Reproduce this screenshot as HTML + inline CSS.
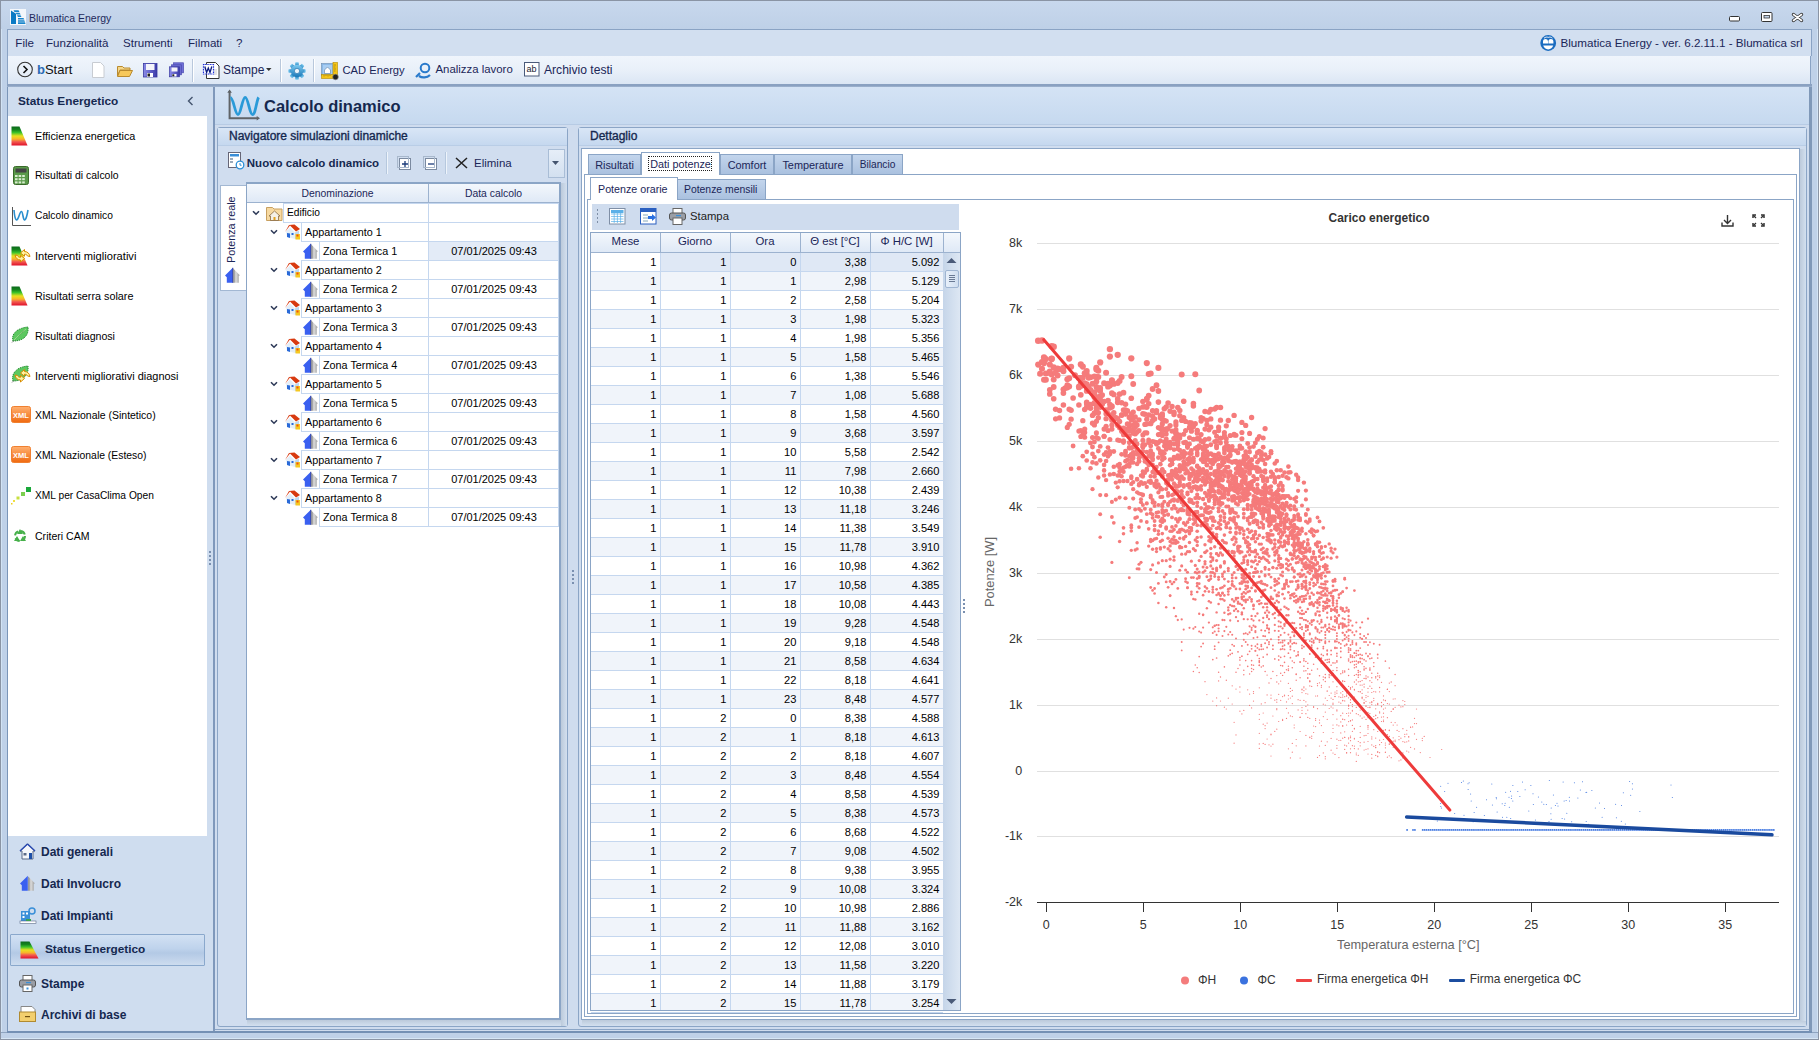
<!DOCTYPE html><html><head><meta charset="utf-8"><style>
*{margin:0;padding:0;box-sizing:border-box}
html,body{width:1819px;height:1040px;overflow:hidden;background:#c3d4ea;font-family:"Liberation Sans",sans-serif;color:#000}
.ab{position:absolute}
.t{position:absolute;white-space:nowrap;line-height:1}
.nv{color:#15284f}
svg{position:absolute;overflow:visible}
</style></head><body>
<div class="ab" style="left:0px;top:0px;width:1819px;height:1040px;background:#bfd1e8;border:1px solid #8a94a4"></div>
<div class="ab" style="left:1px;top:29px;width:1px;height:1010px;background:#d2e3f4"></div>
<div class="ab" style="left:1817px;top:29px;width:1px;height:1010px;background:#d2e3f4"></div>
<div class="ab" style="left:1px;top:1px;width:1817px;height:28px;background:linear-gradient(#c8d8ed,#bed0e7)"></div>
<svg style="left:10px;top:9px" width="16" height="16" viewBox="0 0 16 16"><rect x="0" y="0" width="16" height="16" fill="#f4f7fb"/><path d="M1 1.5L6 4.8V15H1z" fill="#0a7ac4"/><path d="M3.5 1.2h5l1 1.7h-5zM5.5 3.8h4l1.2 1.6h-4zM7 6.3h3.5l1 1.6h-3.5zM8 9h5.5l.8 1.5H8zM8 11.2h6.2l.8 1.5H8zM8 13.3h7l.5 1.7H8z" fill="#1a86cc"/></svg>
<div class="t " style="left:29px;top:13.11px;font-size:10.5px;color:#1e2a5c">Blumatica Energy</div>
<svg style="left:1729px;top:16px" width="12" height="7" viewBox="0 0 12 7"><rect x="0.5" y="0.5" width="10" height="4.5" rx="1" fill="#fff" stroke="#333" stroke-width="1"/></svg>
<svg style="left:1761px;top:12px" width="12" height="10" viewBox="0 0 12 10"><rect x="0.5" y="0.5" width="10.5" height="9" rx="1" fill="#fff" stroke="#333"/><rect x="3" y="3.5" width="5.5" height="2.5" fill="#c2d3e9" stroke="#333" stroke-width="0.8"/></svg>
<svg style="left:1792px;top:13px" width="11" height="9" viewBox="0 0 11 9"><path d="M1.5 1.5L9.5 7.5M9.5 1.5L1.5 7.5" stroke="#333" stroke-width="3.4" stroke-linecap="round"/><path d="M1.5 1.5L9.5 7.5M9.5 1.5L1.5 7.5" stroke="#fff" stroke-width="1.6" stroke-linecap="round"/></svg>
<div class="ab" style="left:7px;top:29px;width:1805px;height:27px;background:#d2dff0;border-top:1px solid #8aa3c4;border-left:1px solid #8aa3c4;border-right:1px solid #8aa3c4"></div>
<div class="t " style="left:15.3px;top:36.68px;font-size:11.6px;color:#1b2658">File</div>
<div class="t " style="left:46px;top:36.68px;font-size:11.6px;color:#1b2658">Funzionalità</div>
<div class="t " style="left:123px;top:36.68px;font-size:11.6px;color:#1b2658">Strumenti</div>
<div class="t " style="left:188px;top:36.68px;font-size:11.6px;color:#1b2658">Filmati</div>
<div class="t " style="left:236px;top:36.68px;font-size:11.6px;color:#1b2658">?</div>
<div class="t " style="left:1502.5px;width:300px;text-align:right;top:36.62px;font-size:11.67px;color:#1b2658">Blumatica Energy - ver. 6.2.11.1 - Blumatica srl</div>
<svg style="left:1540px;top:35px" width="17" height="16" viewBox="0 0 17 16"><circle cx="8.2" cy="8" r="7.9" fill="#1a6cc0"/><path d="M3 8.6V6.5C3 4.8 4.2 4 5.5 4S8 4.8 8 6.5V8.6zM8.4 8.6V6.5C8.4 4.8 9.6 4 10.9 4S13.4 4.8 13.4 6.5V8.6z" fill="#fff"/><path d="M3.2 10.6H13.2C12.6 13 10.6 14.4 8.2 14.4S3.8 13 3.2 10.6z" fill="#fff"/><path d="M4 3.2C5.5 2 7 1.8 8.2 2.4 9.4 1.8 11 2 12.4 3.2" fill="none" stroke="#fff" stroke-width=".9"/></svg>
<div class="ab" style="left:7px;top:56px;width:1804px;height:28px;background:linear-gradient(#f0f5fc,#e9f0f9 50%,#dbe6f4);border-left:1px solid #8aa3c4;border-right:1px solid #8aa3c4"></div>
<div class="ab" style="left:7px;top:84px;width:1805px;height:2px;background:#8ba3c3"></div>
<svg style="left:17px;top:61px" width="17" height="17" viewBox="0 0 17 17"><circle cx="8" cy="8.5" r="7.3" fill="none" stroke="#333" stroke-width="1.1"/><path d="M6.5 5l3.5 3.5-3.5 3.5" fill="none" stroke="#111" stroke-width="1.6"/></svg>
<div class="t " style="left:37px;top:63.00px;font-size:13px;color:#111"><span style="color:#2c6bb5;font-weight:bold">b</span>Start</div>
<svg style="left:91px;top:62px" width="14" height="16" viewBox="0 0 14 16"><path d="M1.5 .5h8l3.5 3.5v11.5h-11.5z" fill="#fff" stroke="#c8ccd2"/></svg>
<svg style="left:117px;top:64px" width="16" height="13" viewBox="0 0 16 13"><path d="M.5 2.5h5l1.5 1.5h6v2h-10l-2.5 6z" fill="#f5d78a" stroke="#b98a2e"/><path d="M3 6.5h12.5l-3 6h-12z" fill="#f7c85a" stroke="#b98a2e"/></svg>
<svg style="left:143px;top:63px" width="15" height="15" viewBox="0 0 15 15"><defs><linearGradient id="fg" x1="0" x2="1"><stop offset="0" stop-color="#8a8ae8"/><stop offset="1" stop-color="#3a3aa8"/></linearGradient></defs><rect x=".5" y=".5" width="13.5" height="13.5" fill="url(#fg)" stroke="#3838a0" stroke-width=".8"/><rect x="3" y="1" width="8.5" height="6" fill="#f4f4fa"/><rect x="4" y="10" width="6" height="4" fill="#fff"/><rect x="4.5" y="10.5" width="2.5" height="3" fill="#222"/></svg>
<svg style="left:169px;top:62px" width="15" height="16" viewBox="0 0 15 16"><rect x="4.5" y=".8" width="10" height="10" fill="#7070d8" stroke="#4a4ab0" stroke-width=".7"/><rect x="2.5" y="2.8" width="10" height="10" fill="#6a6ad0" stroke="#4a4ab0" stroke-width=".7"/><rect x=".5" y="4.8" width="10" height="10" fill="url(#fg)" stroke="#3838a0" stroke-width=".7"/><rect x="2.5" y="5.5" width="6" height="4" fill="#f4f4fa"/><rect x="3" y="12" width="4.5" height="2.5" fill="#fff"/><rect x="3.3" y="12.3" width="2" height="2" fill="#222"/></svg>
<div class="ab" style="left:192px;top:59px;width:1px;height:23px;background:#b9c8dc;box-shadow:1px 0 0 #fff"></div>
<svg style="left:203px;top:62px" width="17" height="17" viewBox="0 0 17 17"><path d="M3.5 .5h9l3.5 3.5v12.5h-12.5z" fill="#fff" stroke="#333"/><path d="M11 8h3M11 10h3M11 12h3" stroke="#aaa" stroke-width=".6"/><rect x=".5" y="2.5" width="10" height="9.5" fill="#fff" stroke="#1d2fd8" stroke-width="1.2" stroke-dasharray="1 .6"/><path d="M1.8 4.5l1.8 6 1.7-4.5 1.7 4.5 1.8-6" fill="none" stroke="#0a1a80" stroke-width="1.3"/></svg>
<div class="t " style="left:223px;top:63.84px;font-size:12px;color:#1b2658">Stampe</div>
<svg style="left:266px;top:68px" width="6" height="4" viewBox="0 0 6 4"><path d="M0 0h5.5l-2.75 3z" fill="#333"/></svg>
<div class="ab" style="left:280px;top:59px;width:1px;height:23px;background:#b9c8dc;box-shadow:1px 0 0 #fff"></div>
<svg style="left:288px;top:62px" width="18" height="18" viewBox="0 0 18 18"><defs><linearGradient id="gg" x1="0" y1="0" x2="0" y2="1"><stop offset="0" stop-color="#7ccaf0"/><stop offset="1" stop-color="#1a78b8"/></linearGradient></defs><rect x="7.2" y="0.3" width="3.6" height="4" rx=".8" fill="url(#gg)" transform="rotate(0 9 9)"/><rect x="7.2" y="0.3" width="3.6" height="4" rx=".8" fill="url(#gg)" transform="rotate(45 9 9)"/><rect x="7.2" y="0.3" width="3.6" height="4" rx=".8" fill="url(#gg)" transform="rotate(90 9 9)"/><rect x="7.2" y="0.3" width="3.6" height="4" rx=".8" fill="url(#gg)" transform="rotate(135 9 9)"/><rect x="7.2" y="0.3" width="3.6" height="4" rx=".8" fill="url(#gg)" transform="rotate(180 9 9)"/><rect x="7.2" y="0.3" width="3.6" height="4" rx=".8" fill="url(#gg)" transform="rotate(225 9 9)"/><rect x="7.2" y="0.3" width="3.6" height="4" rx=".8" fill="url(#gg)" transform="rotate(270 9 9)"/><rect x="7.2" y="0.3" width="3.6" height="4" rx=".8" fill="url(#gg)" transform="rotate(315 9 9)"/><circle cx="9" cy="9" r="6.2" fill="url(#gg)"/><circle cx="9" cy="9" r="2.6" fill="#eef6fc" stroke="#1a6aa8" stroke-width=".6"/></svg>
<div class="ab" style="left:313px;top:59px;width:1px;height:23px;background:#b9c8dc;box-shadow:1px 0 0 #fff"></div>
<svg style="left:321px;top:62px" width="18" height="18" viewBox="0 0 18 18"><rect x=".5" y="1.5" width="12" height="12" fill="#8ab8e8" stroke="#6a8ab0" stroke-width=".6"/><path d="M2 3h9v9H2z" fill="#a8cdf2"/><path d="M3.5 8L6.5 5 9.5 8V11.5h-6z" fill="#fff" stroke="#5a7aa0" stroke-width=".6"/><rect x="12" y=".5" width="4.5" height="15" fill="#f5c518" stroke="#b58a00" stroke-width=".6"/><rect x=".5" y="12.5" width="15" height="4" fill="#f5c518" stroke="#b58a00" stroke-width=".6"/><path d="M13 3h2M13 5h1.5M13 7h2M13 9h1.5M3 13v1.5M5 13v1M7 13v1.5M9 13v1" stroke="#7a5a00" stroke-width=".5"/><circle cx="14.5" cy="15" r="2.8" fill="#222" stroke="#888" stroke-width=".6"/></svg>
<div class="t " style="left:342.5px;top:64.52px;font-size:11.2px;color:#1b2658">CAD Energy</div>
<svg style="left:415px;top:62px" width="17" height="17" viewBox="0 0 17 17"><circle cx="10" cy="6" r="4.3" fill="none" stroke="#2a7acb" stroke-width="2"/><path d="M1 15l4-4M4 14c3 2 8 2 11-1" fill="none" stroke="#2a7acb" stroke-width="2.2"/></svg>
<div class="t " style="left:435.5px;top:64.35px;font-size:11.4px;color:#1b2658">Analizza lavoro</div>
<svg style="left:524px;top:62px" width="16" height="15" viewBox="0 0 16 15"><rect x=".5" y=".5" width="14.5" height="13.5" fill="#fff" stroke="#4a5a7a"/><text x="2.5" y="10" font-size="9" fill="#223" font-family="Liberation Sans">ab</text></svg>
<div class="t " style="left:544px;top:63.76px;font-size:12.1px;color:#1b2658">Archivio testi</div>
<div class="ab" style="left:7px;top:86px;width:1805px;height:946px;background:#cddcef"></div>
<div class="ab" style="left:1px;top:1032px;width:1817px;height:7px;background:#bfd1e8;border-top:1px solid #8ea4c0"></div>
<div class="ab" style="left:1px;top:1038px;width:1817px;height:1px;background:#d6e6f5"></div>
<div class="ab" style="left:7px;top:85px;width:207px;height:947px;background:#cfddef;border-left:1px solid #7a95b8;border-bottom:1px solid #8aa3c4"></div>
<div class="t nv" style="left:18px;top:96.01px;font-size:11.8px;font-weight:bold">Status Energetico</div>
<svg style="left:187px;top:96px" width="7" height="10" viewBox="0 0 7 10"><path d="M5.5 1L1.5 5l4 4" fill="none" stroke="#44546e" stroke-width="1.4"/></svg>
<div class="ab" style="left:8px;top:116px;width:199px;height:720px;background:#fff"></div>
<div class="ab" style="left:207px;top:116px;width:6px;height:916px;background:#cfddef"></div>
<div class="ab" style="left:209px;top:551px;width:2px;height:2px;background:#7a90b0"></div>
<div class="ab" style="left:209px;top:555px;width:2px;height:2px;background:#7a90b0"></div>
<div class="ab" style="left:209px;top:559px;width:2px;height:2px;background:#7a90b0"></div>
<div class="ab" style="left:209px;top:563px;width:2px;height:2px;background:#7a90b0"></div>
<div class="t " style="left:35px;top:130.92px;font-size:10.84px;">Efficienza energetica</div>
<svg style="left:11px;top:126px" width="17" height="20" viewBox="0 0 17 20"><defs><linearGradient id="eg1" x1="0" y1="0" x2="0" y2="1"><stop offset="0" stop-color="#0b6a1c"/><stop offset=".18" stop-color="#16861e"/><stop offset=".32" stop-color="#3cc22a"/><stop offset=".5" stop-color="#e8e020"/><stop offset=".66" stop-color="#f7b52a"/><stop offset=".8" stop-color="#f25a50"/><stop offset="1" stop-color="#e0102a"/></linearGradient></defs><path d="M0.5 0.5H8.5L16.5 19.5H0.5z" fill="url(#eg1)"/></svg>
<div class="t " style="left:35px;top:171.25px;font-size:10.45px;">Risultati di calcolo</div>
<svg style="left:13px;top:166px" width="16" height="19" viewBox="0 0 16 19"><rect x=".5" y=".5" width="15" height="18" rx="2" fill="#5a9a4a" stroke="#3a6a2a"/><rect x="2.5" y="2.5" width="11" height="4" fill="#444"/><rect x="2.0" y="9.0" width="2.6" height="2" fill="#d9ecd0"/><rect x="2.0" y="12.2" width="2.6" height="2" fill="#d9ecd0"/><rect x="2.0" y="15.4" width="2.6" height="2" fill="#d9ecd0"/><rect x="5.6" y="9.0" width="2.6" height="2" fill="#d9ecd0"/><rect x="5.6" y="12.2" width="2.6" height="2" fill="#d9ecd0"/><rect x="5.6" y="15.4" width="2.6" height="2" fill="#d9ecd0"/><rect x="9.2" y="9.0" width="2.6" height="2" fill="#d9ecd0"/><rect x="9.2" y="12.2" width="2.6" height="2" fill="#d9ecd0"/><rect x="9.2" y="15.4" width="2.6" height="2" fill="#d9ecd0"/></svg>
<div class="t " style="left:35px;top:211.44px;font-size:10.23px;">Calcolo dinamico</div>
<svg style="left:12px;top:207px" width="19" height="19" viewBox="0 0 19 19"><path d="M.5 0v18.5H19" fill="none" stroke="#555" stroke-width="1"/><path d="M2 3c1 12 3 12 5 6s3-6 4 0 3 6 5-6" fill="none" stroke="#2a8fcf" stroke-width="1.6"/></svg>
<div class="t " style="left:35px;top:250.67px;font-size:11.14px;">Interventi migliorativi</div>
<svg style="left:11px;top:246px" width="17" height="20" viewBox="0 0 17 20"><defs><linearGradient id="eg2" x1="0" y1="0" x2="0" y2="1"><stop offset="0" stop-color="#0b6a1c"/><stop offset=".18" stop-color="#16861e"/><stop offset=".32" stop-color="#3cc22a"/><stop offset=".5" stop-color="#e8e020"/><stop offset=".66" stop-color="#f7b52a"/><stop offset=".8" stop-color="#f25a50"/><stop offset="1" stop-color="#e0102a"/></linearGradient></defs><path d="M0.5 0.5H8.5L16.5 19.5H0.5z" fill="url(#eg2)"/></svg>
<svg style="left:14px;top:247px" width="17" height="17" viewBox="0 0 17 17"><path d="M6.5 6L10.5 2.5V4.5C13.5 4.5 15.5 6.5 16 9.5L13.5 9C13 7.8 12 7.2 10.5 7.2V9.2Z" fill="#fff3a0" stroke="#d88a00" stroke-width="1"/><path d="M10.5 11.5L6.5 15V13C3.5 13 1.5 11 1 8L3.5 8.5C4 9.7 5 10.3 6.5 10.3V8.3Z" fill="#fff3a0" stroke="#d88a00" stroke-width="1"/></svg>
<div class="t " style="left:35px;top:290.96px;font-size:10.8px;">Risultati serra solare</div>
<svg style="left:11px;top:286px" width="17" height="20" viewBox="0 0 17 20"><defs><linearGradient id="eg3" x1="0" y1="0" x2="0" y2="1"><stop offset="0" stop-color="#0b6a1c"/><stop offset=".18" stop-color="#16861e"/><stop offset=".32" stop-color="#3cc22a"/><stop offset=".5" stop-color="#e8e020"/><stop offset=".66" stop-color="#f7b52a"/><stop offset=".8" stop-color="#f25a50"/><stop offset="1" stop-color="#e0102a"/></linearGradient></defs><path d="M0.5 0.5H8.5L16.5 19.5H0.5z" fill="url(#eg3)"/></svg>
<div class="t " style="left:35px;top:331.14px;font-size:10.58px;">Risultati diagnosi</div>
<svg style="left:11px;top:326px" width="18" height="18" viewBox="0 0 18 18"><path d="M2 15C0 8 6 2 17 1c1 9-5 14-15 14z" fill="#5cc860" stroke="#1e8a2a" stroke-dasharray="1.2 .8"/><path d="M3 14C7 10 10 7 15 3" stroke="#9ada8a" stroke-width="1"/><path d="M1 16.5l2-2" stroke="#888" stroke-width="1"/></svg>
<div class="t " style="left:35px;top:370.84px;font-size:10.94px;">Interventi migliorativi diagnosi</div>
<svg style="left:11px;top:365px" width="18" height="19" viewBox="0 0 18 19"><path d="M2 16C0 8 6 2 17 1c1 9-5 15-15 15z" fill="#5cc860" stroke="#1e8a2a" stroke-dasharray="1.2 .8"/><path d="M1 17.5l2-2" stroke="#888" stroke-width="1"/></svg>
<svg style="left:14px;top:367px" width="17" height="17" viewBox="0 0 17 17"><path d="M6.5 6L10.5 2.5V4.5C13.5 4.5 15.5 6.5 16 9.5L13.5 9C13 7.8 12 7.2 10.5 7.2V9.2Z" fill="#fff3a0" stroke="#d88a00" stroke-width="1"/><path d="M10.5 11.5L6.5 15V13C3.5 13 1.5 11 1 8L3.5 8.5C4 9.7 5 10.3 6.5 10.3V8.3Z" fill="#fff3a0" stroke="#d88a00" stroke-width="1"/></svg>
<div class="t " style="left:35px;top:411.24px;font-size:10.47px;">XML Nazionale (Sintetico)</div>
<svg style="left:11px;top:406px" width="20" height="17" viewBox="0 0 20 17"><defs><linearGradient id="xg" x1="0" y1="0" x2="0" y2="1"><stop offset="0" stop-color="#ffb070"/><stop offset="1" stop-color="#f06a10"/></linearGradient></defs><rect x=".5" y=".5" width="19" height="16" rx="2" fill="url(#xg)" stroke="#f08030"/><text x="2" y="11.5" font-size="7.5" font-weight="bold" fill="#fff" font-family="Liberation Sans">XML</text></svg>
<div class="t " style="left:35px;top:451.30px;font-size:10.39px;">XML Nazionale (Esteso)</div>
<svg style="left:11px;top:446px" width="20" height="17" viewBox="0 0 20 17"><defs><linearGradient id="xg" x1="0" y1="0" x2="0" y2="1"><stop offset="0" stop-color="#ffb070"/><stop offset="1" stop-color="#f06a10"/></linearGradient></defs><rect x=".5" y=".5" width="19" height="16" rx="2" fill="url(#xg)" stroke="#f08030"/><text x="2" y="11.5" font-size="7.5" font-weight="bold" fill="#fff" font-family="Liberation Sans">XML</text></svg>
<div class="t " style="left:35px;top:491.44px;font-size:10.23px;">XML per CasaClima Open</div>
<svg style="left:11px;top:486px" width="20" height="19" viewBox="0 0 20 19"><rect x="15" y="1" width="5" height="5" fill="#1aa83a"/><rect x="10" y="6" width="4" height="4" fill="#7ccf50"/><rect x="5.5" y="10.5" width="3" height="3" fill="#c8e040"/><rect x="2" y="14" width="2" height="2" fill="#f0e040"/><rect x="0" y="17" width="1.5" height="1.5" fill="#f0d020"/></svg>
<div class="t " style="left:35px;top:531.16px;font-size:10.56px;">Criteri CAM</div>
<svg style="left:12px;top:528px" width="16" height="15" viewBox="0 0 16 15"><path d="M8 1l3 5H5zM2 13l3-5 3 5zM14 13H8l3-5z" fill="#46b04a"/><circle cx="8" cy="8" r="5" fill="none" stroke="#46b04a" stroke-width="2" stroke-dasharray="5 3"/></svg>
<div class="t nv" style="left:41px;top:845.84px;font-size:12px;font-weight:bold">Dati generali</div>
<svg style="left:19px;top:843px" width="17" height="17" viewBox="0 0 17 17"><path d="M8.5 1L1 8h2v8h11V8h2z" fill="#f4f6fa" stroke="#5a6a88"/><path d="M8.5 1L1 8M8.5 1L16 8" stroke="#2a4ab0" stroke-width="1.5"/><rect x="10" y="10" width="3" height="6" fill="#1d4fa8"/><rect x="4.5" y="10" width="3" height="2.5" fill="#5a6a88"/></svg>
<div class="t nv" style="left:41px;top:877.84px;font-size:12px;font-weight:bold">Dati Involucro</div>
<svg style="left:19px;top:875px" width="17" height="17" viewBox="0 0 17 17"><defs><linearGradient id="gz2" x1="0" x2="1"><stop offset="0" stop-color="#777"/><stop offset=".4" stop-color="#ddd"/><stop offset="1" stop-color="#999"/></linearGradient></defs><path d="M1 8.5L8.8 .8V15.8H2.8V10.3z" fill="#3a60f0"/><path d="M9.3 1.5L15.8 8.2 14.8 9V15.8H9.3z" fill="url(#gz2)"/></svg>
<div class="t nv" style="left:41px;top:909.84px;font-size:12px;font-weight:bold">Dati Impianti</div>
<svg style="left:20px;top:907px" width="16" height="17" viewBox="0 0 16 17"><rect x="1" y="4" width="9" height="10" fill="#3a8fd8"/><rect x="2.5" y="5.5" width="2" height="2" fill="#fff"/><rect x="6" y="5.5" width="2" height="2" fill="#fff"/><rect x="2.5" y="9" width="2" height="2" fill="#fff"/><circle cx="12" cy="4" r="3" fill="none" stroke="#3a8fd8" stroke-width="1.5"/><rect x="0" y="14" width="16" height="2.5" fill="#fff" stroke="#5a6a88" stroke-width=".6"/><rect x="6" y="12" width="5" height="2" fill="#3aa050"/></svg>
<div class="ab" style="left:10px;top:934px;width:195px;height:32px;background:linear-gradient(#d2e1f3,#bfd3ec 45%,#b3c9e5 60%,#cddcef);border:1px solid #8aa8cc;border-radius:1px"></div>
<svg style="left:20px;top:941px" width="19" height="18" viewBox="0 0 19 18"><defs><linearGradient id="eg4" x1="0" y1="0" x2="0" y2="1"><stop offset="0" stop-color="#0b6a1c"/><stop offset=".18" stop-color="#16861e"/><stop offset=".32" stop-color="#3cc22a"/><stop offset=".5" stop-color="#e8e020"/><stop offset=".66" stop-color="#f7b52a"/><stop offset=".8" stop-color="#f25a50"/><stop offset="1" stop-color="#e0102a"/></linearGradient></defs><path d="M0.5 0.5H9.5L18.5 17.5H0.5z" fill="url(#eg4)"/></svg>
<div class="t nv" style="left:45px;top:944.41px;font-size:11.8px;font-weight:bold">Status Energetico</div>
<div class="t nv" style="left:41px;top:977.64px;font-size:12px;font-weight:bold">Stampe</div>
<svg style="left:19px;top:975px" width="17" height="17" viewBox="0 0 17 17"><rect x="4" y="0.5" width="9" height="5" fill="#fff" stroke="#666"/><rect x=".5" y="5" width="16" height="7" rx="2" fill="#9a9ea6" stroke="#555"/><rect x="4" y="10" width="9" height="6.5" fill="#fff" stroke="#666"/><rect x="7" y="7" width="5" height="1.2" fill="#3a8fd8"/><rect x="7.5" y="12.5" width="2" height="2" fill="#3a8fd8"/></svg>
<div class="t nv" style="left:41px;top:1008.84px;font-size:12px;font-weight:bold">Archivi di base</div>
<svg style="left:19px;top:1006px" width="17" height="16" viewBox="0 0 17 16"><path d="M2 .5h11l3 3v3H2z" fill="#fff" stroke="#888"/><rect x=".5" y="6" width="16" height="9.5" fill="#f3cf6e" stroke="#b08a30"/><rect x="6" y="10" width="5" height="1.2" fill="#705010"/></svg>
<div class="ab" style="left:213px;top:86px;width:1599px;height:946px;background:#cfdcee"></div>
<div class="ab" style="left:213px;top:86px;width:2px;height:946px;background:#7f98bb"></div>
<div class="ab" style="left:215px;top:87px;width:1594px;height:38px;background:linear-gradient(#d4e3f5,#c6d9ef);border-bottom:1px solid #b7cbe4"></div>
<div class="ab" style="left:1809px;top:86px;width:3px;height:946px;background:#7f98b8"></div>
<div class="ab" style="left:215px;top:1029px;width:1594px;height:1px;background:#8ba5c6"></div>
<div class="ab" style="left:7px;top:1031px;width:1805px;height:2px;background:#7490b4"></div>
<div class="ab" style="left:7px;top:84px;width:1805px;height:3px;background:linear-gradient(#8aa1c1,#8aa1c1 66%,#a9bcd6)"></div>
<svg style="left:225px;top:88px" width="36" height="36" viewBox="0 0 36 36"><path d="M4.6 3v27.3H33" fill="none" stroke="#5f6468" stroke-width="2"/><path d="M4.6 1.5L2.3 4.8h4.6zM35 30.3l-3.3-2.3v4.6z" fill="#5f6468"/><path d="M5.4 9.7C8.5 9.7 10 26.6 13 26.6S17.2 9.3 20.2 9.3 24.5 26.6 27.5 26.6 31.6 12 33.6 9.3" fill="none" stroke="#2a9ad8" stroke-width="2.8"/></svg>
<div class="t nv" style="left:264px;top:98.03px;font-size:16.5px;font-weight:bold">Calcolo dinamico</div>
<div class="ab" style="left:217px;top:127px;width:351px;height:900px;background:#d0ddef;border:1px solid #8ba5c6;border-radius:3px"></div>
<div class="ab" style="left:218px;top:128px;width:349px;height:18px;background:linear-gradient(#d9e6f6,#c5d8ef);border-bottom:1px solid #b9cde6"></div>
<div class="t nv" style="left:229px;top:129.64px;font-size:12px;-webkit-text-stroke:0.35px #15284f">Navigatore simulazioni dinamiche</div>
<div class="ab" style="left:247px;top:1020px;width:320px;height:6px;background:linear-gradient(#bccadb,#d3e0ef)"></div>
<svg style="left:228px;top:152px" width="16" height="17" viewBox="0 0 16 17"><rect x=".5" y=".5" width="12" height="15" fill="#fff" stroke="#667"/><rect x="2" y="2" width="9" height="2.5" fill="#3a8fd8"/><rect x="2" y="6" width="3" height="2" fill="#9ab"/><rect x="2" y="9" width="3" height="2" fill="#9ab"/><circle cx="12" cy="13" r="3.8" fill="#fff" stroke="#2a8fd8" stroke-width="1.3"/><path d="M12 11v2.2h1.6" stroke="#2a8fd8" fill="none"/></svg>
<div class="t nv" style="left:246.8px;top:158.27px;font-size:11.5px;font-weight:bold">Nuovo calcolo dinamico</div>
<div class="ab" style="left:386px;top:152px;width:1px;height:22px;background:#b6c8de;box-shadow:1px 0 0 #eef4fb"></div>
<svg style="left:397px;top:156px" width="14" height="14" viewBox="0 0 14 14"><rect x="2.5" y="2.5" width="11" height="11" fill="#fff" stroke="#7b8aa0"/><rect x=".5" y=".5" width="11" height="11" fill="none" stroke="#a8b8cc"/><path d="M8 5v6M5 8h6" stroke="#1c3c7a" stroke-width="1.3"/></svg>
<svg style="left:423px;top:156px" width="14" height="14" viewBox="0 0 14 14"><rect x="2.5" y="2.5" width="11" height="11" fill="#fff" stroke="#7b8aa0"/><rect x=".5" y=".5" width="11" height="11" fill="none" stroke="#a8b8cc"/><path d="M5 8h6" stroke="#1c3c7a" stroke-width="1.3"/></svg>
<div class="ab" style="left:445px;top:152px;width:1px;height:22px;background:#b6c8de;box-shadow:1px 0 0 #eef4fb"></div>
<svg style="left:455px;top:157px" width="13" height="12" viewBox="0 0 13 12"><path d="M1 1l11 10M12 1L1 11" stroke="#222" stroke-width="1.5"/></svg>
<div class="t " style="left:474px;top:158.27px;font-size:11.5px;color:#1b2658">Elimina</div>
<div class="ab" style="left:548px;top:149px;width:17px;height:29px;background:linear-gradient(#e6eef8,#d3e0f0);border:1px solid #a9bdd6"></div>
<svg style="left:552px;top:161px" width="8" height="5" viewBox="0 0 8 5"><path d="M0 0h7l-3.5 4z" fill="#44546e"/></svg>
<div class="ab" style="left:220px;top:185px;width:26px;height:106px;background:#fff;border:1px solid #a3b8d3;border-right:none"></div>
<div class="t" style="left:226px;top:263px;font-size:10.8px;transform:rotate(-90deg);transform-origin:0 0;color:#1b2658">Potenza reale</div>
<svg style="left:224px;top:267px" width="17" height="17" viewBox="0 0 17 17"><path d="M1 8.5L8.8 .8V15.8H2.8V10.3z" fill="#3a60f0"/><path d="M8.8 .8v15" stroke="#2a3aa0" stroke-width="1"/><path d="M9.3 1.5L15.8 8.2 14.8 9V15.8H9.3z" fill="url(#gz)"/></svg>
<div class="ab" style="left:246px;top:182px;width:315px;height:838px;background:#fff;border:1px solid #8ba5c6;border-top:2px solid #8ba5c6;border-bottom:2px solid #8ba5c6;border-right:2px solid #8ba5c6"></div>
<div class="ab" style="left:561px;top:183px;width:6px;height:843px;background:linear-gradient(90deg,#bccadb,#d3e0ef)"></div>
<div class="ab" style="left:247px;top:184px;width:312px;height:19px;background:linear-gradient(#f3f7fc,#dfe9f6);border-bottom:1px solid #9cb2cf"></div>
<div class="ab" style="left:428px;top:184px;width:1px;height:19px;background:#9cb2cf"></div>
<div class="t " style="left:37.5px;width:600px;text-align:center;top:188.70px;font-size:10.4px;color:#1b2658">Denominazione</div>
<div class="t " style="left:193.5px;width:600px;text-align:center;top:188.70px;font-size:10.4px;color:#1b2658">Data calcolo</div>
<div class="ab" style="left:283px;top:203px;width:146px;height:20px;border:1px solid #c5d7ef;border-right:none"></div>
<div class="ab" style="left:428px;top:203px;width:131px;height:20px;border:1px solid #c5d7ef;border-left:1px solid #c5d7ef"></div>
<div class="t " style="left:287px;top:208.37px;font-size:10.2px;">Edificio</div>
<svg style="left:252px;top:210px" width="8" height="6" viewBox="0 0 8 6"><path d="M1 1.2l3 3 3-3" fill="none" stroke="#2e3a58" stroke-width="1.6"/></svg>
<svg style="left:266px;top:205px" width="17" height="16" viewBox="0 0 17 16"><path d="M.5 2.5h6l1.5 1.5h8v11.5H.5z" fill="#f7d9a0" stroke="#c8a060"/><path d="M8.5 6L3 11h1.5v4.5h8V11H14z" fill="#f5f0e6" stroke="#8a6a40" stroke-width=".8"/><rect x="7.5" y="12" width="2" height="3" fill="#e0a020"/></svg>
<div class="ab" style="left:301px;top:222px;width:128px;height:20px;border:1px solid #c5d7ef;border-right:none"></div>
<div class="ab" style="left:428px;top:222px;width:131px;height:20px;border:1px solid #c5d7ef;border-left:1px solid #c5d7ef"></div>
<div class="t " style="left:305px;top:226.86px;font-size:10.8px;">Appartamento 1</div>
<svg style="left:270px;top:229px" width="8" height="6" viewBox="0 0 8 6"><path d="M1 1.2l3 3 3-3" fill="none" stroke="#2e3a58" stroke-width="1.6"/></svg>
<svg style="left:284px;top:224px" width="17" height="16" viewBox="0 0 17 16"><path d="M2 7.5L6 3.5 11 8.5V15L3 13z" fill="#e4eef8"/><path d="M11 8.5L15 6.5V13L11 15z" fill="#bcd8f0"/><path d="M1 8L6 1.5 12 7.5 16 5 10.5 .5 5 1z" fill="#d83a10"/><path d="M3 9v4l3 1V9.5z" fill="#2a6ad8"/><rect x="7.5" y="9" width="2" height="2" fill="#2a6ad8"/><rect x="11.5" y="10" width="4.5" height="5.5" fill="#f6c820"/><rect x="12.5" y="10.5" width="2" height="2" fill="#f05010"/></svg>
<div class="ab" style="left:319px;top:241px;width:110px;height:20px;border:1px solid #c5d7ef;border-right:none"></div>
<div class="ab" style="left:428px;top:241px;width:131px;height:20px;border:1px solid #c5d7ef;border-left:1px solid #c5d7ef;background:#e3ebf7"></div>
<div class="t " style="left:323px;top:245.86px;font-size:10.8px;">Zona Termica 1</div>
<div class="t " style="left:194px;width:600px;text-align:center;top:245.69px;font-size:11px;">07/01/2025 09:43</div>
<svg style="left:302px;top:243px" width="17" height="17" viewBox="0 0 17 17"><defs><linearGradient id="gz" x1="0" x2="1"><stop offset="0" stop-color="#777"/><stop offset=".4" stop-color="#ddd"/><stop offset="1" stop-color="#999"/></linearGradient></defs><path d="M1 8.5L8.8 .8V15.8H2.8V10.3z" fill="#3a60f0"/><path d="M8.8 .8v15" stroke="#2a3aa0" stroke-width="1"/><path d="M9.3 1.5L15.8 8.2 14.8 9V15.8H9.3z" fill="url(#gz)"/></svg>
<div class="ab" style="left:301px;top:260px;width:128px;height:20px;border:1px solid #c5d7ef;border-right:none"></div>
<div class="ab" style="left:428px;top:260px;width:131px;height:20px;border:1px solid #c5d7ef;border-left:1px solid #c5d7ef"></div>
<div class="t " style="left:305px;top:264.86px;font-size:10.8px;">Appartamento 2</div>
<svg style="left:270px;top:267px" width="8" height="6" viewBox="0 0 8 6"><path d="M1 1.2l3 3 3-3" fill="none" stroke="#2e3a58" stroke-width="1.6"/></svg>
<svg style="left:284px;top:262px" width="17" height="16" viewBox="0 0 17 16"><path d="M2 7.5L6 3.5 11 8.5V15L3 13z" fill="#e4eef8"/><path d="M11 8.5L15 6.5V13L11 15z" fill="#bcd8f0"/><path d="M1 8L6 1.5 12 7.5 16 5 10.5 .5 5 1z" fill="#d83a10"/><path d="M3 9v4l3 1V9.5z" fill="#2a6ad8"/><rect x="7.5" y="9" width="2" height="2" fill="#2a6ad8"/><rect x="11.5" y="10" width="4.5" height="5.5" fill="#f6c820"/><rect x="12.5" y="10.5" width="2" height="2" fill="#f05010"/></svg>
<div class="ab" style="left:319px;top:279px;width:110px;height:20px;border:1px solid #c5d7ef;border-right:none"></div>
<div class="ab" style="left:428px;top:279px;width:131px;height:20px;border:1px solid #c5d7ef;border-left:1px solid #c5d7ef"></div>
<div class="t " style="left:323px;top:283.86px;font-size:10.8px;">Zona Termica 2</div>
<div class="t " style="left:194px;width:600px;text-align:center;top:283.69px;font-size:11px;">07/01/2025 09:43</div>
<svg style="left:302px;top:281px" width="17" height="17" viewBox="0 0 17 17"><defs><linearGradient id="gz" x1="0" x2="1"><stop offset="0" stop-color="#777"/><stop offset=".4" stop-color="#ddd"/><stop offset="1" stop-color="#999"/></linearGradient></defs><path d="M1 8.5L8.8 .8V15.8H2.8V10.3z" fill="#3a60f0"/><path d="M8.8 .8v15" stroke="#2a3aa0" stroke-width="1"/><path d="M9.3 1.5L15.8 8.2 14.8 9V15.8H9.3z" fill="url(#gz)"/></svg>
<div class="ab" style="left:301px;top:298px;width:128px;height:20px;border:1px solid #c5d7ef;border-right:none"></div>
<div class="ab" style="left:428px;top:298px;width:131px;height:20px;border:1px solid #c5d7ef;border-left:1px solid #c5d7ef"></div>
<div class="t " style="left:305px;top:302.86px;font-size:10.8px;">Appartamento 3</div>
<svg style="left:270px;top:305px" width="8" height="6" viewBox="0 0 8 6"><path d="M1 1.2l3 3 3-3" fill="none" stroke="#2e3a58" stroke-width="1.6"/></svg>
<svg style="left:284px;top:300px" width="17" height="16" viewBox="0 0 17 16"><path d="M2 7.5L6 3.5 11 8.5V15L3 13z" fill="#e4eef8"/><path d="M11 8.5L15 6.5V13L11 15z" fill="#bcd8f0"/><path d="M1 8L6 1.5 12 7.5 16 5 10.5 .5 5 1z" fill="#d83a10"/><path d="M3 9v4l3 1V9.5z" fill="#2a6ad8"/><rect x="7.5" y="9" width="2" height="2" fill="#2a6ad8"/><rect x="11.5" y="10" width="4.5" height="5.5" fill="#f6c820"/><rect x="12.5" y="10.5" width="2" height="2" fill="#f05010"/></svg>
<div class="ab" style="left:319px;top:317px;width:110px;height:20px;border:1px solid #c5d7ef;border-right:none"></div>
<div class="ab" style="left:428px;top:317px;width:131px;height:20px;border:1px solid #c5d7ef;border-left:1px solid #c5d7ef"></div>
<div class="t " style="left:323px;top:321.86px;font-size:10.8px;">Zona Termica 3</div>
<div class="t " style="left:194px;width:600px;text-align:center;top:321.69px;font-size:11px;">07/01/2025 09:43</div>
<svg style="left:302px;top:319px" width="17" height="17" viewBox="0 0 17 17"><defs><linearGradient id="gz" x1="0" x2="1"><stop offset="0" stop-color="#777"/><stop offset=".4" stop-color="#ddd"/><stop offset="1" stop-color="#999"/></linearGradient></defs><path d="M1 8.5L8.8 .8V15.8H2.8V10.3z" fill="#3a60f0"/><path d="M8.8 .8v15" stroke="#2a3aa0" stroke-width="1"/><path d="M9.3 1.5L15.8 8.2 14.8 9V15.8H9.3z" fill="url(#gz)"/></svg>
<div class="ab" style="left:301px;top:336px;width:128px;height:20px;border:1px solid #c5d7ef;border-right:none"></div>
<div class="ab" style="left:428px;top:336px;width:131px;height:20px;border:1px solid #c5d7ef;border-left:1px solid #c5d7ef"></div>
<div class="t " style="left:305px;top:340.86px;font-size:10.8px;">Appartamento 4</div>
<svg style="left:270px;top:343px" width="8" height="6" viewBox="0 0 8 6"><path d="M1 1.2l3 3 3-3" fill="none" stroke="#2e3a58" stroke-width="1.6"/></svg>
<svg style="left:284px;top:338px" width="17" height="16" viewBox="0 0 17 16"><path d="M2 7.5L6 3.5 11 8.5V15L3 13z" fill="#e4eef8"/><path d="M11 8.5L15 6.5V13L11 15z" fill="#bcd8f0"/><path d="M1 8L6 1.5 12 7.5 16 5 10.5 .5 5 1z" fill="#d83a10"/><path d="M3 9v4l3 1V9.5z" fill="#2a6ad8"/><rect x="7.5" y="9" width="2" height="2" fill="#2a6ad8"/><rect x="11.5" y="10" width="4.5" height="5.5" fill="#f6c820"/><rect x="12.5" y="10.5" width="2" height="2" fill="#f05010"/></svg>
<div class="ab" style="left:319px;top:355px;width:110px;height:20px;border:1px solid #c5d7ef;border-right:none"></div>
<div class="ab" style="left:428px;top:355px;width:131px;height:20px;border:1px solid #c5d7ef;border-left:1px solid #c5d7ef"></div>
<div class="t " style="left:323px;top:359.86px;font-size:10.8px;">Zona Termica 4</div>
<div class="t " style="left:194px;width:600px;text-align:center;top:359.69px;font-size:11px;">07/01/2025 09:43</div>
<svg style="left:302px;top:357px" width="17" height="17" viewBox="0 0 17 17"><defs><linearGradient id="gz" x1="0" x2="1"><stop offset="0" stop-color="#777"/><stop offset=".4" stop-color="#ddd"/><stop offset="1" stop-color="#999"/></linearGradient></defs><path d="M1 8.5L8.8 .8V15.8H2.8V10.3z" fill="#3a60f0"/><path d="M8.8 .8v15" stroke="#2a3aa0" stroke-width="1"/><path d="M9.3 1.5L15.8 8.2 14.8 9V15.8H9.3z" fill="url(#gz)"/></svg>
<div class="ab" style="left:301px;top:374px;width:128px;height:20px;border:1px solid #c5d7ef;border-right:none"></div>
<div class="ab" style="left:428px;top:374px;width:131px;height:20px;border:1px solid #c5d7ef;border-left:1px solid #c5d7ef"></div>
<div class="t " style="left:305px;top:378.86px;font-size:10.8px;">Appartamento 5</div>
<svg style="left:270px;top:381px" width="8" height="6" viewBox="0 0 8 6"><path d="M1 1.2l3 3 3-3" fill="none" stroke="#2e3a58" stroke-width="1.6"/></svg>
<svg style="left:284px;top:376px" width="17" height="16" viewBox="0 0 17 16"><path d="M2 7.5L6 3.5 11 8.5V15L3 13z" fill="#e4eef8"/><path d="M11 8.5L15 6.5V13L11 15z" fill="#bcd8f0"/><path d="M1 8L6 1.5 12 7.5 16 5 10.5 .5 5 1z" fill="#d83a10"/><path d="M3 9v4l3 1V9.5z" fill="#2a6ad8"/><rect x="7.5" y="9" width="2" height="2" fill="#2a6ad8"/><rect x="11.5" y="10" width="4.5" height="5.5" fill="#f6c820"/><rect x="12.5" y="10.5" width="2" height="2" fill="#f05010"/></svg>
<div class="ab" style="left:319px;top:393px;width:110px;height:20px;border:1px solid #c5d7ef;border-right:none"></div>
<div class="ab" style="left:428px;top:393px;width:131px;height:20px;border:1px solid #c5d7ef;border-left:1px solid #c5d7ef"></div>
<div class="t " style="left:323px;top:397.86px;font-size:10.8px;">Zona Termica 5</div>
<div class="t " style="left:194px;width:600px;text-align:center;top:397.69px;font-size:11px;">07/01/2025 09:43</div>
<svg style="left:302px;top:395px" width="17" height="17" viewBox="0 0 17 17"><defs><linearGradient id="gz" x1="0" x2="1"><stop offset="0" stop-color="#777"/><stop offset=".4" stop-color="#ddd"/><stop offset="1" stop-color="#999"/></linearGradient></defs><path d="M1 8.5L8.8 .8V15.8H2.8V10.3z" fill="#3a60f0"/><path d="M8.8 .8v15" stroke="#2a3aa0" stroke-width="1"/><path d="M9.3 1.5L15.8 8.2 14.8 9V15.8H9.3z" fill="url(#gz)"/></svg>
<div class="ab" style="left:301px;top:412px;width:128px;height:20px;border:1px solid #c5d7ef;border-right:none"></div>
<div class="ab" style="left:428px;top:412px;width:131px;height:20px;border:1px solid #c5d7ef;border-left:1px solid #c5d7ef"></div>
<div class="t " style="left:305px;top:416.86px;font-size:10.8px;">Appartamento 6</div>
<svg style="left:270px;top:419px" width="8" height="6" viewBox="0 0 8 6"><path d="M1 1.2l3 3 3-3" fill="none" stroke="#2e3a58" stroke-width="1.6"/></svg>
<svg style="left:284px;top:414px" width="17" height="16" viewBox="0 0 17 16"><path d="M2 7.5L6 3.5 11 8.5V15L3 13z" fill="#e4eef8"/><path d="M11 8.5L15 6.5V13L11 15z" fill="#bcd8f0"/><path d="M1 8L6 1.5 12 7.5 16 5 10.5 .5 5 1z" fill="#d83a10"/><path d="M3 9v4l3 1V9.5z" fill="#2a6ad8"/><rect x="7.5" y="9" width="2" height="2" fill="#2a6ad8"/><rect x="11.5" y="10" width="4.5" height="5.5" fill="#f6c820"/><rect x="12.5" y="10.5" width="2" height="2" fill="#f05010"/></svg>
<div class="ab" style="left:319px;top:431px;width:110px;height:20px;border:1px solid #c5d7ef;border-right:none"></div>
<div class="ab" style="left:428px;top:431px;width:131px;height:20px;border:1px solid #c5d7ef;border-left:1px solid #c5d7ef"></div>
<div class="t " style="left:323px;top:435.86px;font-size:10.8px;">Zona Termica 6</div>
<div class="t " style="left:194px;width:600px;text-align:center;top:435.69px;font-size:11px;">07/01/2025 09:43</div>
<svg style="left:302px;top:433px" width="17" height="17" viewBox="0 0 17 17"><defs><linearGradient id="gz" x1="0" x2="1"><stop offset="0" stop-color="#777"/><stop offset=".4" stop-color="#ddd"/><stop offset="1" stop-color="#999"/></linearGradient></defs><path d="M1 8.5L8.8 .8V15.8H2.8V10.3z" fill="#3a60f0"/><path d="M8.8 .8v15" stroke="#2a3aa0" stroke-width="1"/><path d="M9.3 1.5L15.8 8.2 14.8 9V15.8H9.3z" fill="url(#gz)"/></svg>
<div class="ab" style="left:301px;top:450px;width:128px;height:20px;border:1px solid #c5d7ef;border-right:none"></div>
<div class="ab" style="left:428px;top:450px;width:131px;height:20px;border:1px solid #c5d7ef;border-left:1px solid #c5d7ef"></div>
<div class="t " style="left:305px;top:454.86px;font-size:10.8px;">Appartamento 7</div>
<svg style="left:270px;top:457px" width="8" height="6" viewBox="0 0 8 6"><path d="M1 1.2l3 3 3-3" fill="none" stroke="#2e3a58" stroke-width="1.6"/></svg>
<svg style="left:284px;top:452px" width="17" height="16" viewBox="0 0 17 16"><path d="M2 7.5L6 3.5 11 8.5V15L3 13z" fill="#e4eef8"/><path d="M11 8.5L15 6.5V13L11 15z" fill="#bcd8f0"/><path d="M1 8L6 1.5 12 7.5 16 5 10.5 .5 5 1z" fill="#d83a10"/><path d="M3 9v4l3 1V9.5z" fill="#2a6ad8"/><rect x="7.5" y="9" width="2" height="2" fill="#2a6ad8"/><rect x="11.5" y="10" width="4.5" height="5.5" fill="#f6c820"/><rect x="12.5" y="10.5" width="2" height="2" fill="#f05010"/></svg>
<div class="ab" style="left:319px;top:469px;width:110px;height:20px;border:1px solid #c5d7ef;border-right:none"></div>
<div class="ab" style="left:428px;top:469px;width:131px;height:20px;border:1px solid #c5d7ef;border-left:1px solid #c5d7ef"></div>
<div class="t " style="left:323px;top:473.86px;font-size:10.8px;">Zona Termica 7</div>
<div class="t " style="left:194px;width:600px;text-align:center;top:473.69px;font-size:11px;">07/01/2025 09:43</div>
<svg style="left:302px;top:471px" width="17" height="17" viewBox="0 0 17 17"><defs><linearGradient id="gz" x1="0" x2="1"><stop offset="0" stop-color="#777"/><stop offset=".4" stop-color="#ddd"/><stop offset="1" stop-color="#999"/></linearGradient></defs><path d="M1 8.5L8.8 .8V15.8H2.8V10.3z" fill="#3a60f0"/><path d="M8.8 .8v15" stroke="#2a3aa0" stroke-width="1"/><path d="M9.3 1.5L15.8 8.2 14.8 9V15.8H9.3z" fill="url(#gz)"/></svg>
<div class="ab" style="left:301px;top:488px;width:128px;height:20px;border:1px solid #c5d7ef;border-right:none"></div>
<div class="ab" style="left:428px;top:488px;width:131px;height:20px;border:1px solid #c5d7ef;border-left:1px solid #c5d7ef"></div>
<div class="t " style="left:305px;top:492.86px;font-size:10.8px;">Appartamento 8</div>
<svg style="left:270px;top:495px" width="8" height="6" viewBox="0 0 8 6"><path d="M1 1.2l3 3 3-3" fill="none" stroke="#2e3a58" stroke-width="1.6"/></svg>
<svg style="left:284px;top:490px" width="17" height="16" viewBox="0 0 17 16"><path d="M2 7.5L6 3.5 11 8.5V15L3 13z" fill="#e4eef8"/><path d="M11 8.5L15 6.5V13L11 15z" fill="#bcd8f0"/><path d="M1 8L6 1.5 12 7.5 16 5 10.5 .5 5 1z" fill="#d83a10"/><path d="M3 9v4l3 1V9.5z" fill="#2a6ad8"/><rect x="7.5" y="9" width="2" height="2" fill="#2a6ad8"/><rect x="11.5" y="10" width="4.5" height="5.5" fill="#f6c820"/><rect x="12.5" y="10.5" width="2" height="2" fill="#f05010"/></svg>
<div class="ab" style="left:319px;top:507px;width:110px;height:20px;border:1px solid #c5d7ef;border-right:none"></div>
<div class="ab" style="left:428px;top:507px;width:131px;height:20px;border:1px solid #c5d7ef;border-left:1px solid #c5d7ef"></div>
<div class="t " style="left:323px;top:511.86px;font-size:10.8px;">Zona Termica 8</div>
<div class="t " style="left:194px;width:600px;text-align:center;top:511.69px;font-size:11px;">07/01/2025 09:43</div>
<svg style="left:302px;top:509px" width="17" height="17" viewBox="0 0 17 17"><defs><linearGradient id="gz" x1="0" x2="1"><stop offset="0" stop-color="#777"/><stop offset=".4" stop-color="#ddd"/><stop offset="1" stop-color="#999"/></linearGradient></defs><path d="M1 8.5L8.8 .8V15.8H2.8V10.3z" fill="#3a60f0"/><path d="M8.8 .8v15" stroke="#2a3aa0" stroke-width="1"/><path d="M9.3 1.5L15.8 8.2 14.8 9V15.8H9.3z" fill="url(#gz)"/></svg>
<div class="ab" style="left:572px;top:570px;width:2px;height:2px;background:#7a90b0"></div>
<div class="ab" style="left:572px;top:574px;width:2px;height:2px;background:#7a90b0"></div>
<div class="ab" style="left:572px;top:578px;width:2px;height:2px;background:#7a90b0"></div>
<div class="ab" style="left:572px;top:582px;width:2px;height:2px;background:#7a90b0"></div>
<div class="ab" style="left:578px;top:127px;width:1229px;height:900px;background:#d0ddef;border:1px solid #8ba5c6;border-radius:3px"></div>
<div class="ab" style="left:579px;top:128px;width:1227px;height:18px;background:linear-gradient(#d9e6f6,#c5d8ef);border-bottom:1px solid #b9cde6"></div>
<div class="t nv" style="left:590px;top:129.64px;font-size:12px;-webkit-text-stroke:0.35px #15284f">Dettaglio</div>
<div class="ab" style="left:581px;top:148px;width:1219px;height:872px;background:#fff;border:1px solid #8ba5c6"></div>
<div class="ab" style="left:582px;top:1020px;width:1224px;height:6px;background:linear-gradient(#bccadb,#d3e0ef)"></div>
<div class="ab" style="left:1800px;top:149px;width:6px;height:872px;background:linear-gradient(90deg,#bccadb,#d3e0ef)"></div>
<div class="ab" style="left:584px;top:174px;width:1213px;height:843px;border:1px solid #8ba5c6"></div>
<div class="ab" style="left:588px;top:154px;width:53px;height:20px;background:linear-gradient(#c3d5ec,#aac1df);border:1px solid #8ba5c6;border-bottom:none"></div>
<div class="t " style="left:314.5px;width:600px;text-align:center;top:159.77px;font-size:10.9px;color:#1b2658">Risultati</div>
<div class="ab" style="left:641px;top:152px;width:79px;height:23px;background:#fff;border:1px solid #8ba5c6;border-bottom:none"></div>
<div class="t " style="left:380.5px;width:600px;text-align:center;top:159.36px;font-size:10.8px;color:#1b2658">Dati potenze</div>
<div class="ab" style="left:648px;top:156px;width:64px;height:15px;border:1px dotted #222"></div>
<div class="ab" style="left:720px;top:154px;width:54px;height:20px;background:linear-gradient(#c3d5ec,#aac1df);border:1px solid #8ba5c6;border-bottom:none"></div>
<div class="t " style="left:447.0px;width:600px;text-align:center;top:159.77px;font-size:10.9px;color:#1b2658">Comfort</div>
<div class="ab" style="left:774px;top:154px;width:78px;height:20px;background:linear-gradient(#c3d5ec,#aac1df);border:1px solid #8ba5c6;border-bottom:none"></div>
<div class="t " style="left:513.0px;width:600px;text-align:center;top:159.77px;font-size:10.9px;color:#1b2658">Temperature</div>
<div class="ab" style="left:852px;top:154px;width:51px;height:20px;background:linear-gradient(#c3d5ec,#aac1df);border:1px solid #8ba5c6;border-bottom:none"></div>
<div class="t " style="left:577.5px;width:600px;text-align:center;top:160.37px;font-size:10.2px;color:#1b2658">Bilancio</div>
<div class="ab" style="left:587px;top:199px;width:1207px;height:815px;border:1px solid #8ba5c6"></div>
<div class="ab" style="left:590px;top:177px;width:88px;height:23px;background:#fff;border:1px solid #8ba5c6;border-bottom:none"></div>
<div class="t " style="left:598px;top:183.94px;font-size:10.7px;color:#1b2658">Potenze orarie</div>
<div class="ab" style="left:677px;top:179px;width:89px;height:20px;background:linear-gradient(#c3d5ec,#aac1df);border:1px solid #8ba5c6;border-bottom:none"></div>
<div class="t " style="left:684px;top:185.20px;font-size:10.4px;color:#1b2658">Potenze mensili</div>
<div class="ab" style="left:592px;top:204px;width:367px;height:26px;background:#cfdcee"></div>
<div class="ab" style="left:597px;top:209px;width:1px;height:2px;background:#7f8fa6"></div>
<div class="ab" style="left:597px;top:213px;width:1px;height:2px;background:#7f8fa6"></div>
<div class="ab" style="left:597px;top:217px;width:1px;height:2px;background:#7f8fa6"></div>
<div class="ab" style="left:597px;top:221px;width:1px;height:2px;background:#7f8fa6"></div>
<svg style="left:609px;top:208px" width="17" height="17" viewBox="0 0 17 17"><rect x=".5" y=".5" width="15.5" height="15.5" fill="#fff" stroke="#7f8fa6"/><rect x="2" y="2" width="12.5" height="3" fill="#5ab0e8"/><path d="M2 6.0h12.5" stroke="#5ab0e8" stroke-width=".7"/><path d="M2 8.5h12.5" stroke="#5ab0e8" stroke-width=".7"/><path d="M2 11.0h12.5" stroke="#5ab0e8" stroke-width=".7"/><path d="M2 13.5h12.5" stroke="#5ab0e8" stroke-width=".7"/><path d="M5.2 5v10" stroke="#5ab0e8" stroke-width=".7"/><path d="M8.4 5v10" stroke="#5ab0e8" stroke-width=".7"/><path d="M11.600000000000001 5v10" stroke="#5ab0e8" stroke-width=".7"/></svg>
<svg style="left:640px;top:208px" width="17" height="17" viewBox="0 0 17 17"><rect x=".5" y=".5" width="15.5" height="15.5" fill="#fff" stroke="#2a5fc0"/><rect x="1" y="1" width="15" height="3" fill="#2a5fc0"/><path d="M3 7h5M3 10h5M3 13h5" stroke="#8ab" stroke-width="1"/><path d="M8 8h4V6l4 3.5-4 3.5v-2H8z" fill="#2a70e0"/></svg>
<svg style="left:669px;top:208px" width="17" height="17" viewBox="0 0 17 17"><rect x="4" y="0.5" width="9" height="5" fill="#fff" stroke="#666"/><rect x=".5" y="5" width="16" height="7" rx="2" fill="#9a9ea6" stroke="#555"/><rect x="4" y="10" width="9" height="6.5" fill="#fff" stroke="#666"/><rect x="7" y="7" width="5" height="1.2" fill="#3a8fd8"/></svg>
<div class="t " style="left:690px;top:211.43px;font-size:11.3px;color:#222">Stampa</div>
<div class="ab" style="left:590px;top:232px;width:371px;height:779px;background:#fff;border:1px solid #8ba5c6"></div>
<div class="ab" style="left:591px;top:233px;width:369px;height:20px;background:linear-gradient(#f3f7fc,#dfe9f6);border-bottom:1px solid #9cb2cf"></div>
<div class="ab" style="left:660px;top:233px;width:1px;height:20px;background:#9cb2cf"></div>
<div class="ab" style="left:730px;top:233px;width:1px;height:20px;background:#9cb2cf"></div>
<div class="ab" style="left:800px;top:233px;width:1px;height:20px;background:#9cb2cf"></div>
<div class="ab" style="left:870px;top:233px;width:1px;height:20px;background:#9cb2cf"></div>
<div class="ab" style="left:943px;top:233px;width:1px;height:20px;background:#9cb2cf"></div>
<div class="t " style="left:325.5px;width:600px;text-align:center;top:235.85px;font-size:11.4px;color:#1b2658">Mese</div>
<div class="t " style="left:395.0px;width:600px;text-align:center;top:235.85px;font-size:11.4px;color:#1b2658">Giorno</div>
<div class="t " style="left:465.0px;width:600px;text-align:center;top:235.85px;font-size:11.4px;color:#1b2658">Ora</div>
<div class="t " style="left:535.0px;width:600px;text-align:center;top:235.85px;font-size:11.4px;color:#1b2658">Θ est [°C]</div>
<div class="t " style="left:606.5px;width:600px;text-align:center;top:235.85px;font-size:11.4px;color:#1b2658">Φ H/C [W]</div>
<div class="ab" style="left:591px;top:253px;width:352px;height:19px;background:#fff"></div>
<div class="ab" style="left:660px;top:253px;width:283px;height:19px;background:#dfe8f5"></div>
<div class="ab" style="left:591px;top:271px;width:352px;height:1px;background:#c5d7ef"></div>
<div class="t " style="left:356.4px;width:300px;text-align:right;top:256.90px;font-size:11.1px;">1</div>
<div class="t " style="left:426.4px;width:300px;text-align:right;top:256.90px;font-size:11.1px;">1</div>
<div class="t " style="left:496.4px;width:300px;text-align:right;top:256.90px;font-size:11.1px;">0</div>
<div class="t " style="left:566.4px;width:300px;text-align:right;top:256.90px;font-size:11.1px;">3,38</div>
<div class="t " style="left:639.4px;width:300px;text-align:right;top:256.90px;font-size:11.1px;">5.092</div>
<div class="ab" style="left:591px;top:272px;width:352px;height:19px;background:#f0f4fa"></div>
<div class="ab" style="left:591px;top:290px;width:352px;height:1px;background:#c5d7ef"></div>
<div class="t " style="left:356.4px;width:300px;text-align:right;top:275.90px;font-size:11.1px;">1</div>
<div class="t " style="left:426.4px;width:300px;text-align:right;top:275.90px;font-size:11.1px;">1</div>
<div class="t " style="left:496.4px;width:300px;text-align:right;top:275.90px;font-size:11.1px;">1</div>
<div class="t " style="left:566.4px;width:300px;text-align:right;top:275.90px;font-size:11.1px;">2,98</div>
<div class="t " style="left:639.4px;width:300px;text-align:right;top:275.90px;font-size:11.1px;">5.129</div>
<div class="ab" style="left:591px;top:291px;width:352px;height:19px;background:#fff"></div>
<div class="ab" style="left:591px;top:309px;width:352px;height:1px;background:#c5d7ef"></div>
<div class="t " style="left:356.4px;width:300px;text-align:right;top:294.90px;font-size:11.1px;">1</div>
<div class="t " style="left:426.4px;width:300px;text-align:right;top:294.90px;font-size:11.1px;">1</div>
<div class="t " style="left:496.4px;width:300px;text-align:right;top:294.90px;font-size:11.1px;">2</div>
<div class="t " style="left:566.4px;width:300px;text-align:right;top:294.90px;font-size:11.1px;">2,58</div>
<div class="t " style="left:639.4px;width:300px;text-align:right;top:294.90px;font-size:11.1px;">5.204</div>
<div class="ab" style="left:591px;top:310px;width:352px;height:19px;background:#f0f4fa"></div>
<div class="ab" style="left:591px;top:328px;width:352px;height:1px;background:#c5d7ef"></div>
<div class="t " style="left:356.4px;width:300px;text-align:right;top:313.90px;font-size:11.1px;">1</div>
<div class="t " style="left:426.4px;width:300px;text-align:right;top:313.90px;font-size:11.1px;">1</div>
<div class="t " style="left:496.4px;width:300px;text-align:right;top:313.90px;font-size:11.1px;">3</div>
<div class="t " style="left:566.4px;width:300px;text-align:right;top:313.90px;font-size:11.1px;">1,98</div>
<div class="t " style="left:639.4px;width:300px;text-align:right;top:313.90px;font-size:11.1px;">5.323</div>
<div class="ab" style="left:591px;top:329px;width:352px;height:19px;background:#fff"></div>
<div class="ab" style="left:591px;top:347px;width:352px;height:1px;background:#c5d7ef"></div>
<div class="t " style="left:356.4px;width:300px;text-align:right;top:332.90px;font-size:11.1px;">1</div>
<div class="t " style="left:426.4px;width:300px;text-align:right;top:332.90px;font-size:11.1px;">1</div>
<div class="t " style="left:496.4px;width:300px;text-align:right;top:332.90px;font-size:11.1px;">4</div>
<div class="t " style="left:566.4px;width:300px;text-align:right;top:332.90px;font-size:11.1px;">1,98</div>
<div class="t " style="left:639.4px;width:300px;text-align:right;top:332.90px;font-size:11.1px;">5.356</div>
<div class="ab" style="left:591px;top:348px;width:352px;height:19px;background:#f0f4fa"></div>
<div class="ab" style="left:591px;top:366px;width:352px;height:1px;background:#c5d7ef"></div>
<div class="t " style="left:356.4px;width:300px;text-align:right;top:351.90px;font-size:11.1px;">1</div>
<div class="t " style="left:426.4px;width:300px;text-align:right;top:351.90px;font-size:11.1px;">1</div>
<div class="t " style="left:496.4px;width:300px;text-align:right;top:351.90px;font-size:11.1px;">5</div>
<div class="t " style="left:566.4px;width:300px;text-align:right;top:351.90px;font-size:11.1px;">1,58</div>
<div class="t " style="left:639.4px;width:300px;text-align:right;top:351.90px;font-size:11.1px;">5.465</div>
<div class="ab" style="left:591px;top:367px;width:352px;height:19px;background:#fff"></div>
<div class="ab" style="left:591px;top:385px;width:352px;height:1px;background:#c5d7ef"></div>
<div class="t " style="left:356.4px;width:300px;text-align:right;top:370.90px;font-size:11.1px;">1</div>
<div class="t " style="left:426.4px;width:300px;text-align:right;top:370.90px;font-size:11.1px;">1</div>
<div class="t " style="left:496.4px;width:300px;text-align:right;top:370.90px;font-size:11.1px;">6</div>
<div class="t " style="left:566.4px;width:300px;text-align:right;top:370.90px;font-size:11.1px;">1,38</div>
<div class="t " style="left:639.4px;width:300px;text-align:right;top:370.90px;font-size:11.1px;">5.546</div>
<div class="ab" style="left:591px;top:386px;width:352px;height:19px;background:#f0f4fa"></div>
<div class="ab" style="left:591px;top:404px;width:352px;height:1px;background:#c5d7ef"></div>
<div class="t " style="left:356.4px;width:300px;text-align:right;top:389.90px;font-size:11.1px;">1</div>
<div class="t " style="left:426.4px;width:300px;text-align:right;top:389.90px;font-size:11.1px;">1</div>
<div class="t " style="left:496.4px;width:300px;text-align:right;top:389.90px;font-size:11.1px;">7</div>
<div class="t " style="left:566.4px;width:300px;text-align:right;top:389.90px;font-size:11.1px;">1,08</div>
<div class="t " style="left:639.4px;width:300px;text-align:right;top:389.90px;font-size:11.1px;">5.688</div>
<div class="ab" style="left:591px;top:405px;width:352px;height:19px;background:#fff"></div>
<div class="ab" style="left:591px;top:423px;width:352px;height:1px;background:#c5d7ef"></div>
<div class="t " style="left:356.4px;width:300px;text-align:right;top:408.90px;font-size:11.1px;">1</div>
<div class="t " style="left:426.4px;width:300px;text-align:right;top:408.90px;font-size:11.1px;">1</div>
<div class="t " style="left:496.4px;width:300px;text-align:right;top:408.90px;font-size:11.1px;">8</div>
<div class="t " style="left:566.4px;width:300px;text-align:right;top:408.90px;font-size:11.1px;">1,58</div>
<div class="t " style="left:639.4px;width:300px;text-align:right;top:408.90px;font-size:11.1px;">4.560</div>
<div class="ab" style="left:591px;top:424px;width:352px;height:19px;background:#f0f4fa"></div>
<div class="ab" style="left:591px;top:442px;width:352px;height:1px;background:#c5d7ef"></div>
<div class="t " style="left:356.4px;width:300px;text-align:right;top:427.90px;font-size:11.1px;">1</div>
<div class="t " style="left:426.4px;width:300px;text-align:right;top:427.90px;font-size:11.1px;">1</div>
<div class="t " style="left:496.4px;width:300px;text-align:right;top:427.90px;font-size:11.1px;">9</div>
<div class="t " style="left:566.4px;width:300px;text-align:right;top:427.90px;font-size:11.1px;">3,68</div>
<div class="t " style="left:639.4px;width:300px;text-align:right;top:427.90px;font-size:11.1px;">3.597</div>
<div class="ab" style="left:591px;top:443px;width:352px;height:19px;background:#fff"></div>
<div class="ab" style="left:591px;top:461px;width:352px;height:1px;background:#c5d7ef"></div>
<div class="t " style="left:356.4px;width:300px;text-align:right;top:446.90px;font-size:11.1px;">1</div>
<div class="t " style="left:426.4px;width:300px;text-align:right;top:446.90px;font-size:11.1px;">1</div>
<div class="t " style="left:496.4px;width:300px;text-align:right;top:446.90px;font-size:11.1px;">10</div>
<div class="t " style="left:566.4px;width:300px;text-align:right;top:446.90px;font-size:11.1px;">5,58</div>
<div class="t " style="left:639.4px;width:300px;text-align:right;top:446.90px;font-size:11.1px;">2.542</div>
<div class="ab" style="left:591px;top:462px;width:352px;height:19px;background:#f0f4fa"></div>
<div class="ab" style="left:591px;top:480px;width:352px;height:1px;background:#c5d7ef"></div>
<div class="t " style="left:356.4px;width:300px;text-align:right;top:465.90px;font-size:11.1px;">1</div>
<div class="t " style="left:426.4px;width:300px;text-align:right;top:465.90px;font-size:11.1px;">1</div>
<div class="t " style="left:496.4px;width:300px;text-align:right;top:465.90px;font-size:11.1px;">11</div>
<div class="t " style="left:566.4px;width:300px;text-align:right;top:465.90px;font-size:11.1px;">7,98</div>
<div class="t " style="left:639.4px;width:300px;text-align:right;top:465.90px;font-size:11.1px;">2.660</div>
<div class="ab" style="left:591px;top:481px;width:352px;height:19px;background:#fff"></div>
<div class="ab" style="left:591px;top:499px;width:352px;height:1px;background:#c5d7ef"></div>
<div class="t " style="left:356.4px;width:300px;text-align:right;top:484.90px;font-size:11.1px;">1</div>
<div class="t " style="left:426.4px;width:300px;text-align:right;top:484.90px;font-size:11.1px;">1</div>
<div class="t " style="left:496.4px;width:300px;text-align:right;top:484.90px;font-size:11.1px;">12</div>
<div class="t " style="left:566.4px;width:300px;text-align:right;top:484.90px;font-size:11.1px;">10,38</div>
<div class="t " style="left:639.4px;width:300px;text-align:right;top:484.90px;font-size:11.1px;">2.439</div>
<div class="ab" style="left:591px;top:500px;width:352px;height:19px;background:#f0f4fa"></div>
<div class="ab" style="left:591px;top:518px;width:352px;height:1px;background:#c5d7ef"></div>
<div class="t " style="left:356.4px;width:300px;text-align:right;top:503.90px;font-size:11.1px;">1</div>
<div class="t " style="left:426.4px;width:300px;text-align:right;top:503.90px;font-size:11.1px;">1</div>
<div class="t " style="left:496.4px;width:300px;text-align:right;top:503.90px;font-size:11.1px;">13</div>
<div class="t " style="left:566.4px;width:300px;text-align:right;top:503.90px;font-size:11.1px;">11,18</div>
<div class="t " style="left:639.4px;width:300px;text-align:right;top:503.90px;font-size:11.1px;">3.246</div>
<div class="ab" style="left:591px;top:519px;width:352px;height:19px;background:#fff"></div>
<div class="ab" style="left:591px;top:537px;width:352px;height:1px;background:#c5d7ef"></div>
<div class="t " style="left:356.4px;width:300px;text-align:right;top:522.90px;font-size:11.1px;">1</div>
<div class="t " style="left:426.4px;width:300px;text-align:right;top:522.90px;font-size:11.1px;">1</div>
<div class="t " style="left:496.4px;width:300px;text-align:right;top:522.90px;font-size:11.1px;">14</div>
<div class="t " style="left:566.4px;width:300px;text-align:right;top:522.90px;font-size:11.1px;">11,38</div>
<div class="t " style="left:639.4px;width:300px;text-align:right;top:522.90px;font-size:11.1px;">3.549</div>
<div class="ab" style="left:591px;top:538px;width:352px;height:19px;background:#f0f4fa"></div>
<div class="ab" style="left:591px;top:556px;width:352px;height:1px;background:#c5d7ef"></div>
<div class="t " style="left:356.4px;width:300px;text-align:right;top:541.90px;font-size:11.1px;">1</div>
<div class="t " style="left:426.4px;width:300px;text-align:right;top:541.90px;font-size:11.1px;">1</div>
<div class="t " style="left:496.4px;width:300px;text-align:right;top:541.90px;font-size:11.1px;">15</div>
<div class="t " style="left:566.4px;width:300px;text-align:right;top:541.90px;font-size:11.1px;">11,78</div>
<div class="t " style="left:639.4px;width:300px;text-align:right;top:541.90px;font-size:11.1px;">3.910</div>
<div class="ab" style="left:591px;top:557px;width:352px;height:19px;background:#fff"></div>
<div class="ab" style="left:591px;top:575px;width:352px;height:1px;background:#c5d7ef"></div>
<div class="t " style="left:356.4px;width:300px;text-align:right;top:560.90px;font-size:11.1px;">1</div>
<div class="t " style="left:426.4px;width:300px;text-align:right;top:560.90px;font-size:11.1px;">1</div>
<div class="t " style="left:496.4px;width:300px;text-align:right;top:560.90px;font-size:11.1px;">16</div>
<div class="t " style="left:566.4px;width:300px;text-align:right;top:560.90px;font-size:11.1px;">10,98</div>
<div class="t " style="left:639.4px;width:300px;text-align:right;top:560.90px;font-size:11.1px;">4.362</div>
<div class="ab" style="left:591px;top:576px;width:352px;height:19px;background:#f0f4fa"></div>
<div class="ab" style="left:591px;top:594px;width:352px;height:1px;background:#c5d7ef"></div>
<div class="t " style="left:356.4px;width:300px;text-align:right;top:579.90px;font-size:11.1px;">1</div>
<div class="t " style="left:426.4px;width:300px;text-align:right;top:579.90px;font-size:11.1px;">1</div>
<div class="t " style="left:496.4px;width:300px;text-align:right;top:579.90px;font-size:11.1px;">17</div>
<div class="t " style="left:566.4px;width:300px;text-align:right;top:579.90px;font-size:11.1px;">10,58</div>
<div class="t " style="left:639.4px;width:300px;text-align:right;top:579.90px;font-size:11.1px;">4.385</div>
<div class="ab" style="left:591px;top:595px;width:352px;height:19px;background:#fff"></div>
<div class="ab" style="left:591px;top:613px;width:352px;height:1px;background:#c5d7ef"></div>
<div class="t " style="left:356.4px;width:300px;text-align:right;top:598.90px;font-size:11.1px;">1</div>
<div class="t " style="left:426.4px;width:300px;text-align:right;top:598.90px;font-size:11.1px;">1</div>
<div class="t " style="left:496.4px;width:300px;text-align:right;top:598.90px;font-size:11.1px;">18</div>
<div class="t " style="left:566.4px;width:300px;text-align:right;top:598.90px;font-size:11.1px;">10,08</div>
<div class="t " style="left:639.4px;width:300px;text-align:right;top:598.90px;font-size:11.1px;">4.443</div>
<div class="ab" style="left:591px;top:614px;width:352px;height:19px;background:#f0f4fa"></div>
<div class="ab" style="left:591px;top:632px;width:352px;height:1px;background:#c5d7ef"></div>
<div class="t " style="left:356.4px;width:300px;text-align:right;top:617.90px;font-size:11.1px;">1</div>
<div class="t " style="left:426.4px;width:300px;text-align:right;top:617.90px;font-size:11.1px;">1</div>
<div class="t " style="left:496.4px;width:300px;text-align:right;top:617.90px;font-size:11.1px;">19</div>
<div class="t " style="left:566.4px;width:300px;text-align:right;top:617.90px;font-size:11.1px;">9,28</div>
<div class="t " style="left:639.4px;width:300px;text-align:right;top:617.90px;font-size:11.1px;">4.548</div>
<div class="ab" style="left:591px;top:633px;width:352px;height:19px;background:#fff"></div>
<div class="ab" style="left:591px;top:651px;width:352px;height:1px;background:#c5d7ef"></div>
<div class="t " style="left:356.4px;width:300px;text-align:right;top:636.90px;font-size:11.1px;">1</div>
<div class="t " style="left:426.4px;width:300px;text-align:right;top:636.90px;font-size:11.1px;">1</div>
<div class="t " style="left:496.4px;width:300px;text-align:right;top:636.90px;font-size:11.1px;">20</div>
<div class="t " style="left:566.4px;width:300px;text-align:right;top:636.90px;font-size:11.1px;">9,18</div>
<div class="t " style="left:639.4px;width:300px;text-align:right;top:636.90px;font-size:11.1px;">4.548</div>
<div class="ab" style="left:591px;top:652px;width:352px;height:19px;background:#f0f4fa"></div>
<div class="ab" style="left:591px;top:670px;width:352px;height:1px;background:#c5d7ef"></div>
<div class="t " style="left:356.4px;width:300px;text-align:right;top:655.90px;font-size:11.1px;">1</div>
<div class="t " style="left:426.4px;width:300px;text-align:right;top:655.90px;font-size:11.1px;">1</div>
<div class="t " style="left:496.4px;width:300px;text-align:right;top:655.90px;font-size:11.1px;">21</div>
<div class="t " style="left:566.4px;width:300px;text-align:right;top:655.90px;font-size:11.1px;">8,58</div>
<div class="t " style="left:639.4px;width:300px;text-align:right;top:655.90px;font-size:11.1px;">4.634</div>
<div class="ab" style="left:591px;top:671px;width:352px;height:19px;background:#fff"></div>
<div class="ab" style="left:591px;top:689px;width:352px;height:1px;background:#c5d7ef"></div>
<div class="t " style="left:356.4px;width:300px;text-align:right;top:674.90px;font-size:11.1px;">1</div>
<div class="t " style="left:426.4px;width:300px;text-align:right;top:674.90px;font-size:11.1px;">1</div>
<div class="t " style="left:496.4px;width:300px;text-align:right;top:674.90px;font-size:11.1px;">22</div>
<div class="t " style="left:566.4px;width:300px;text-align:right;top:674.90px;font-size:11.1px;">8,18</div>
<div class="t " style="left:639.4px;width:300px;text-align:right;top:674.90px;font-size:11.1px;">4.641</div>
<div class="ab" style="left:591px;top:690px;width:352px;height:19px;background:#f0f4fa"></div>
<div class="ab" style="left:591px;top:708px;width:352px;height:1px;background:#c5d7ef"></div>
<div class="t " style="left:356.4px;width:300px;text-align:right;top:693.90px;font-size:11.1px;">1</div>
<div class="t " style="left:426.4px;width:300px;text-align:right;top:693.90px;font-size:11.1px;">1</div>
<div class="t " style="left:496.4px;width:300px;text-align:right;top:693.90px;font-size:11.1px;">23</div>
<div class="t " style="left:566.4px;width:300px;text-align:right;top:693.90px;font-size:11.1px;">8,48</div>
<div class="t " style="left:639.4px;width:300px;text-align:right;top:693.90px;font-size:11.1px;">4.577</div>
<div class="ab" style="left:591px;top:709px;width:352px;height:19px;background:#fff"></div>
<div class="ab" style="left:591px;top:727px;width:352px;height:1px;background:#c5d7ef"></div>
<div class="t " style="left:356.4px;width:300px;text-align:right;top:712.90px;font-size:11.1px;">1</div>
<div class="t " style="left:426.4px;width:300px;text-align:right;top:712.90px;font-size:11.1px;">2</div>
<div class="t " style="left:496.4px;width:300px;text-align:right;top:712.90px;font-size:11.1px;">0</div>
<div class="t " style="left:566.4px;width:300px;text-align:right;top:712.90px;font-size:11.1px;">8,38</div>
<div class="t " style="left:639.4px;width:300px;text-align:right;top:712.90px;font-size:11.1px;">4.588</div>
<div class="ab" style="left:591px;top:728px;width:352px;height:19px;background:#f0f4fa"></div>
<div class="ab" style="left:591px;top:746px;width:352px;height:1px;background:#c5d7ef"></div>
<div class="t " style="left:356.4px;width:300px;text-align:right;top:731.90px;font-size:11.1px;">1</div>
<div class="t " style="left:426.4px;width:300px;text-align:right;top:731.90px;font-size:11.1px;">2</div>
<div class="t " style="left:496.4px;width:300px;text-align:right;top:731.90px;font-size:11.1px;">1</div>
<div class="t " style="left:566.4px;width:300px;text-align:right;top:731.90px;font-size:11.1px;">8,18</div>
<div class="t " style="left:639.4px;width:300px;text-align:right;top:731.90px;font-size:11.1px;">4.613</div>
<div class="ab" style="left:591px;top:747px;width:352px;height:19px;background:#fff"></div>
<div class="ab" style="left:591px;top:765px;width:352px;height:1px;background:#c5d7ef"></div>
<div class="t " style="left:356.4px;width:300px;text-align:right;top:750.90px;font-size:11.1px;">1</div>
<div class="t " style="left:426.4px;width:300px;text-align:right;top:750.90px;font-size:11.1px;">2</div>
<div class="t " style="left:496.4px;width:300px;text-align:right;top:750.90px;font-size:11.1px;">2</div>
<div class="t " style="left:566.4px;width:300px;text-align:right;top:750.90px;font-size:11.1px;">8,18</div>
<div class="t " style="left:639.4px;width:300px;text-align:right;top:750.90px;font-size:11.1px;">4.607</div>
<div class="ab" style="left:591px;top:766px;width:352px;height:19px;background:#f0f4fa"></div>
<div class="ab" style="left:591px;top:784px;width:352px;height:1px;background:#c5d7ef"></div>
<div class="t " style="left:356.4px;width:300px;text-align:right;top:769.90px;font-size:11.1px;">1</div>
<div class="t " style="left:426.4px;width:300px;text-align:right;top:769.90px;font-size:11.1px;">2</div>
<div class="t " style="left:496.4px;width:300px;text-align:right;top:769.90px;font-size:11.1px;">3</div>
<div class="t " style="left:566.4px;width:300px;text-align:right;top:769.90px;font-size:11.1px;">8,48</div>
<div class="t " style="left:639.4px;width:300px;text-align:right;top:769.90px;font-size:11.1px;">4.554</div>
<div class="ab" style="left:591px;top:785px;width:352px;height:19px;background:#fff"></div>
<div class="ab" style="left:591px;top:803px;width:352px;height:1px;background:#c5d7ef"></div>
<div class="t " style="left:356.4px;width:300px;text-align:right;top:788.90px;font-size:11.1px;">1</div>
<div class="t " style="left:426.4px;width:300px;text-align:right;top:788.90px;font-size:11.1px;">2</div>
<div class="t " style="left:496.4px;width:300px;text-align:right;top:788.90px;font-size:11.1px;">4</div>
<div class="t " style="left:566.4px;width:300px;text-align:right;top:788.90px;font-size:11.1px;">8,58</div>
<div class="t " style="left:639.4px;width:300px;text-align:right;top:788.90px;font-size:11.1px;">4.539</div>
<div class="ab" style="left:591px;top:804px;width:352px;height:19px;background:#f0f4fa"></div>
<div class="ab" style="left:591px;top:822px;width:352px;height:1px;background:#c5d7ef"></div>
<div class="t " style="left:356.4px;width:300px;text-align:right;top:807.90px;font-size:11.1px;">1</div>
<div class="t " style="left:426.4px;width:300px;text-align:right;top:807.90px;font-size:11.1px;">2</div>
<div class="t " style="left:496.4px;width:300px;text-align:right;top:807.90px;font-size:11.1px;">5</div>
<div class="t " style="left:566.4px;width:300px;text-align:right;top:807.90px;font-size:11.1px;">8,38</div>
<div class="t " style="left:639.4px;width:300px;text-align:right;top:807.90px;font-size:11.1px;">4.573</div>
<div class="ab" style="left:591px;top:823px;width:352px;height:19px;background:#fff"></div>
<div class="ab" style="left:591px;top:841px;width:352px;height:1px;background:#c5d7ef"></div>
<div class="t " style="left:356.4px;width:300px;text-align:right;top:826.90px;font-size:11.1px;">1</div>
<div class="t " style="left:426.4px;width:300px;text-align:right;top:826.90px;font-size:11.1px;">2</div>
<div class="t " style="left:496.4px;width:300px;text-align:right;top:826.90px;font-size:11.1px;">6</div>
<div class="t " style="left:566.4px;width:300px;text-align:right;top:826.90px;font-size:11.1px;">8,68</div>
<div class="t " style="left:639.4px;width:300px;text-align:right;top:826.90px;font-size:11.1px;">4.522</div>
<div class="ab" style="left:591px;top:842px;width:352px;height:19px;background:#f0f4fa"></div>
<div class="ab" style="left:591px;top:860px;width:352px;height:1px;background:#c5d7ef"></div>
<div class="t " style="left:356.4px;width:300px;text-align:right;top:845.90px;font-size:11.1px;">1</div>
<div class="t " style="left:426.4px;width:300px;text-align:right;top:845.90px;font-size:11.1px;">2</div>
<div class="t " style="left:496.4px;width:300px;text-align:right;top:845.90px;font-size:11.1px;">7</div>
<div class="t " style="left:566.4px;width:300px;text-align:right;top:845.90px;font-size:11.1px;">9,08</div>
<div class="t " style="left:639.4px;width:300px;text-align:right;top:845.90px;font-size:11.1px;">4.502</div>
<div class="ab" style="left:591px;top:861px;width:352px;height:19px;background:#fff"></div>
<div class="ab" style="left:591px;top:879px;width:352px;height:1px;background:#c5d7ef"></div>
<div class="t " style="left:356.4px;width:300px;text-align:right;top:864.90px;font-size:11.1px;">1</div>
<div class="t " style="left:426.4px;width:300px;text-align:right;top:864.90px;font-size:11.1px;">2</div>
<div class="t " style="left:496.4px;width:300px;text-align:right;top:864.90px;font-size:11.1px;">8</div>
<div class="t " style="left:566.4px;width:300px;text-align:right;top:864.90px;font-size:11.1px;">9,38</div>
<div class="t " style="left:639.4px;width:300px;text-align:right;top:864.90px;font-size:11.1px;">3.955</div>
<div class="ab" style="left:591px;top:880px;width:352px;height:19px;background:#f0f4fa"></div>
<div class="ab" style="left:591px;top:898px;width:352px;height:1px;background:#c5d7ef"></div>
<div class="t " style="left:356.4px;width:300px;text-align:right;top:883.90px;font-size:11.1px;">1</div>
<div class="t " style="left:426.4px;width:300px;text-align:right;top:883.90px;font-size:11.1px;">2</div>
<div class="t " style="left:496.4px;width:300px;text-align:right;top:883.90px;font-size:11.1px;">9</div>
<div class="t " style="left:566.4px;width:300px;text-align:right;top:883.90px;font-size:11.1px;">10,08</div>
<div class="t " style="left:639.4px;width:300px;text-align:right;top:883.90px;font-size:11.1px;">3.324</div>
<div class="ab" style="left:591px;top:899px;width:352px;height:19px;background:#fff"></div>
<div class="ab" style="left:591px;top:917px;width:352px;height:1px;background:#c5d7ef"></div>
<div class="t " style="left:356.4px;width:300px;text-align:right;top:902.90px;font-size:11.1px;">1</div>
<div class="t " style="left:426.4px;width:300px;text-align:right;top:902.90px;font-size:11.1px;">2</div>
<div class="t " style="left:496.4px;width:300px;text-align:right;top:902.90px;font-size:11.1px;">10</div>
<div class="t " style="left:566.4px;width:300px;text-align:right;top:902.90px;font-size:11.1px;">10,98</div>
<div class="t " style="left:639.4px;width:300px;text-align:right;top:902.90px;font-size:11.1px;">2.886</div>
<div class="ab" style="left:591px;top:918px;width:352px;height:19px;background:#f0f4fa"></div>
<div class="ab" style="left:591px;top:936px;width:352px;height:1px;background:#c5d7ef"></div>
<div class="t " style="left:356.4px;width:300px;text-align:right;top:921.90px;font-size:11.1px;">1</div>
<div class="t " style="left:426.4px;width:300px;text-align:right;top:921.90px;font-size:11.1px;">2</div>
<div class="t " style="left:496.4px;width:300px;text-align:right;top:921.90px;font-size:11.1px;">11</div>
<div class="t " style="left:566.4px;width:300px;text-align:right;top:921.90px;font-size:11.1px;">11,88</div>
<div class="t " style="left:639.4px;width:300px;text-align:right;top:921.90px;font-size:11.1px;">3.162</div>
<div class="ab" style="left:591px;top:937px;width:352px;height:19px;background:#fff"></div>
<div class="ab" style="left:591px;top:955px;width:352px;height:1px;background:#c5d7ef"></div>
<div class="t " style="left:356.4px;width:300px;text-align:right;top:940.90px;font-size:11.1px;">1</div>
<div class="t " style="left:426.4px;width:300px;text-align:right;top:940.90px;font-size:11.1px;">2</div>
<div class="t " style="left:496.4px;width:300px;text-align:right;top:940.90px;font-size:11.1px;">12</div>
<div class="t " style="left:566.4px;width:300px;text-align:right;top:940.90px;font-size:11.1px;">12,08</div>
<div class="t " style="left:639.4px;width:300px;text-align:right;top:940.90px;font-size:11.1px;">3.010</div>
<div class="ab" style="left:591px;top:956px;width:352px;height:19px;background:#f0f4fa"></div>
<div class="ab" style="left:591px;top:974px;width:352px;height:1px;background:#c5d7ef"></div>
<div class="t " style="left:356.4px;width:300px;text-align:right;top:959.90px;font-size:11.1px;">1</div>
<div class="t " style="left:426.4px;width:300px;text-align:right;top:959.90px;font-size:11.1px;">2</div>
<div class="t " style="left:496.4px;width:300px;text-align:right;top:959.90px;font-size:11.1px;">13</div>
<div class="t " style="left:566.4px;width:300px;text-align:right;top:959.90px;font-size:11.1px;">11,58</div>
<div class="t " style="left:639.4px;width:300px;text-align:right;top:959.90px;font-size:11.1px;">3.220</div>
<div class="ab" style="left:591px;top:975px;width:352px;height:19px;background:#fff"></div>
<div class="ab" style="left:591px;top:993px;width:352px;height:1px;background:#c5d7ef"></div>
<div class="t " style="left:356.4px;width:300px;text-align:right;top:978.90px;font-size:11.1px;">1</div>
<div class="t " style="left:426.4px;width:300px;text-align:right;top:978.90px;font-size:11.1px;">2</div>
<div class="t " style="left:496.4px;width:300px;text-align:right;top:978.90px;font-size:11.1px;">14</div>
<div class="t " style="left:566.4px;width:300px;text-align:right;top:978.90px;font-size:11.1px;">11,88</div>
<div class="t " style="left:639.4px;width:300px;text-align:right;top:978.90px;font-size:11.1px;">3.179</div>
<div class="ab" style="left:591px;top:994px;width:352px;height:16px;background:#f0f4fa"></div>
<div class="ab" style="left:591px;top:1012px;width:352px;height:1px;background:#c5d7ef"></div>
<div class="t " style="left:356.4px;width:300px;text-align:right;top:997.90px;font-size:11.1px;">1</div>
<div class="t " style="left:426.4px;width:300px;text-align:right;top:997.90px;font-size:11.1px;">2</div>
<div class="t " style="left:496.4px;width:300px;text-align:right;top:997.90px;font-size:11.1px;">15</div>
<div class="t " style="left:566.4px;width:300px;text-align:right;top:997.90px;font-size:11.1px;">11,78</div>
<div class="t " style="left:639.4px;width:300px;text-align:right;top:997.90px;font-size:11.1px;">3.254</div>
<div class="ab" style="left:660px;top:253px;width:1px;height:757px;background:#c5d7ef"></div>
<div class="ab" style="left:730px;top:253px;width:1px;height:757px;background:#c5d7ef"></div>
<div class="ab" style="left:800px;top:253px;width:1px;height:757px;background:#c5d7ef"></div>
<div class="ab" style="left:870px;top:253px;width:1px;height:757px;background:#c5d7ef"></div>
<div class="ab" style="left:943px;top:253px;width:17px;height:757px;background:linear-gradient(90deg,#c5d5e9,#dde7f3)"></div>
<svg style="left:946px;top:257px" width="11" height="7" viewBox="0 0 11 7"><path d="M0.5 6L5.5 1l5 5z" fill="#4a5a78"/></svg>
<div class="ab" style="left:945px;top:270px;width:14px;height:18px;background:linear-gradient(90deg,#e8f0fa,#d0def0);border:1px solid #9fb5d2;border-radius:2px"></div>
<div class="ab" style="left:949px;top:275px;width:6px;height:1px;background:#6a7a94"></div>
<div class="ab" style="left:949px;top:277px;width:6px;height:1px;background:#6a7a94"></div>
<div class="ab" style="left:949px;top:279px;width:6px;height:1px;background:#6a7a94"></div>
<div class="ab" style="left:949px;top:281px;width:6px;height:1px;background:#6a7a94"></div>
<svg style="left:946px;top:998px" width="11" height="7" viewBox="0 0 11 7"><path d="M0.5 1L5.5 6l5-5z" fill="#4a5a78"/></svg>
<div class="ab" style="left:963px;top:599px;width:2px;height:2px;background:#7a90b0"></div>
<div class="ab" style="left:963px;top:603px;width:2px;height:2px;background:#7a90b0"></div>
<div class="ab" style="left:963px;top:607px;width:2px;height:2px;background:#7a90b0"></div>
<div class="ab" style="left:963px;top:611px;width:2px;height:2px;background:#7a90b0"></div>
<svg style="left:0;top:0" width="1819" height="1040" viewBox="0 0 1819 1040"><path d="M1037 836.5H1779" stroke="#e0e0e0" stroke-width="1"/><path d="M1037 771.5H1779" stroke="#e0e0e0" stroke-width="1"/><path d="M1037 705.5H1779" stroke="#e0e0e0" stroke-width="1"/><path d="M1037 639.5H1779" stroke="#e0e0e0" stroke-width="1"/><path d="M1037 573.5H1779" stroke="#e0e0e0" stroke-width="1"/><path d="M1037 507.5H1779" stroke="#e0e0e0" stroke-width="1"/><path d="M1037 441.5H1779" stroke="#e0e0e0" stroke-width="1"/><path d="M1037 375.5H1779" stroke="#e0e0e0" stroke-width="1"/><path d="M1037 309.5H1779" stroke="#e0e0e0" stroke-width="1"/><path d="M1037 243.5H1779" stroke="#e0e0e0" stroke-width="1"/><path d="M1037 902.5H1779" stroke="#333" stroke-width="1.2"/><path d="M1046.5 902.5V912" stroke="#333" stroke-width="1"/><path d="M1143.5 902.5V912" stroke="#333" stroke-width="1"/><path d="M1240.5 902.5V912" stroke="#333" stroke-width="1"/><path d="M1337.5 902.5V912" stroke="#333" stroke-width="1"/><path d="M1434.5 902.5V912" stroke="#333" stroke-width="1"/><path d="M1531.5 902.5V912" stroke="#333" stroke-width="1"/><path d="M1628.5 902.5V912" stroke="#333" stroke-width="1"/><path d="M1725.5 902.5V912" stroke="#333" stroke-width="1"/></svg>
<div class="t " style="left:722.3px;width:300px;text-align:right;top:896.30px;font-size:12.5px;color:#333">-2k</div>
<div class="t " style="left:722.3px;width:300px;text-align:right;top:830.41px;font-size:12.5px;color:#333">-1k</div>
<div class="t " style="left:722.3px;width:300px;text-align:right;top:764.52px;font-size:12.5px;color:#333">0</div>
<div class="t " style="left:722.3px;width:300px;text-align:right;top:698.63px;font-size:12.5px;color:#333">1k</div>
<div class="t " style="left:722.3px;width:300px;text-align:right;top:632.74px;font-size:12.5px;color:#333">2k</div>
<div class="t " style="left:722.3px;width:300px;text-align:right;top:566.85px;font-size:12.5px;color:#333">3k</div>
<div class="t " style="left:722.3px;width:300px;text-align:right;top:500.96px;font-size:12.5px;color:#333">4k</div>
<div class="t " style="left:722.3px;width:300px;text-align:right;top:435.07px;font-size:12.5px;color:#333">5k</div>
<div class="t " style="left:722.3px;width:300px;text-align:right;top:369.18px;font-size:12.5px;color:#333">6k</div>
<div class="t " style="left:722.3px;width:300px;text-align:right;top:303.29px;font-size:12.5px;color:#333">7k</div>
<div class="t " style="left:722.3px;width:300px;text-align:right;top:237.40px;font-size:12.5px;color:#333">8k</div>
<div class="t " style="left:746.3px;width:600px;text-align:center;top:918.62px;font-size:12.5px;color:#333">0</div>
<div class="t " style="left:843.3px;width:600px;text-align:center;top:918.62px;font-size:12.5px;color:#333">5</div>
<div class="t " style="left:940.3px;width:600px;text-align:center;top:918.62px;font-size:12.5px;color:#333">10</div>
<div class="t " style="left:1037.3px;width:600px;text-align:center;top:918.62px;font-size:12.5px;color:#333">15</div>
<div class="t " style="left:1134.3px;width:600px;text-align:center;top:918.62px;font-size:12.5px;color:#333">20</div>
<div class="t " style="left:1231.3px;width:600px;text-align:center;top:918.62px;font-size:12.5px;color:#333">25</div>
<div class="t " style="left:1328.3px;width:600px;text-align:center;top:918.62px;font-size:12.5px;color:#333">30</div>
<div class="t " style="left:1425.3px;width:600px;text-align:center;top:918.62px;font-size:12.5px;color:#333">35</div>
<div class="t " style="left:1108.3px;width:600px;text-align:center;top:938.51px;font-size:12.75px;color:#666">Temperatura esterna [°C]</div>
<div class="t" style="left:984px;top:606.5px;font-size:12.85px;transform:rotate(-90deg);transform-origin:0 0;color:#666">Potenze [W]</div>
<div class="t " style="left:1079px;width:600px;text-align:center;top:213.08px;font-size:11.95px;font-weight:bold;color:#333">Carico energetico</div>
<svg style="left:1721px;top:214px" width="14" height="14" viewBox="0 0 14 14"><path d="M6.5 1v8M3 6l3.5 3.5L10 6" fill="none" stroke="#333" stroke-width="1.4"/><path d="M1 8.5v3.5h11V8.5" fill="none" stroke="#333" stroke-width="1.4"/></svg>
<svg style="left:1752px;top:214px" width="14" height="14" viewBox="0 0 14 14"><path d="M1 4V1h3M9 1h3v3M12 9v3H9M4 12H1V9" fill="none" stroke="#333" stroke-width="1.5"/><path d="M1.5 1.5l2.5 2.5M11.5 1.5L9 4M11.5 11.5L9 9M1.5 11.5L4 9" stroke="#333" stroke-width="1.3"/></svg>
<svg style="left:1180px;top:976px" width="10" height="10" viewBox="0 0 10 10"><circle cx="5" cy="4.6" r="4" fill="#f47c7c"/></svg>
<div class="t " style="left:1198px;top:974.44px;font-size:12px;color:#333">ΦH</div>
<svg style="left:1239px;top:976px" width="10" height="10" viewBox="0 0 10 10"><circle cx="5" cy="4.6" r="4" fill="#3a72df"/></svg>
<div class="t " style="left:1257.5px;top:974.44px;font-size:12px;color:#333">ΦC</div>
<div class="ab" style="left:1296px;top:979px;width:15.5px;height:3px;background:#ee4444;border-radius:1px"></div>
<div class="t " style="left:1317px;top:974.47px;font-size:11.97px;color:#333">Firma energetica ΦH</div>
<div class="ab" style="left:1448.5px;top:979px;width:16px;height:3px;background:#1c4ea0;border-radius:1px"></div>
<div class="t " style="left:1469.8px;top:974.47px;font-size:11.97px;color:#333">Firma energetica ΦC</div>
<svg style="left:0;top:0" width="1819" height="1040" viewBox="0 0 1819 1040"><g fill="#f57b7b"><circle cx="1356.3" cy="761.4" r="0.62"/><circle cx="1399.0" cy="760.8" r="0.62"/><circle cx="1400.9" cy="759.9" r="0.62"/><circle cx="1325.3" cy="758.8" r="0.62"/><circle cx="1371.8" cy="758.2" r="0.62"/><circle cx="1300.1" cy="758.0" r="0.62"/><circle cx="1290.4" cy="757.9" r="0.62"/><circle cx="1402.9" cy="757.9" r="0.62"/><circle cx="1391.2" cy="757.7" r="0.62"/><circle cx="1338.9" cy="757.6" r="0.62"/><circle cx="1430.0" cy="757.5" r="0.62"/><circle cx="1317.5" cy="757.4" r="0.62"/><circle cx="1387.4" cy="757.2" r="0.62"/><circle cx="1325.3" cy="756.7" r="0.62"/><circle cx="1377.7" cy="756.7" r="0.62"/><circle cx="1377.7" cy="756.1" r="0.62"/><circle cx="1271.0" cy="756.0" r="0.62"/><circle cx="1389.3" cy="755.8" r="0.62"/><circle cx="1319.5" cy="755.6" r="0.62"/><circle cx="1375.7" cy="755.4" r="0.62"/><circle cx="1358.3" cy="755.3" r="0.62"/><circle cx="1356.3" cy="754.8" r="0.62"/><circle cx="1400.9" cy="754.6" r="0.62"/><circle cx="1371.8" cy="754.4" r="0.62"/><circle cx="1335.0" cy="754.4" r="0.62"/><circle cx="1368.0" cy="754.0" r="0.62"/><circle cx="1356.3" cy="753.0" r="0.62"/><circle cx="1333.0" cy="753.0" r="0.62"/><circle cx="1323.3" cy="752.9" r="0.62"/><circle cx="1346.6" cy="752.9" r="0.62"/><circle cx="1402.9" cy="752.9" r="0.62"/><circle cx="1350.5" cy="752.7" r="0.62"/><circle cx="1379.6" cy="752.7" r="0.62"/><circle cx="1346.6" cy="752.7" r="0.62"/><circle cx="1420.3" cy="752.6" r="0.62"/><circle cx="1385.4" cy="752.5" r="0.62"/><circle cx="1377.7" cy="752.3" r="0.62"/><circle cx="1292.3" cy="752.2" r="0.62"/><circle cx="1385.4" cy="752.0" r="0.62"/><circle cx="1408.7" cy="752.0" r="0.62"/><circle cx="1377.7" cy="751.7" r="0.62"/><circle cx="1399.0" cy="751.4" r="0.62"/><circle cx="1406.8" cy="751.1" r="0.62"/><circle cx="1399.0" cy="750.5" r="0.62"/><circle cx="1331.1" cy="750.2" r="0.62"/><circle cx="1364.1" cy="750.0" r="0.62"/><circle cx="1441.7" cy="749.5" r="0.62"/><circle cx="1344.7" cy="749.4" r="0.62"/><circle cx="1366.0" cy="749.3" r="0.62"/><circle cx="1414.5" cy="748.9" r="0.62"/><circle cx="1358.3" cy="748.9" r="0.62"/><circle cx="1368.0" cy="748.8" r="0.62"/><circle cx="1350.5" cy="748.8" r="0.62"/><circle cx="1288.4" cy="748.8" r="0.62"/><circle cx="1354.4" cy="748.6" r="0.62"/><circle cx="1259.3" cy="748.4" r="0.62"/><circle cx="1336.9" cy="748.2" r="0.62"/><circle cx="1385.4" cy="747.8" r="0.62"/><circle cx="1375.7" cy="747.7" r="0.62"/><circle cx="1393.2" cy="747.5" r="0.62"/><circle cx="1375.7" cy="747.3" r="0.62"/><circle cx="1410.6" cy="747.3" r="0.62"/><circle cx="1373.8" cy="746.3" r="0.62"/><circle cx="1271.0" cy="746.1" r="0.62"/><circle cx="1354.4" cy="746.1" r="0.62"/><circle cx="1319.5" cy="746.0" r="0.62"/><circle cx="1346.6" cy="745.9" r="0.62"/><circle cx="1305.9" cy="745.9" r="0.62"/><circle cx="1360.2" cy="745.8" r="0.62"/><circle cx="1296.2" cy="745.8" r="0.62"/><circle cx="1352.4" cy="745.7" r="0.62"/><circle cx="1375.7" cy="745.6" r="0.62"/><circle cx="1336.9" cy="745.5" r="0.62"/><circle cx="1325.3" cy="745.4" r="0.62"/><circle cx="1344.7" cy="745.2" r="0.62"/><circle cx="1385.4" cy="745.1" r="0.62"/><circle cx="1371.8" cy="744.9" r="0.62"/><circle cx="1269.0" cy="744.8" r="0.62"/><circle cx="1379.6" cy="744.7" r="0.62"/><circle cx="1265.1" cy="744.4" r="0.62"/><circle cx="1389.3" cy="744.3" r="0.62"/><circle cx="1272.9" cy="744.2" r="0.62"/><circle cx="1259.3" cy="743.9" r="0.62"/><circle cx="1389.3" cy="743.8" r="0.62"/><circle cx="1263.2" cy="743.4" r="0.62"/><circle cx="1292.3" cy="743.4" r="0.62"/><circle cx="1234.1" cy="743.2" r="0.62"/><circle cx="1348.6" cy="743.1" r="0.62"/><circle cx="1385.4" cy="743.0" r="0.62"/><circle cx="1360.2" cy="742.7" r="0.62"/><circle cx="1381.5" cy="742.5" r="0.62"/><circle cx="1404.8" cy="742.2" r="0.62"/><circle cx="1364.1" cy="742.2" r="0.62"/><circle cx="1327.2" cy="741.8" r="0.62"/><circle cx="1406.8" cy="741.8" r="0.62"/><circle cx="1395.1" cy="741.6" r="0.62"/><circle cx="1402.9" cy="741.6" r="0.62"/><circle cx="1368.0" cy="741.5" r="0.62"/><circle cx="1358.3" cy="741.5" r="0.62"/><circle cx="1321.4" cy="741.2" r="0.62"/><circle cx="1393.2" cy="741.2" r="0.62"/><circle cx="1408.7" cy="740.9" r="0.62"/><circle cx="1350.5" cy="740.7" r="0.62"/><circle cx="1422.3" cy="740.6" r="0.62"/><circle cx="1338.9" cy="740.5" r="0.62"/><circle cx="1340.8" cy="740.3" r="0.62"/><circle cx="1395.1" cy="740.2" r="0.62"/><circle cx="1379.6" cy="740.2" r="0.62"/><circle cx="1399.0" cy="739.7" r="0.62"/><circle cx="1296.2" cy="739.5" r="0.62"/><circle cx="1383.5" cy="739.5" r="0.62"/><circle cx="1416.5" cy="739.3" r="0.62"/><circle cx="1336.9" cy="739.2" r="0.62"/><circle cx="1267.1" cy="739.0" r="0.62"/><circle cx="1354.4" cy="739.0" r="0.62"/><circle cx="1371.8" cy="738.9" r="0.62"/><circle cx="1348.6" cy="738.8" r="0.62"/><circle cx="1331.1" cy="738.4" r="0.62"/><circle cx="1422.3" cy="738.3" r="0.62"/><circle cx="1311.7" cy="738.3" r="0.62"/><circle cx="1354.4" cy="738.3" r="0.62"/><circle cx="1400.9" cy="738.2" r="0.62"/><circle cx="1342.7" cy="738.2" r="0.62"/><circle cx="1375.7" cy="738.1" r="0.62"/><circle cx="1348.6" cy="737.8" r="0.62"/><circle cx="1393.2" cy="737.8" r="0.62"/><circle cx="1350.5" cy="737.7" r="0.62"/><circle cx="1309.8" cy="737.6" r="0.62"/><circle cx="1344.7" cy="737.4" r="0.62"/><circle cx="1360.2" cy="737.4" r="0.62"/><circle cx="1344.7" cy="737.3" r="0.62"/><circle cx="1309.8" cy="737.0" r="0.62"/><circle cx="1408.7" cy="737.0" r="0.62"/><circle cx="1371.8" cy="736.9" r="0.62"/><circle cx="1404.8" cy="736.7" r="0.62"/><circle cx="1408.7" cy="736.7" r="0.62"/><circle cx="1399.0" cy="736.5" r="0.62"/><circle cx="1389.3" cy="736.4" r="0.62"/><circle cx="1424.2" cy="736.4" r="0.62"/><circle cx="1311.7" cy="736.2" r="0.62"/><circle cx="1350.5" cy="736.1" r="0.62"/><circle cx="1364.1" cy="735.7" r="0.62"/><circle cx="1305.9" cy="735.4" r="0.62"/><circle cx="1366.0" cy="735.4" r="0.62"/><circle cx="1236.0" cy="734.9" r="0.62"/><circle cx="1271.0" cy="734.8" r="0.62"/><circle cx="1387.4" cy="734.7" r="0.62"/><circle cx="1404.8" cy="734.3" r="0.62"/><circle cx="1271.0" cy="734.2" r="0.62"/><circle cx="1406.8" cy="734.1" r="0.62"/><circle cx="1414.5" cy="733.9" r="0.62"/><circle cx="1368.0" cy="733.5" r="0.62"/><circle cx="1259.3" cy="733.3" r="0.62"/><circle cx="1340.8" cy="732.9" r="0.62"/><circle cx="1360.2" cy="732.6" r="0.62"/><circle cx="1323.3" cy="732.5" r="0.62"/><circle cx="1313.6" cy="732.5" r="0.62"/><circle cx="1333.0" cy="732.5" r="0.62"/><circle cx="1344.7" cy="731.8" r="0.62"/><circle cx="1377.7" cy="731.5" r="0.62"/><circle cx="1399.0" cy="731.5" r="0.62"/><circle cx="1300.1" cy="731.5" r="0.62"/><circle cx="1274.8" cy="731.4" r="0.62"/><circle cx="1352.4" cy="731.3" r="0.62"/><circle cx="1389.3" cy="730.6" r="0.62"/><circle cx="1397.1" cy="730.4" r="0.62"/><circle cx="1383.5" cy="730.3" r="0.62"/><circle cx="1406.8" cy="730.3" r="0.62"/><circle cx="1389.3" cy="730.2" r="0.62"/><circle cx="1385.4" cy="730.1" r="0.62"/><circle cx="1373.8" cy="729.7" r="0.62"/><circle cx="1385.4" cy="729.5" r="0.62"/><circle cx="1276.8" cy="729.2" r="0.62"/><circle cx="1368.0" cy="729.1" r="0.62"/><circle cx="1354.4" cy="729.0" r="0.62"/><circle cx="1402.9" cy="728.7" r="0.62"/><circle cx="1265.1" cy="728.6" r="0.62"/><circle cx="1333.0" cy="728.5" r="0.62"/><circle cx="1354.4" cy="728.4" r="0.62"/><circle cx="1294.2" cy="727.8" r="0.62"/><circle cx="1368.0" cy="727.3" r="0.62"/><circle cx="1410.6" cy="727.3" r="0.62"/><circle cx="1410.6" cy="727.0" r="0.62"/><circle cx="1412.6" cy="726.9" r="0.62"/><circle cx="1315.6" cy="726.6" r="0.62"/><circle cx="1360.2" cy="726.3" r="0.62"/><circle cx="1342.7" cy="726.2" r="0.62"/><circle cx="1313.6" cy="726.0" r="0.62"/><circle cx="1368.0" cy="725.9" r="0.62"/><circle cx="1338.9" cy="725.8" r="0.62"/><circle cx="1342.7" cy="725.7" r="0.62"/><circle cx="1265.1" cy="725.7" r="0.62"/><circle cx="1368.0" cy="725.6" r="0.62"/><circle cx="1321.4" cy="725.6" r="0.62"/><circle cx="1352.4" cy="725.4" r="0.62"/><circle cx="1393.2" cy="725.1" r="0.62"/><circle cx="1346.6" cy="725.0" r="0.62"/><circle cx="1333.0" cy="725.0" r="0.62"/><circle cx="1397.1" cy="725.0" r="0.62"/><circle cx="1294.2" cy="725.0" r="0.62"/><circle cx="1336.9" cy="724.9" r="0.62"/><circle cx="1263.2" cy="724.2" r="0.62"/><circle cx="1414.5" cy="723.6" r="0.62"/><circle cx="1416.5" cy="723.6" r="0.62"/><circle cx="1267.1" cy="723.1" r="0.62"/><circle cx="1319.5" cy="722.9" r="0.62"/><circle cx="1395.1" cy="722.6" r="0.62"/><circle cx="1234.1" cy="722.3" r="0.62"/><circle cx="1391.2" cy="722.3" r="0.62"/><circle cx="1340.8" cy="721.9" r="0.62"/><circle cx="1348.6" cy="721.6" r="0.62"/><circle cx="1383.5" cy="721.6" r="0.62"/><circle cx="1278.7" cy="721.5" r="0.62"/><circle cx="1381.5" cy="721.5" r="0.62"/><circle cx="1350.5" cy="720.9" r="0.62"/><circle cx="1350.5" cy="720.6" r="0.62"/><circle cx="1282.6" cy="720.4" r="0.62"/><circle cx="1315.6" cy="720.3" r="0.62"/><circle cx="1319.5" cy="720.1" r="0.62"/><circle cx="1383.5" cy="720.1" r="0.62"/><circle cx="1352.4" cy="719.9" r="0.62"/><circle cx="1344.7" cy="719.7" r="0.62"/><circle cx="1366.0" cy="719.4" r="0.62"/><circle cx="1373.8" cy="719.4" r="0.62"/><circle cx="1282.6" cy="719.3" r="0.62"/><circle cx="1259.3" cy="719.3" r="0.62"/><circle cx="1342.7" cy="719.3" r="0.62"/><circle cx="1327.2" cy="719.3" r="0.62"/><circle cx="1342.7" cy="719.1" r="0.62"/><circle cx="1336.9" cy="719.1" r="0.62"/><circle cx="1375.7" cy="718.7" r="0.62"/><circle cx="1315.6" cy="718.7" r="0.62"/><circle cx="1286.5" cy="718.4" r="0.62"/><circle cx="1309.8" cy="718.3" r="0.62"/><circle cx="1414.5" cy="718.3" r="0.62"/><circle cx="1371.8" cy="718.2" r="0.62"/><circle cx="1362.1" cy="718.2" r="0.62"/><circle cx="1377.7" cy="717.7" r="0.62"/><circle cx="1387.4" cy="717.7" r="0.62"/><circle cx="1368.0" cy="717.7" r="0.62"/><circle cx="1307.8" cy="717.4" r="0.62"/><circle cx="1300.1" cy="717.4" r="0.62"/><circle cx="1300.1" cy="717.2" r="0.62"/><circle cx="1381.5" cy="717.1" r="0.62"/><circle cx="1364.1" cy="717.0" r="0.62"/><circle cx="1383.5" cy="716.8" r="0.62"/><circle cx="1323.3" cy="716.6" r="0.62"/><circle cx="1292.3" cy="716.6" r="0.62"/><circle cx="1373.8" cy="716.5" r="0.62"/><circle cx="1272.9" cy="716.0" r="0.62"/><circle cx="1290.4" cy="715.9" r="0.62"/><circle cx="1360.2" cy="715.9" r="0.62"/><circle cx="1348.6" cy="715.8" r="0.62"/><circle cx="1340.8" cy="715.7" r="0.62"/><circle cx="1375.7" cy="715.6" r="0.62"/><circle cx="1375.7" cy="715.2" r="0.62"/><circle cx="1333.0" cy="714.6" r="0.62"/><circle cx="1368.0" cy="714.6" r="0.62"/><circle cx="1358.3" cy="714.6" r="0.62"/><circle cx="1259.3" cy="714.3" r="0.62"/><circle cx="1241.9" cy="713.9" r="0.62"/><circle cx="1305.9" cy="713.7" r="0.62"/><circle cx="1356.3" cy="713.7" r="0.62"/><circle cx="1346.6" cy="713.5" r="0.62"/><circle cx="1369.9" cy="713.5" r="0.62"/><circle cx="1302.0" cy="713.4" r="0.62"/><circle cx="1383.5" cy="713.2" r="0.62"/><circle cx="1342.7" cy="713.2" r="0.62"/><circle cx="1350.5" cy="713.1" r="0.62"/><circle cx="1263.2" cy="713.0" r="0.62"/><circle cx="1348.6" cy="713.0" r="0.62"/><circle cx="1288.4" cy="712.9" r="0.62"/><circle cx="1379.6" cy="712.9" r="0.62"/><circle cx="1368.0" cy="712.4" r="0.62"/><circle cx="1325.3" cy="712.1" r="0.62"/><circle cx="1379.6" cy="711.9" r="0.62"/><circle cx="1391.2" cy="711.4" r="0.62"/><circle cx="1239.9" cy="711.2" r="0.62"/><circle cx="1352.4" cy="711.1" r="0.62"/><circle cx="1336.9" cy="710.9" r="0.62"/><circle cx="1243.8" cy="710.4" r="0.62"/><circle cx="1352.4" cy="710.3" r="0.62"/><circle cx="1302.0" cy="710.3" r="0.62"/><circle cx="1307.8" cy="710.1" r="0.62"/><circle cx="1360.2" cy="710.0" r="0.62"/><circle cx="1336.9" cy="709.9" r="0.62"/><circle cx="1298.1" cy="709.9" r="0.62"/><circle cx="1276.8" cy="709.7" r="0.62"/><circle cx="1393.2" cy="709.4" r="0.62"/><circle cx="1383.5" cy="709.1" r="0.62"/><circle cx="1226.3" cy="709.0" r="0.62"/><circle cx="1416.5" cy="709.0" r="0.62"/><circle cx="1375.7" cy="708.8" r="0.62"/><circle cx="1317.5" cy="708.7" r="0.62"/><circle cx="1393.2" cy="708.7" r="0.62"/><circle cx="1348.6" cy="708.6" r="0.62"/><circle cx="1276.8" cy="708.6" r="0.62"/><circle cx="1329.2" cy="708.5" r="0.62"/><circle cx="1286.5" cy="708.3" r="0.62"/><circle cx="1385.4" cy="708.0" r="0.62"/><circle cx="1333.0" cy="708.0" r="0.62"/><circle cx="1251.6" cy="707.9" r="0.62"/><circle cx="1369.9" cy="707.6" r="0.62"/><circle cx="1302.0" cy="707.6" r="0.62"/><circle cx="1368.0" cy="707.5" r="0.62"/><circle cx="1356.3" cy="707.4" r="0.62"/><circle cx="1395.1" cy="707.3" r="0.62"/><circle cx="1313.6" cy="707.3" r="0.62"/><circle cx="1224.4" cy="707.2" r="0.62"/><circle cx="1369.9" cy="707.1" r="0.62"/><circle cx="1331.1" cy="706.9" r="0.62"/><circle cx="1400.9" cy="706.9" r="0.62"/><circle cx="1381.5" cy="706.7" r="0.62"/><circle cx="1402.9" cy="706.7" r="0.62"/><circle cx="1313.6" cy="706.6" r="0.62"/><circle cx="1352.4" cy="706.6" r="0.62"/><circle cx="1305.9" cy="706.4" r="0.62"/><circle cx="1366.0" cy="706.3" r="0.62"/><circle cx="1348.6" cy="706.2" r="0.62"/><circle cx="1381.5" cy="706.1" r="0.62"/><circle cx="1366.0" cy="705.8" r="0.62"/><circle cx="1216.6" cy="705.7" r="0.62"/><circle cx="1249.6" cy="705.4" r="0.62"/><circle cx="1348.6" cy="705.4" r="0.62"/><circle cx="1399.0" cy="705.2" r="0.62"/><circle cx="1348.6" cy="705.0" r="0.62"/><circle cx="1325.3" cy="705.0" r="0.62"/><circle cx="1375.7" cy="705.0" r="0.62"/><circle cx="1307.8" cy="704.8" r="0.62"/><circle cx="1377.7" cy="704.7" r="0.62"/><circle cx="1383.5" cy="704.5" r="0.62"/><circle cx="1352.4" cy="704.5" r="0.62"/><circle cx="1404.8" cy="704.5" r="0.62"/><circle cx="1333.0" cy="704.3" r="0.62"/><circle cx="1371.8" cy="704.3" r="0.62"/><circle cx="1323.3" cy="704.2" r="0.62"/><circle cx="1377.7" cy="704.1" r="0.62"/><circle cx="1389.3" cy="704.1" r="0.62"/><circle cx="1232.2" cy="704.0" r="0.62"/><circle cx="1261.3" cy="703.9" r="0.62"/><circle cx="1358.3" cy="703.9" r="0.62"/><circle cx="1292.3" cy="703.6" r="0.62"/><circle cx="1387.4" cy="703.6" r="0.62"/><circle cx="1377.7" cy="703.4" r="0.62"/><circle cx="1333.0" cy="703.2" r="0.62"/><circle cx="1340.8" cy="703.2" r="0.62"/><circle cx="1364.1" cy="703.1" r="0.62"/><circle cx="1364.1" cy="703.0" r="0.62"/><circle cx="1369.9" cy="702.8" r="0.62"/><circle cx="1265.1" cy="702.7" r="0.62"/><circle cx="1381.5" cy="702.6" r="0.62"/><circle cx="1364.1" cy="702.6" r="0.62"/><circle cx="1350.5" cy="702.6" r="0.62"/><circle cx="1371.8" cy="702.4" r="0.62"/><circle cx="1381.5" cy="702.3" r="0.62"/><circle cx="1276.8" cy="702.2" r="0.62"/><circle cx="1338.9" cy="702.1" r="0.62"/><circle cx="1286.5" cy="701.9" r="0.62"/><circle cx="1305.9" cy="701.8" r="0.62"/><circle cx="1371.8" cy="701.6" r="0.62"/><circle cx="1404.8" cy="701.5" r="0.62"/><circle cx="1354.4" cy="701.3" r="0.62"/><circle cx="1366.0" cy="701.3" r="0.62"/><circle cx="1253.5" cy="701.1" r="0.62"/><circle cx="1212.8" cy="701.1" r="0.62"/><circle cx="1220.5" cy="701.0" r="0.62"/><circle cx="1344.7" cy="700.9" r="0.62"/><circle cx="1342.7" cy="700.8" r="0.62"/><circle cx="1354.4" cy="700.8" r="0.62"/><circle cx="1385.4" cy="700.7" r="0.62"/><circle cx="1373.8" cy="700.6" r="0.62"/><circle cx="1402.9" cy="700.6" r="0.62"/><circle cx="1327.2" cy="700.5" r="0.62"/><circle cx="1342.7" cy="700.4" r="0.62"/><circle cx="1303.9" cy="700.4" r="0.62"/><circle cx="1280.7" cy="700.3" r="0.62"/><circle cx="1385.4" cy="700.3" r="0.62"/><circle cx="1300.1" cy="700.3" r="0.62"/><circle cx="1274.8" cy="700.2" r="0.62"/><circle cx="1350.5" cy="700.0" r="0.62"/><circle cx="1383.5" cy="699.9" r="0.62"/><circle cx="1364.1" cy="699.9" r="0.62"/><circle cx="1276.8" cy="699.7" r="0.62"/><circle cx="1298.1" cy="699.7" r="0.62"/><circle cx="1350.5" cy="699.6" r="0.62"/><circle cx="1333.0" cy="699.4" r="0.62"/><circle cx="1288.4" cy="699.0" r="0.62"/><circle cx="1393.2" cy="699.0" r="0.62"/><circle cx="1395.1" cy="698.8" r="0.62"/><circle cx="1362.1" cy="698.6" r="0.62"/><circle cx="1373.8" cy="698.3" r="0.62"/><circle cx="1271.0" cy="698.2" r="0.62"/><circle cx="1228.3" cy="698.2" r="0.62"/><circle cx="1331.1" cy="698.1" r="0.62"/><circle cx="1325.3" cy="698.1" r="0.62"/><circle cx="1290.4" cy="698.0" r="0.62"/><circle cx="1216.6" cy="697.9" r="0.62"/><circle cx="1348.6" cy="697.8" r="0.62"/><circle cx="1366.0" cy="697.6" r="0.62"/><circle cx="1362.1" cy="697.6" r="0.62"/><circle cx="1340.8" cy="697.4" r="0.62"/><circle cx="1362.1" cy="697.1" r="0.62"/><circle cx="1354.4" cy="697.1" r="0.62"/><circle cx="1342.7" cy="697.1" r="0.62"/><circle cx="1338.9" cy="696.8" r="0.62"/><circle cx="1344.7" cy="696.7" r="0.62"/><circle cx="1282.6" cy="696.6" r="0.62"/><circle cx="1335.0" cy="696.6" r="0.62"/><circle cx="1335.0" cy="696.4" r="0.62"/><circle cx="1368.0" cy="696.3" r="0.62"/><circle cx="1346.6" cy="696.2" r="0.62"/><circle cx="1292.3" cy="696.2" r="0.62"/><circle cx="1315.6" cy="696.0" r="0.62"/><circle cx="1383.5" cy="695.9" r="0.62"/><circle cx="1317.5" cy="695.9" r="0.62"/><circle cx="1284.5" cy="695.8" r="0.62"/><circle cx="1288.4" cy="695.6" r="0.62"/><circle cx="1366.0" cy="695.6" r="0.62"/><circle cx="1329.2" cy="695.5" r="0.62"/><circle cx="1284.5" cy="695.2" r="0.62"/><circle cx="1346.6" cy="695.2" r="0.62"/><circle cx="1271.0" cy="695.1" r="0.62"/><circle cx="1267.1" cy="694.9" r="0.62"/><circle cx="1342.7" cy="694.9" r="0.62"/><circle cx="1206.9" cy="694.6" r="0.62"/><circle cx="1278.7" cy="694.3" r="0.62"/><circle cx="1335.0" cy="694.1" r="0.62"/><circle cx="1249.6" cy="694.1" r="0.62"/><circle cx="1307.8" cy="694.0" r="0.62"/><circle cx="1305.9" cy="693.6" r="0.62"/><circle cx="1362.1" cy="693.4" r="0.62"/><circle cx="1253.5" cy="693.3" r="0.62"/><circle cx="1336.9" cy="693.2" r="0.62"/><circle cx="1331.1" cy="693.1" r="0.62"/><circle cx="1346.6" cy="692.9" r="0.62"/><circle cx="1340.8" cy="692.9" r="0.62"/><circle cx="1302.0" cy="692.6" r="0.62"/><circle cx="1371.8" cy="692.5" r="0.62"/><circle cx="1335.0" cy="692.1" r="0.62"/><circle cx="1368.0" cy="692.1" r="0.62"/><circle cx="1239.9" cy="692.0" r="0.62"/><circle cx="1375.7" cy="691.9" r="0.62"/><circle cx="1360.2" cy="691.9" r="0.62"/><circle cx="1379.6" cy="691.8" r="0.62"/><circle cx="1373.8" cy="691.6" r="0.62"/><circle cx="1360.2" cy="691.6" r="0.62"/><circle cx="1389.3" cy="691.6" r="0.62"/><circle cx="1358.3" cy="691.6" r="0.62"/><circle cx="1253.5" cy="691.6" r="0.62"/><circle cx="1290.4" cy="691.5" r="0.62"/><circle cx="1342.7" cy="691.5" r="0.62"/><circle cx="1327.2" cy="691.0" r="0.62"/><circle cx="1327.2" cy="691.0" r="0.62"/><circle cx="1336.9" cy="690.8" r="0.62"/><circle cx="1303.9" cy="690.7" r="0.62"/><circle cx="1292.3" cy="690.4" r="0.62"/><circle cx="1354.4" cy="690.1" r="0.62"/><circle cx="1247.7" cy="689.8" r="0.62"/><circle cx="1362.1" cy="689.8" r="0.62"/><circle cx="1302.0" cy="689.8" r="0.62"/><circle cx="1387.4" cy="689.4" r="0.62"/><circle cx="1354.4" cy="689.4" r="0.62"/><circle cx="1302.0" cy="689.2" r="0.62"/><circle cx="1350.5" cy="689.2" r="0.62"/><circle cx="1387.4" cy="689.2" r="0.62"/><circle cx="1236.0" cy="689.1" r="0.62"/><circle cx="1305.9" cy="689.0" r="0.62"/><circle cx="1371.8" cy="688.4" r="0.62"/><circle cx="1368.0" cy="688.4" r="0.62"/><circle cx="1290.4" cy="688.4" r="0.62"/><circle cx="1350.5" cy="688.2" r="0.63"/><circle cx="1259.3" cy="687.8" r="0.63"/><circle cx="1303.9" cy="687.8" r="0.63"/><circle cx="1350.5" cy="687.6" r="0.63"/><circle cx="1379.6" cy="687.5" r="0.63"/><circle cx="1321.4" cy="687.2" r="0.63"/><circle cx="1239.9" cy="687.0" r="0.63"/><circle cx="1329.2" cy="687.0" r="0.63"/><circle cx="1364.1" cy="687.0" r="0.63"/><circle cx="1352.4" cy="686.9" r="0.64"/><circle cx="1303.9" cy="686.8" r="0.64"/><circle cx="1336.9" cy="686.7" r="0.64"/><circle cx="1311.7" cy="686.4" r="0.64"/><circle cx="1348.6" cy="686.3" r="0.64"/><circle cx="1369.9" cy="686.2" r="0.64"/><circle cx="1309.8" cy="685.9" r="0.64"/><circle cx="1232.2" cy="685.8" r="0.64"/><circle cx="1317.5" cy="685.7" r="0.64"/><circle cx="1395.1" cy="685.7" r="0.64"/><circle cx="1321.4" cy="685.3" r="0.65"/><circle cx="1360.2" cy="685.1" r="0.65"/><circle cx="1362.1" cy="685.1" r="0.65"/><circle cx="1364.1" cy="684.2" r="0.66"/><circle cx="1356.3" cy="684.2" r="0.66"/><circle cx="1278.7" cy="683.8" r="0.66"/><circle cx="1317.5" cy="683.6" r="0.66"/><circle cx="1288.4" cy="683.3" r="0.66"/><circle cx="1389.3" cy="683.1" r="0.66"/><circle cx="1269.0" cy="683.0" r="0.66"/><circle cx="1319.5" cy="682.8" r="0.67"/><circle cx="1381.5" cy="682.3" r="0.67"/><circle cx="1371.8" cy="682.3" r="0.67"/><circle cx="1354.4" cy="682.0" r="0.67"/><circle cx="1391.2" cy="682.0" r="0.67"/><circle cx="1276.8" cy="682.0" r="0.67"/><circle cx="1358.3" cy="681.8" r="0.67"/><circle cx="1333.0" cy="681.8" r="0.67"/><circle cx="1342.7" cy="681.7" r="0.67"/><circle cx="1309.8" cy="681.7" r="0.67"/><circle cx="1205.0" cy="681.7" r="0.67"/><circle cx="1309.8" cy="681.6" r="0.68"/><circle cx="1360.2" cy="681.5" r="0.68"/><circle cx="1325.3" cy="681.5" r="0.68"/><circle cx="1344.7" cy="681.4" r="0.68"/><circle cx="1280.7" cy="681.1" r="0.68"/><circle cx="1218.6" cy="680.9" r="0.68"/><circle cx="1309.8" cy="680.8" r="0.68"/><circle cx="1342.7" cy="680.7" r="0.68"/><circle cx="1369.9" cy="680.7" r="0.68"/><circle cx="1362.1" cy="680.6" r="0.68"/><circle cx="1226.3" cy="680.2" r="0.69"/><circle cx="1296.2" cy="680.2" r="0.69"/><circle cx="1356.3" cy="680.0" r="0.69"/><circle cx="1377.7" cy="679.8" r="0.69"/><circle cx="1323.3" cy="679.7" r="0.69"/><circle cx="1366.0" cy="678.7" r="0.70"/><circle cx="1271.0" cy="678.5" r="0.70"/><circle cx="1364.1" cy="678.4" r="0.70"/><circle cx="1307.8" cy="678.3" r="0.70"/><circle cx="1336.9" cy="678.2" r="0.70"/><circle cx="1366.0" cy="678.1" r="0.70"/><circle cx="1325.3" cy="677.9" r="0.70"/><circle cx="1375.7" cy="677.9" r="0.70"/><circle cx="1307.8" cy="677.8" r="0.70"/><circle cx="1371.8" cy="677.7" r="0.70"/><circle cx="1300.1" cy="677.7" r="0.70"/><circle cx="1329.2" cy="677.6" r="0.71"/><circle cx="1379.6" cy="677.6" r="0.71"/><circle cx="1325.3" cy="677.4" r="0.71"/><circle cx="1358.3" cy="677.2" r="0.71"/><circle cx="1220.5" cy="677.0" r="0.71"/><circle cx="1368.0" cy="677.0" r="0.71"/><circle cx="1323.3" cy="676.9" r="0.71"/><circle cx="1375.7" cy="676.8" r="0.71"/><circle cx="1366.0" cy="675.9" r="0.72"/><circle cx="1329.2" cy="675.9" r="0.72"/><circle cx="1377.7" cy="675.9" r="0.72"/><circle cx="1379.6" cy="675.9" r="0.72"/><circle cx="1319.5" cy="675.7" r="0.72"/><circle cx="1276.8" cy="675.6" r="0.72"/><circle cx="1331.1" cy="675.6" r="0.72"/><circle cx="1348.6" cy="675.5" r="0.72"/><circle cx="1354.4" cy="675.4" r="0.72"/><circle cx="1282.6" cy="675.4" r="0.72"/><circle cx="1267.1" cy="675.1" r="0.72"/><circle cx="1358.3" cy="675.0" r="0.73"/><circle cx="1358.3" cy="674.9" r="0.73"/><circle cx="1243.8" cy="674.7" r="0.73"/><circle cx="1360.2" cy="674.7" r="0.73"/><circle cx="1356.3" cy="674.6" r="0.73"/><circle cx="1296.2" cy="674.5" r="0.73"/><circle cx="1329.2" cy="674.4" r="0.73"/><circle cx="1395.1" cy="674.4" r="0.73"/><circle cx="1333.0" cy="674.4" r="0.73"/><circle cx="1325.3" cy="674.4" r="0.73"/><circle cx="1309.8" cy="674.3" r="0.73"/><circle cx="1296.2" cy="674.1" r="0.73"/><circle cx="1309.8" cy="674.0" r="0.73"/><circle cx="1307.8" cy="673.9" r="0.73"/><circle cx="1249.6" cy="673.9" r="0.73"/><circle cx="1340.8" cy="673.7" r="0.74"/><circle cx="1333.0" cy="673.5" r="0.74"/><circle cx="1377.7" cy="673.3" r="0.74"/><circle cx="1280.7" cy="673.2" r="0.74"/><circle cx="1371.8" cy="673.2" r="0.74"/><circle cx="1342.7" cy="672.8" r="0.74"/><circle cx="1358.3" cy="672.5" r="0.74"/><circle cx="1199.2" cy="672.5" r="0.74"/><circle cx="1284.5" cy="672.4" r="0.75"/><circle cx="1218.6" cy="672.2" r="0.75"/><circle cx="1236.0" cy="672.2" r="0.75"/><circle cx="1344.7" cy="672.0" r="0.75"/><circle cx="1360.2" cy="671.8" r="0.75"/><circle cx="1272.9" cy="671.6" r="0.75"/><circle cx="1251.6" cy="671.5" r="0.75"/><circle cx="1193.4" cy="671.5" r="0.75"/><circle cx="1265.1" cy="671.4" r="0.75"/><circle cx="1342.7" cy="671.0" r="0.76"/><circle cx="1344.7" cy="671.0" r="0.76"/><circle cx="1303.9" cy="670.9" r="0.76"/><circle cx="1305.9" cy="670.7" r="0.76"/><circle cx="1358.3" cy="670.7" r="0.76"/><circle cx="1333.0" cy="670.6" r="0.76"/><circle cx="1336.9" cy="670.4" r="0.76"/><circle cx="1358.3" cy="670.4" r="0.76"/><circle cx="1288.4" cy="670.4" r="0.76"/><circle cx="1369.9" cy="670.3" r="0.76"/><circle cx="1311.7" cy="670.3" r="0.76"/><circle cx="1243.8" cy="670.2" r="0.76"/><circle cx="1364.1" cy="670.1" r="0.76"/><circle cx="1286.5" cy="669.7" r="0.77"/><circle cx="1253.5" cy="669.4" r="0.77"/><circle cx="1369.9" cy="669.3" r="0.77"/><circle cx="1348.6" cy="669.3" r="0.77"/><circle cx="1317.5" cy="669.1" r="0.77"/><circle cx="1288.4" cy="669.0" r="0.77"/><circle cx="1364.1" cy="668.9" r="0.77"/><circle cx="1251.6" cy="668.6" r="0.77"/><circle cx="1307.8" cy="668.6" r="0.77"/><circle cx="1238.0" cy="668.5" r="0.77"/><circle cx="1366.0" cy="668.4" r="0.78"/><circle cx="1389.3" cy="668.1" r="0.78"/><circle cx="1369.9" cy="668.0" r="0.78"/><circle cx="1197.2" cy="667.8" r="0.78"/><circle cx="1354.4" cy="667.7" r="0.78"/><circle cx="1336.9" cy="667.7" r="0.78"/><circle cx="1292.3" cy="667.7" r="0.78"/><circle cx="1261.3" cy="667.0" r="0.79"/><circle cx="1224.4" cy="666.9" r="0.79"/><circle cx="1356.3" cy="666.9" r="0.79"/><circle cx="1364.1" cy="666.7" r="0.79"/><circle cx="1373.8" cy="666.5" r="0.79"/><circle cx="1247.7" cy="666.4" r="0.79"/><circle cx="1303.9" cy="666.2" r="0.79"/><circle cx="1288.4" cy="666.2" r="0.79"/><circle cx="1325.3" cy="666.2" r="0.79"/><circle cx="1282.6" cy="665.9" r="0.79"/><circle cx="1263.2" cy="665.9" r="0.79"/><circle cx="1280.7" cy="665.5" r="0.80"/><circle cx="1259.3" cy="665.4" r="0.80"/><circle cx="1259.3" cy="665.3" r="0.80"/><circle cx="1253.5" cy="665.3" r="0.80"/><circle cx="1331.1" cy="665.2" r="0.80"/><circle cx="1239.9" cy="665.0" r="0.80"/><circle cx="1195.3" cy="665.0" r="0.80"/><circle cx="1354.4" cy="664.9" r="0.80"/><circle cx="1251.6" cy="664.9" r="0.80"/><circle cx="1313.6" cy="664.2" r="0.81"/><circle cx="1356.3" cy="664.2" r="0.81"/><circle cx="1323.3" cy="663.9" r="0.81"/><circle cx="1362.1" cy="663.7" r="0.81"/><circle cx="1321.4" cy="663.3" r="0.81"/><circle cx="1307.8" cy="663.2" r="0.82"/><circle cx="1335.0" cy="663.0" r="0.82"/><circle cx="1333.0" cy="662.9" r="0.82"/><circle cx="1358.3" cy="662.9" r="0.82"/><circle cx="1373.8" cy="662.7" r="0.82"/><circle cx="1294.2" cy="662.6" r="0.82"/><circle cx="1327.2" cy="662.5" r="0.82"/><circle cx="1329.2" cy="662.5" r="0.82"/><circle cx="1350.5" cy="662.4" r="0.82"/><circle cx="1259.3" cy="662.4" r="0.82"/><circle cx="1284.5" cy="662.4" r="0.82"/><circle cx="1300.1" cy="662.3" r="0.82"/><circle cx="1360.2" cy="662.2" r="0.82"/><circle cx="1336.9" cy="662.1" r="0.82"/><circle cx="1358.3" cy="661.8" r="0.83"/><circle cx="1300.1" cy="661.8" r="0.83"/><circle cx="1329.2" cy="661.7" r="0.83"/><circle cx="1352.4" cy="661.7" r="0.83"/><circle cx="1305.9" cy="661.5" r="0.83"/><circle cx="1360.2" cy="661.5" r="0.83"/><circle cx="1354.4" cy="661.3" r="0.83"/><circle cx="1259.3" cy="661.3" r="0.83"/><circle cx="1356.3" cy="661.2" r="0.83"/><circle cx="1385.4" cy="661.2" r="0.83"/><circle cx="1366.0" cy="661.1" r="0.83"/><circle cx="1292.3" cy="661.0" r="0.83"/><circle cx="1348.6" cy="660.9" r="0.83"/><circle cx="1336.9" cy="660.9" r="0.83"/><circle cx="1303.9" cy="660.8" r="0.83"/><circle cx="1259.3" cy="660.8" r="0.83"/><circle cx="1251.6" cy="660.7" r="0.83"/><circle cx="1245.7" cy="660.6" r="0.83"/><circle cx="1239.9" cy="660.0" r="0.84"/><circle cx="1325.3" cy="660.0" r="0.84"/><circle cx="1278.7" cy="659.9" r="0.84"/><circle cx="1364.1" cy="659.7" r="0.84"/><circle cx="1327.2" cy="659.7" r="0.84"/><circle cx="1212.8" cy="659.6" r="0.84"/><circle cx="1329.2" cy="659.3" r="0.84"/><circle cx="1348.6" cy="659.0" r="0.85"/><circle cx="1274.8" cy="658.9" r="0.85"/><circle cx="1303.9" cy="658.8" r="0.85"/><circle cx="1369.9" cy="658.6" r="0.85"/><circle cx="1360.2" cy="658.6" r="0.85"/><circle cx="1362.1" cy="658.6" r="0.85"/><circle cx="1259.3" cy="658.5" r="0.85"/><circle cx="1321.4" cy="658.2" r="0.85"/><circle cx="1371.8" cy="658.1" r="0.85"/><circle cx="1360.2" cy="658.1" r="0.85"/><circle cx="1216.6" cy="658.0" r="0.85"/><circle cx="1377.7" cy="658.0" r="0.85"/><circle cx="1290.4" cy="657.7" r="0.86"/><circle cx="1239.9" cy="657.5" r="0.86"/><circle cx="1280.7" cy="657.3" r="0.86"/><circle cx="1352.4" cy="657.3" r="0.86"/><circle cx="1340.8" cy="657.3" r="0.86"/><circle cx="1354.4" cy="657.3" r="0.86"/><circle cx="1315.6" cy="657.2" r="0.86"/><circle cx="1350.5" cy="657.1" r="0.86"/><circle cx="1263.2" cy="657.1" r="0.86"/><circle cx="1199.2" cy="656.6" r="0.87"/><circle cx="1368.0" cy="656.5" r="0.87"/><circle cx="1317.5" cy="656.4" r="0.87"/><circle cx="1284.5" cy="656.3" r="0.87"/><circle cx="1241.9" cy="656.2" r="0.87"/><circle cx="1350.5" cy="656.1" r="0.87"/><circle cx="1336.9" cy="656.1" r="0.87"/><circle cx="1278.7" cy="656.0" r="0.87"/><circle cx="1317.5" cy="655.9" r="0.87"/><circle cx="1296.2" cy="655.9" r="0.87"/><circle cx="1352.4" cy="655.9" r="0.87"/><circle cx="1368.0" cy="655.8" r="0.87"/><circle cx="1228.3" cy="655.8" r="0.87"/><circle cx="1356.3" cy="655.6" r="0.87"/><circle cx="1323.3" cy="655.5" r="0.87"/><circle cx="1298.1" cy="655.4" r="0.87"/><circle cx="1257.4" cy="655.3" r="0.88"/><circle cx="1362.1" cy="655.2" r="0.88"/><circle cx="1358.3" cy="655.0" r="0.88"/><circle cx="1350.5" cy="654.8" r="0.88"/><circle cx="1327.2" cy="654.7" r="0.88"/><circle cx="1331.1" cy="654.6" r="0.88"/><circle cx="1377.7" cy="654.5" r="0.88"/><circle cx="1298.1" cy="654.5" r="0.88"/><circle cx="1267.1" cy="654.5" r="0.88"/><circle cx="1360.2" cy="654.4" r="0.88"/><circle cx="1230.2" cy="654.4" r="0.88"/><circle cx="1321.4" cy="654.4" r="0.88"/><circle cx="1247.7" cy="654.3" r="0.88"/><circle cx="1327.2" cy="654.0" r="0.88"/><circle cx="1309.8" cy="654.0" r="0.89"/><circle cx="1369.9" cy="653.9" r="0.89"/><circle cx="1336.9" cy="653.5" r="0.89"/><circle cx="1366.0" cy="653.5" r="0.89"/><circle cx="1356.3" cy="653.3" r="0.89"/><circle cx="1232.2" cy="653.3" r="0.89"/><circle cx="1288.4" cy="653.2" r="0.89"/><circle cx="1354.4" cy="653.1" r="0.89"/><circle cx="1354.4" cy="653.0" r="0.89"/><circle cx="1348.6" cy="652.2" r="0.90"/><circle cx="1298.1" cy="651.9" r="0.90"/><circle cx="1238.0" cy="651.8" r="0.90"/><circle cx="1313.6" cy="651.7" r="0.90"/><circle cx="1340.8" cy="651.5" r="0.90"/><circle cx="1249.6" cy="651.3" r="0.91"/><circle cx="1255.4" cy="650.9" r="0.91"/><circle cx="1294.2" cy="650.8" r="0.91"/><circle cx="1327.2" cy="650.8" r="0.91"/><circle cx="1356.3" cy="650.7" r="0.91"/><circle cx="1255.4" cy="650.7" r="0.91"/><circle cx="1358.3" cy="650.6" r="0.91"/><circle cx="1331.1" cy="650.5" r="0.91"/><circle cx="1181.7" cy="650.4" r="0.91"/><circle cx="1350.5" cy="650.2" r="0.91"/><circle cx="1230.2" cy="650.2" r="0.91"/><circle cx="1327.2" cy="650.1" r="0.91"/><circle cx="1348.6" cy="649.9" r="0.92"/><circle cx="1290.4" cy="649.5" r="0.92"/><circle cx="1259.3" cy="649.5" r="0.92"/><circle cx="1284.5" cy="649.4" r="0.92"/><circle cx="1280.7" cy="649.3" r="0.92"/><circle cx="1261.3" cy="649.3" r="0.92"/><circle cx="1280.7" cy="649.3" r="0.92"/><circle cx="1214.7" cy="649.2" r="0.92"/><circle cx="1272.9" cy="649.2" r="0.92"/><circle cx="1263.2" cy="649.1" r="0.92"/><circle cx="1251.6" cy="648.8" r="0.92"/><circle cx="1282.6" cy="648.8" r="0.92"/><circle cx="1350.5" cy="648.8" r="0.92"/><circle cx="1323.3" cy="648.6" r="0.93"/><circle cx="1317.5" cy="648.5" r="0.93"/><circle cx="1335.0" cy="648.3" r="0.93"/><circle cx="1302.0" cy="648.3" r="0.93"/><circle cx="1360.2" cy="648.1" r="0.93"/><circle cx="1340.8" cy="648.0" r="0.93"/><circle cx="1336.9" cy="648.0" r="0.93"/><circle cx="1257.4" cy="647.9" r="0.93"/><circle cx="1348.6" cy="647.9" r="0.93"/><circle cx="1335.0" cy="647.5" r="0.93"/><circle cx="1267.1" cy="647.5" r="0.93"/><circle cx="1311.7" cy="647.2" r="0.94"/><circle cx="1290.4" cy="646.9" r="0.94"/><circle cx="1323.3" cy="646.8" r="0.94"/><circle cx="1303.9" cy="646.7" r="0.94"/><circle cx="1201.1" cy="646.6" r="0.94"/><circle cx="1261.3" cy="646.2" r="0.94"/><circle cx="1255.4" cy="646.2" r="0.94"/><circle cx="1282.6" cy="646.2" r="0.94"/><circle cx="1214.7" cy="646.2" r="0.94"/><circle cx="1290.4" cy="646.1" r="0.94"/><circle cx="1234.1" cy="646.0" r="0.95"/><circle cx="1241.9" cy="645.9" r="0.95"/><circle cx="1344.7" cy="645.8" r="0.95"/><circle cx="1251.6" cy="645.7" r="0.95"/><circle cx="1302.0" cy="645.5" r="0.95"/><circle cx="1272.9" cy="645.5" r="0.95"/><circle cx="1284.5" cy="645.3" r="0.95"/><circle cx="1311.7" cy="645.2" r="0.95"/><circle cx="1350.5" cy="645.0" r="0.95"/><circle cx="1368.0" cy="645.0" r="0.95"/><circle cx="1261.3" cy="644.8" r="0.95"/><circle cx="1346.6" cy="644.8" r="0.95"/><circle cx="1356.3" cy="644.7" r="0.96"/><circle cx="1247.7" cy="644.7" r="0.96"/><circle cx="1379.6" cy="644.7" r="0.96"/><circle cx="1232.2" cy="644.6" r="0.96"/><circle cx="1269.0" cy="644.3" r="0.96"/><circle cx="1257.4" cy="644.2" r="0.96"/><circle cx="1346.6" cy="644.2" r="0.96"/><circle cx="1352.4" cy="644.1" r="0.96"/><circle cx="1340.8" cy="643.9" r="0.96"/><circle cx="1373.8" cy="643.8" r="0.96"/><circle cx="1288.4" cy="643.7" r="0.96"/><circle cx="1292.3" cy="643.7" r="0.96"/><circle cx="1203.1" cy="643.5" r="0.96"/><circle cx="1296.2" cy="643.4" r="0.97"/><circle cx="1265.1" cy="643.3" r="0.97"/><circle cx="1356.3" cy="643.3" r="0.97"/><circle cx="1325.3" cy="643.2" r="0.97"/><circle cx="1288.4" cy="643.0" r="0.97"/><circle cx="1294.2" cy="642.9" r="0.97"/><circle cx="1278.7" cy="642.8" r="0.97"/><circle cx="1313.6" cy="642.8" r="0.97"/><circle cx="1294.2" cy="642.7" r="0.97"/><circle cx="1338.9" cy="642.6" r="0.97"/><circle cx="1282.6" cy="642.6" r="0.97"/><circle cx="1338.9" cy="642.6" r="0.97"/><circle cx="1352.4" cy="642.6" r="0.97"/><circle cx="1280.7" cy="642.5" r="0.97"/><circle cx="1313.6" cy="642.4" r="0.97"/><circle cx="1218.6" cy="642.4" r="0.97"/><circle cx="1325.3" cy="642.4" r="0.97"/><circle cx="1369.9" cy="642.2" r="0.97"/><circle cx="1319.5" cy="642.1" r="0.97"/><circle cx="1269.0" cy="642.1" r="0.98"/><circle cx="1181.7" cy="642.0" r="0.98"/><circle cx="1364.1" cy="642.0" r="0.98"/><circle cx="1366.0" cy="641.9" r="0.98"/><circle cx="1245.7" cy="641.9" r="0.98"/><circle cx="1335.0" cy="641.8" r="0.98"/><circle cx="1311.7" cy="641.7" r="0.98"/><circle cx="1290.4" cy="641.7" r="0.98"/><circle cx="1329.2" cy="641.6" r="0.98"/><circle cx="1336.9" cy="641.6" r="0.98"/><circle cx="1325.3" cy="641.3" r="0.98"/><circle cx="1348.6" cy="641.1" r="0.98"/><circle cx="1335.0" cy="640.9" r="0.98"/><circle cx="1352.4" cy="640.9" r="0.98"/><circle cx="1309.8" cy="640.9" r="0.98"/><circle cx="1282.6" cy="640.8" r="0.98"/><circle cx="1313.6" cy="640.7" r="0.99"/><circle cx="1305.9" cy="640.6" r="0.99"/><circle cx="1284.5" cy="640.4" r="0.99"/><circle cx="1342.7" cy="640.4" r="0.99"/><circle cx="1321.4" cy="640.2" r="0.99"/><circle cx="1290.4" cy="640.2" r="0.99"/><circle cx="1267.1" cy="640.1" r="0.99"/><circle cx="1319.5" cy="640.1" r="0.99"/><circle cx="1243.8" cy="639.7" r="0.99"/><circle cx="1278.7" cy="639.7" r="0.99"/><circle cx="1319.5" cy="639.7" r="0.99"/><circle cx="1302.0" cy="639.5" r="0.99"/><circle cx="1344.7" cy="639.3" r="1.00"/><circle cx="1271.0" cy="639.2" r="1.00"/><circle cx="1317.5" cy="639.1" r="1.00"/><circle cx="1362.1" cy="639.1" r="1.00"/><circle cx="1344.7" cy="639.0" r="1.00"/><circle cx="1336.9" cy="638.9" r="1.00"/><circle cx="1362.1" cy="638.8" r="1.00"/><circle cx="1311.7" cy="638.8" r="1.00"/><circle cx="1348.6" cy="638.8" r="1.00"/><circle cx="1315.6" cy="638.6" r="1.00"/><circle cx="1236.0" cy="638.6" r="1.00"/><circle cx="1325.3" cy="638.1" r="1.01"/><circle cx="1366.0" cy="638.0" r="1.01"/><circle cx="1253.5" cy="638.0" r="1.01"/><circle cx="1360.2" cy="637.7" r="1.01"/><circle cx="1315.6" cy="637.5" r="1.01"/><circle cx="1303.9" cy="637.4" r="1.01"/><circle cx="1290.4" cy="637.4" r="1.01"/><circle cx="1257.4" cy="637.3" r="1.01"/><circle cx="1346.6" cy="637.2" r="1.01"/><circle cx="1278.7" cy="637.1" r="1.01"/><circle cx="1265.1" cy="636.2" r="1.02"/><circle cx="1294.2" cy="636.2" r="1.02"/><circle cx="1222.5" cy="636.0" r="1.02"/><circle cx="1364.1" cy="636.0" r="1.02"/><circle cx="1263.2" cy="636.0" r="1.02"/><circle cx="1336.9" cy="635.9" r="1.02"/><circle cx="1348.6" cy="635.7" r="1.02"/><circle cx="1344.7" cy="635.5" r="1.02"/><circle cx="1294.2" cy="635.4" r="1.03"/><circle cx="1354.4" cy="635.1" r="1.03"/><circle cx="1280.7" cy="635.1" r="1.03"/><circle cx="1303.9" cy="635.1" r="1.03"/><circle cx="1216.6" cy="634.9" r="1.03"/><circle cx="1325.3" cy="634.9" r="1.03"/><circle cx="1344.7" cy="634.9" r="1.03"/><circle cx="1232.2" cy="634.7" r="1.03"/><circle cx="1288.4" cy="634.6" r="1.03"/><circle cx="1228.3" cy="634.5" r="1.03"/><circle cx="1309.8" cy="634.4" r="1.03"/><circle cx="1247.7" cy="634.3" r="1.03"/><circle cx="1368.0" cy="634.2" r="1.04"/><circle cx="1360.2" cy="634.1" r="1.04"/><circle cx="1243.8" cy="633.7" r="1.04"/><circle cx="1309.8" cy="633.4" r="1.04"/><circle cx="1245.7" cy="633.3" r="1.04"/><circle cx="1336.9" cy="633.2" r="1.04"/><circle cx="1303.9" cy="633.2" r="1.04"/><circle cx="1212.8" cy="633.0" r="1.04"/><circle cx="1342.7" cy="632.8" r="1.05"/><circle cx="1284.5" cy="632.7" r="1.05"/><circle cx="1319.5" cy="632.7" r="1.05"/><circle cx="1342.7" cy="632.7" r="1.05"/><circle cx="1269.0" cy="632.6" r="1.05"/><circle cx="1201.1" cy="632.6" r="1.05"/><circle cx="1249.6" cy="632.4" r="1.05"/><circle cx="1294.2" cy="632.4" r="1.05"/><circle cx="1352.4" cy="632.4" r="1.05"/><circle cx="1255.4" cy="632.3" r="1.05"/><circle cx="1292.3" cy="632.1" r="1.05"/><circle cx="1325.3" cy="632.1" r="1.05"/><circle cx="1230.2" cy="632.0" r="1.05"/><circle cx="1346.6" cy="631.9" r="1.05"/><circle cx="1329.2" cy="631.8" r="1.05"/><circle cx="1317.5" cy="631.6" r="1.05"/><circle cx="1214.7" cy="631.5" r="1.06"/><circle cx="1199.2" cy="631.5" r="1.06"/><circle cx="1329.2" cy="631.4" r="1.06"/><circle cx="1356.3" cy="631.4" r="1.06"/><circle cx="1218.6" cy="631.2" r="1.06"/><circle cx="1321.4" cy="631.1" r="1.06"/><circle cx="1255.4" cy="631.1" r="1.06"/><circle cx="1224.4" cy="631.1" r="1.06"/><circle cx="1278.7" cy="631.0" r="1.06"/><circle cx="1305.9" cy="631.0" r="1.06"/><circle cx="1274.8" cy="630.8" r="1.06"/><circle cx="1265.1" cy="630.7" r="1.06"/><circle cx="1348.6" cy="630.6" r="1.06"/><circle cx="1261.3" cy="630.3" r="1.06"/><circle cx="1350.5" cy="630.3" r="1.06"/><circle cx="1327.2" cy="630.2" r="1.07"/><circle cx="1335.0" cy="630.1" r="1.07"/><circle cx="1317.5" cy="630.1" r="1.07"/><circle cx="1251.6" cy="630.0" r="1.07"/><circle cx="1307.8" cy="629.9" r="1.07"/><circle cx="1348.6" cy="629.8" r="1.07"/><circle cx="1348.6" cy="629.7" r="1.07"/><circle cx="1333.0" cy="629.6" r="1.07"/><circle cx="1183.7" cy="629.6" r="1.07"/><circle cx="1269.0" cy="629.6" r="1.07"/><circle cx="1317.5" cy="629.4" r="1.07"/><circle cx="1302.0" cy="629.2" r="1.07"/><circle cx="1331.1" cy="629.1" r="1.07"/><circle cx="1327.2" cy="629.1" r="1.07"/><circle cx="1193.4" cy="628.7" r="1.08"/><circle cx="1269.0" cy="628.7" r="1.08"/><circle cx="1315.6" cy="628.5" r="1.08"/><circle cx="1218.6" cy="628.5" r="1.08"/><circle cx="1282.6" cy="628.4" r="1.08"/><circle cx="1338.9" cy="628.3" r="1.08"/><circle cx="1267.1" cy="628.2" r="1.08"/><circle cx="1329.2" cy="628.1" r="1.08"/><circle cx="1300.1" cy="628.0" r="1.08"/><circle cx="1296.2" cy="628.0" r="1.08"/><circle cx="1315.6" cy="627.9" r="1.08"/><circle cx="1342.7" cy="627.8" r="1.08"/><circle cx="1189.5" cy="627.8" r="1.08"/><circle cx="1251.6" cy="627.8" r="1.08"/><circle cx="1203.1" cy="627.6" r="1.08"/><circle cx="1360.2" cy="627.6" r="1.09"/><circle cx="1321.4" cy="627.5" r="1.09"/><circle cx="1323.3" cy="627.5" r="1.09"/><circle cx="1307.8" cy="627.5" r="1.09"/><circle cx="1329.2" cy="627.5" r="1.09"/><circle cx="1338.9" cy="627.4" r="1.09"/><circle cx="1305.9" cy="627.4" r="1.09"/><circle cx="1212.8" cy="627.3" r="1.09"/><circle cx="1335.0" cy="627.3" r="1.09"/><circle cx="1302.0" cy="627.1" r="1.09"/><circle cx="1315.6" cy="627.1" r="1.09"/><circle cx="1195.3" cy="627.0" r="1.09"/><circle cx="1255.4" cy="627.0" r="1.09"/><circle cx="1305.9" cy="627.0" r="1.09"/><circle cx="1305.9" cy="627.0" r="1.09"/><circle cx="1226.3" cy="626.8" r="1.09"/><circle cx="1325.3" cy="626.6" r="1.09"/><circle cx="1333.0" cy="626.6" r="1.09"/><circle cx="1342.7" cy="626.6" r="1.09"/><circle cx="1255.4" cy="626.6" r="1.09"/><circle cx="1344.7" cy="626.5" r="1.09"/><circle cx="1278.7" cy="626.5" r="1.09"/><circle cx="1280.7" cy="626.5" r="1.09"/><circle cx="1346.6" cy="626.4" r="1.09"/><circle cx="1338.9" cy="626.4" r="1.09"/><circle cx="1249.6" cy="626.3" r="1.09"/><circle cx="1307.8" cy="626.2" r="1.10"/><circle cx="1344.7" cy="626.1" r="1.10"/><circle cx="1214.7" cy="626.0" r="1.10"/><circle cx="1344.7" cy="625.9" r="1.10"/><circle cx="1307.8" cy="625.9" r="1.10"/><circle cx="1284.5" cy="625.9" r="1.10"/><circle cx="1325.3" cy="625.8" r="1.10"/><circle cx="1253.5" cy="625.7" r="1.10"/><circle cx="1352.4" cy="625.7" r="1.10"/><circle cx="1267.1" cy="625.6" r="1.10"/><circle cx="1342.7" cy="625.5" r="1.10"/><circle cx="1214.7" cy="625.5" r="1.10"/><circle cx="1267.1" cy="625.4" r="1.10"/><circle cx="1348.6" cy="625.3" r="1.10"/><circle cx="1305.9" cy="625.2" r="1.10"/><circle cx="1218.6" cy="625.1" r="1.10"/><circle cx="1216.6" cy="625.0" r="1.10"/><circle cx="1274.8" cy="624.9" r="1.11"/><circle cx="1325.3" cy="624.8" r="1.11"/><circle cx="1311.7" cy="624.8" r="1.11"/><circle cx="1338.9" cy="624.6" r="1.11"/><circle cx="1284.5" cy="624.5" r="1.11"/><circle cx="1300.1" cy="624.4" r="1.11"/><circle cx="1329.2" cy="624.4" r="1.11"/><circle cx="1342.7" cy="624.3" r="1.11"/><circle cx="1344.7" cy="624.3" r="1.11"/><circle cx="1342.7" cy="624.1" r="1.11"/><circle cx="1284.5" cy="623.9" r="1.11"/><circle cx="1340.8" cy="623.8" r="1.11"/><circle cx="1319.5" cy="623.8" r="1.11"/><circle cx="1290.4" cy="623.7" r="1.11"/><circle cx="1340.8" cy="623.4" r="1.12"/><circle cx="1309.8" cy="623.4" r="1.12"/><circle cx="1342.7" cy="623.3" r="1.12"/><circle cx="1294.2" cy="623.2" r="1.12"/><circle cx="1336.9" cy="623.1" r="1.12"/><circle cx="1292.3" cy="622.9" r="1.12"/><circle cx="1208.9" cy="622.6" r="1.12"/><circle cx="1286.5" cy="622.6" r="1.12"/><circle cx="1356.3" cy="622.5" r="1.12"/><circle cx="1286.5" cy="622.5" r="1.12"/><circle cx="1280.7" cy="622.4" r="1.12"/><circle cx="1348.6" cy="622.4" r="1.12"/><circle cx="1362.1" cy="622.3" r="1.13"/><circle cx="1263.2" cy="622.3" r="1.13"/><circle cx="1311.7" cy="622.2" r="1.13"/><circle cx="1321.4" cy="622.1" r="1.13"/><circle cx="1321.4" cy="621.8" r="1.13"/><circle cx="1317.5" cy="621.5" r="1.13"/><circle cx="1286.5" cy="621.5" r="1.13"/><circle cx="1336.9" cy="621.5" r="1.13"/><circle cx="1335.0" cy="621.5" r="1.13"/><circle cx="1278.7" cy="621.3" r="1.13"/><circle cx="1307.8" cy="621.3" r="1.13"/><circle cx="1238.0" cy="621.1" r="1.13"/><circle cx="1311.7" cy="621.1" r="1.13"/><circle cx="1336.9" cy="621.0" r="1.14"/><circle cx="1335.0" cy="620.9" r="1.14"/><circle cx="1350.5" cy="620.7" r="1.14"/><circle cx="1253.5" cy="620.6" r="1.14"/><circle cx="1230.2" cy="620.5" r="1.14"/><circle cx="1311.7" cy="620.5" r="1.14"/><circle cx="1313.6" cy="620.5" r="1.14"/><circle cx="1259.3" cy="620.4" r="1.14"/><circle cx="1224.4" cy="620.2" r="1.14"/><circle cx="1305.9" cy="620.2" r="1.14"/><circle cx="1335.0" cy="620.2" r="1.14"/><circle cx="1313.6" cy="620.2" r="1.14"/><circle cx="1286.5" cy="620.1" r="1.14"/><circle cx="1222.5" cy="620.0" r="1.14"/><circle cx="1321.4" cy="620.0" r="1.14"/><circle cx="1177.8" cy="620.0" r="1.14"/><circle cx="1303.9" cy="619.8" r="1.14"/><circle cx="1286.5" cy="619.7" r="1.15"/><circle cx="1348.6" cy="619.7" r="1.15"/><circle cx="1181.7" cy="619.4" r="1.15"/><circle cx="1247.7" cy="619.3" r="1.15"/><circle cx="1336.9" cy="619.3" r="1.15"/><circle cx="1251.6" cy="619.2" r="1.15"/><circle cx="1344.7" cy="619.2" r="1.15"/><circle cx="1269.0" cy="619.2" r="1.15"/><circle cx="1243.8" cy="619.2" r="1.15"/><circle cx="1331.1" cy="619.2" r="1.15"/><circle cx="1368.0" cy="618.7" r="1.15"/><circle cx="1336.9" cy="618.4" r="1.15"/><circle cx="1342.7" cy="618.4" r="1.16"/><circle cx="1302.0" cy="618.2" r="1.16"/><circle cx="1300.1" cy="618.1" r="1.16"/><circle cx="1274.8" cy="618.1" r="1.16"/><circle cx="1263.2" cy="618.0" r="1.16"/><circle cx="1336.9" cy="618.0" r="1.16"/><circle cx="1327.2" cy="617.6" r="1.16"/><circle cx="1331.1" cy="617.5" r="1.16"/><circle cx="1236.0" cy="617.2" r="1.16"/><circle cx="1267.1" cy="617.2" r="1.16"/><circle cx="1335.0" cy="616.5" r="1.17"/><circle cx="1175.9" cy="616.2" r="1.17"/><circle cx="1255.4" cy="616.1" r="1.17"/><circle cx="1348.6" cy="616.0" r="1.17"/><circle cx="1251.6" cy="615.9" r="1.17"/><circle cx="1338.9" cy="615.5" r="1.18"/><circle cx="1267.1" cy="615.4" r="1.18"/><circle cx="1319.5" cy="615.4" r="1.18"/><circle cx="1288.4" cy="615.3" r="1.18"/><circle cx="1319.5" cy="615.2" r="1.18"/><circle cx="1286.5" cy="615.2" r="1.18"/><circle cx="1338.9" cy="615.2" r="1.18"/><circle cx="1278.7" cy="615.2" r="1.18"/><circle cx="1315.6" cy="615.0" r="1.18"/><circle cx="1203.1" cy="615.0" r="1.18"/><circle cx="1203.1" cy="614.6" r="1.18"/><circle cx="1272.9" cy="614.3" r="1.19"/><circle cx="1241.9" cy="614.2" r="1.19"/><circle cx="1228.3" cy="614.2" r="1.19"/><circle cx="1241.9" cy="614.0" r="1.19"/><circle cx="1302.0" cy="614.0" r="1.19"/><circle cx="1303.9" cy="613.7" r="1.19"/><circle cx="1199.2" cy="613.7" r="1.19"/><circle cx="1315.6" cy="613.5" r="1.19"/><circle cx="1257.4" cy="613.5" r="1.19"/><circle cx="1230.2" cy="613.5" r="1.19"/><circle cx="1300.1" cy="613.4" r="1.19"/><circle cx="1274.8" cy="613.0" r="1.20"/><circle cx="1224.4" cy="612.8" r="1.20"/><circle cx="1265.1" cy="612.8" r="1.20"/><circle cx="1327.2" cy="612.7" r="1.20"/><circle cx="1241.9" cy="612.5" r="1.20"/><circle cx="1269.0" cy="612.4" r="1.20"/><circle cx="1336.9" cy="612.4" r="1.20"/><circle cx="1216.6" cy="612.4" r="1.20"/><circle cx="1305.9" cy="611.9" r="1.20"/><circle cx="1344.7" cy="611.8" r="1.20"/><circle cx="1298.1" cy="611.8" r="1.21"/><circle cx="1336.9" cy="611.7" r="1.21"/><circle cx="1319.5" cy="611.6" r="1.21"/><circle cx="1348.6" cy="611.6" r="1.21"/><circle cx="1317.5" cy="611.4" r="1.21"/><circle cx="1238.0" cy="611.2" r="1.21"/><circle cx="1342.7" cy="610.9" r="1.21"/><circle cx="1331.1" cy="610.9" r="1.21"/><circle cx="1234.1" cy="610.8" r="1.21"/><circle cx="1335.0" cy="610.7" r="1.21"/><circle cx="1323.3" cy="610.7" r="1.21"/><circle cx="1346.6" cy="610.6" r="1.21"/><circle cx="1302.0" cy="610.6" r="1.21"/><circle cx="1267.1" cy="610.4" r="1.22"/><circle cx="1228.3" cy="610.3" r="1.22"/><circle cx="1276.8" cy="610.0" r="1.22"/><circle cx="1336.9" cy="610.0" r="1.22"/><circle cx="1348.6" cy="609.9" r="1.22"/><circle cx="1342.7" cy="609.9" r="1.22"/><circle cx="1335.0" cy="609.9" r="1.22"/><circle cx="1333.0" cy="609.8" r="1.22"/><circle cx="1280.7" cy="609.6" r="1.22"/><circle cx="1335.0" cy="609.5" r="1.22"/><circle cx="1288.4" cy="609.2" r="1.22"/><circle cx="1253.5" cy="609.1" r="1.23"/><circle cx="1335.0" cy="609.1" r="1.23"/><circle cx="1236.0" cy="609.0" r="1.23"/><circle cx="1331.1" cy="608.9" r="1.23"/><circle cx="1307.8" cy="608.9" r="1.23"/><circle cx="1340.8" cy="608.9" r="1.23"/><circle cx="1325.3" cy="608.8" r="1.23"/><circle cx="1323.3" cy="608.6" r="1.23"/><circle cx="1243.8" cy="608.3" r="1.23"/><circle cx="1206.9" cy="608.3" r="1.23"/><circle cx="1342.7" cy="608.2" r="1.23"/><circle cx="1174.0" cy="608.1" r="1.23"/><circle cx="1335.0" cy="608.0" r="1.23"/><circle cx="1286.5" cy="608.0" r="1.23"/><circle cx="1327.2" cy="607.8" r="1.24"/><circle cx="1317.5" cy="607.8" r="1.24"/><circle cx="1346.6" cy="607.7" r="1.24"/><circle cx="1300.1" cy="607.6" r="1.24"/><circle cx="1340.8" cy="607.5" r="1.24"/><circle cx="1228.3" cy="607.5" r="1.24"/><circle cx="1276.8" cy="607.4" r="1.24"/><circle cx="1267.1" cy="607.3" r="1.24"/><circle cx="1263.2" cy="607.2" r="1.24"/><circle cx="1166.2" cy="607.2" r="1.24"/><circle cx="1325.3" cy="607.1" r="1.24"/><circle cx="1284.5" cy="606.7" r="1.24"/><circle cx="1336.9" cy="606.5" r="1.25"/><circle cx="1234.1" cy="606.3" r="1.25"/><circle cx="1329.2" cy="606.2" r="1.25"/><circle cx="1327.2" cy="606.1" r="1.25"/><circle cx="1313.6" cy="606.1" r="1.25"/><circle cx="1323.3" cy="606.0" r="1.25"/><circle cx="1253.5" cy="605.9" r="1.25"/><circle cx="1232.2" cy="605.9" r="1.25"/><circle cx="1329.2" cy="605.9" r="1.25"/><circle cx="1333.0" cy="605.6" r="1.25"/><circle cx="1313.6" cy="605.5" r="1.25"/><circle cx="1253.5" cy="605.4" r="1.25"/><circle cx="1272.9" cy="605.4" r="1.25"/><circle cx="1230.2" cy="605.1" r="1.26"/><circle cx="1319.5" cy="605.0" r="1.26"/><circle cx="1241.9" cy="604.9" r="1.26"/><circle cx="1309.8" cy="604.8" r="1.26"/><circle cx="1253.5" cy="604.8" r="1.26"/><circle cx="1271.0" cy="604.3" r="1.26"/><circle cx="1311.7" cy="604.2" r="1.26"/><circle cx="1313.6" cy="604.1" r="1.26"/><circle cx="1218.6" cy="603.9" r="1.26"/><circle cx="1259.3" cy="603.9" r="1.27"/><circle cx="1267.1" cy="603.8" r="1.27"/><circle cx="1239.9" cy="603.8" r="1.27"/><circle cx="1265.1" cy="603.7" r="1.27"/><circle cx="1238.0" cy="603.6" r="1.27"/><circle cx="1309.8" cy="603.5" r="1.27"/><circle cx="1333.0" cy="603.5" r="1.27"/><circle cx="1309.8" cy="603.4" r="1.27"/><circle cx="1336.9" cy="603.4" r="1.27"/><circle cx="1261.3" cy="603.2" r="1.27"/><circle cx="1317.5" cy="603.2" r="1.27"/><circle cx="1274.8" cy="603.0" r="1.27"/><circle cx="1158.4" cy="602.9" r="1.27"/><circle cx="1327.2" cy="602.9" r="1.27"/><circle cx="1325.3" cy="602.9" r="1.27"/><circle cx="1210.8" cy="602.5" r="1.28"/><circle cx="1296.2" cy="602.5" r="1.28"/><circle cx="1319.5" cy="602.4" r="1.28"/><circle cx="1317.5" cy="602.4" r="1.28"/><circle cx="1333.0" cy="602.3" r="1.28"/><circle cx="1278.7" cy="602.3" r="1.28"/><circle cx="1315.6" cy="602.3" r="1.28"/><circle cx="1311.7" cy="602.2" r="1.28"/><circle cx="1245.7" cy="602.1" r="1.28"/><circle cx="1325.3" cy="602.1" r="1.28"/><circle cx="1325.3" cy="602.0" r="1.28"/><circle cx="1238.0" cy="601.9" r="1.28"/><circle cx="1302.0" cy="601.9" r="1.28"/><circle cx="1323.3" cy="601.8" r="1.28"/><circle cx="1298.1" cy="601.4" r="1.28"/><circle cx="1251.6" cy="601.4" r="1.28"/><circle cx="1234.1" cy="601.4" r="1.28"/><circle cx="1303.9" cy="601.4" r="1.28"/><circle cx="1257.4" cy="601.3" r="1.29"/><circle cx="1208.9" cy="601.2" r="1.29"/><circle cx="1294.2" cy="601.1" r="1.29"/><circle cx="1329.2" cy="601.0" r="1.29"/><circle cx="1336.9" cy="600.8" r="1.29"/><circle cx="1276.8" cy="600.8" r="1.29"/><circle cx="1224.4" cy="600.6" r="1.29"/><circle cx="1259.3" cy="600.6" r="1.29"/><circle cx="1333.0" cy="600.6" r="1.29"/><circle cx="1329.2" cy="600.5" r="1.29"/><circle cx="1243.8" cy="600.4" r="1.29"/><circle cx="1329.2" cy="600.4" r="1.29"/><circle cx="1296.2" cy="600.2" r="1.29"/><circle cx="1327.2" cy="600.2" r="1.29"/><circle cx="1317.5" cy="600.1" r="1.29"/><circle cx="1245.7" cy="599.9" r="1.30"/><circle cx="1247.7" cy="599.7" r="1.30"/><circle cx="1195.3" cy="599.5" r="1.30"/><circle cx="1236.0" cy="599.5" r="1.30"/><circle cx="1327.2" cy="599.5" r="1.30"/><circle cx="1232.2" cy="599.4" r="1.30"/><circle cx="1303.9" cy="599.4" r="1.30"/><circle cx="1300.1" cy="599.4" r="1.30"/><circle cx="1251.6" cy="599.2" r="1.30"/><circle cx="1222.5" cy="599.2" r="1.30"/><circle cx="1220.5" cy="599.1" r="1.30"/><circle cx="1303.9" cy="599.0" r="1.30"/><circle cx="1193.4" cy="599.0" r="1.30"/><circle cx="1298.1" cy="598.9" r="1.30"/><circle cx="1241.9" cy="598.9" r="1.30"/><circle cx="1272.9" cy="598.9" r="1.30"/><circle cx="1271.0" cy="598.8" r="1.30"/><circle cx="1305.9" cy="598.8" r="1.30"/><circle cx="1333.0" cy="598.8" r="1.30"/><circle cx="1319.5" cy="598.7" r="1.30"/><circle cx="1327.2" cy="598.7" r="1.30"/><circle cx="1284.5" cy="598.6" r="1.31"/><circle cx="1309.8" cy="598.4" r="1.31"/><circle cx="1333.0" cy="598.4" r="1.31"/><circle cx="1290.4" cy="598.2" r="1.31"/><circle cx="1236.0" cy="598.1" r="1.31"/><circle cx="1238.0" cy="598.0" r="1.31"/><circle cx="1338.9" cy="597.8" r="1.31"/><circle cx="1321.4" cy="597.8" r="1.31"/><circle cx="1271.0" cy="597.7" r="1.31"/><circle cx="1319.5" cy="597.6" r="1.31"/><circle cx="1333.0" cy="597.5" r="1.31"/><circle cx="1249.6" cy="597.4" r="1.31"/><circle cx="1241.9" cy="597.4" r="1.31"/><circle cx="1294.2" cy="597.0" r="1.32"/><circle cx="1261.3" cy="597.0" r="1.32"/><circle cx="1300.1" cy="597.0" r="1.32"/><circle cx="1241.9" cy="596.8" r="1.32"/><circle cx="1271.0" cy="596.8" r="1.32"/><circle cx="1243.8" cy="596.6" r="1.32"/><circle cx="1309.8" cy="596.5" r="1.32"/><circle cx="1302.0" cy="596.4" r="1.32"/><circle cx="1333.0" cy="596.2" r="1.32"/><circle cx="1303.9" cy="596.2" r="1.32"/><circle cx="1276.8" cy="596.1" r="1.32"/><circle cx="1296.2" cy="596.0" r="1.32"/><circle cx="1278.7" cy="595.9" r="1.33"/><circle cx="1331.1" cy="595.8" r="1.33"/><circle cx="1170.1" cy="595.8" r="1.33"/><circle cx="1220.5" cy="595.6" r="1.33"/><circle cx="1305.9" cy="595.5" r="1.33"/><circle cx="1327.2" cy="595.5" r="1.33"/><circle cx="1263.2" cy="595.5" r="1.33"/><circle cx="1170.1" cy="595.5" r="1.33"/><circle cx="1220.5" cy="595.5" r="1.33"/><circle cx="1325.3" cy="595.4" r="1.33"/><circle cx="1323.3" cy="595.4" r="1.33"/><circle cx="1290.4" cy="595.4" r="1.33"/><circle cx="1224.4" cy="595.4" r="1.33"/><circle cx="1292.3" cy="595.4" r="1.33"/><circle cx="1203.1" cy="595.2" r="1.33"/><circle cx="1216.6" cy="595.0" r="1.33"/><circle cx="1276.8" cy="594.8" r="1.33"/><circle cx="1313.6" cy="594.7" r="1.33"/><circle cx="1338.9" cy="594.7" r="1.33"/><circle cx="1321.4" cy="594.6" r="1.34"/><circle cx="1228.3" cy="594.5" r="1.34"/><circle cx="1263.2" cy="594.5" r="1.34"/><circle cx="1191.4" cy="594.3" r="1.34"/><circle cx="1282.6" cy="594.2" r="1.34"/><circle cx="1218.6" cy="594.2" r="1.34"/><circle cx="1292.3" cy="594.2" r="1.34"/><circle cx="1241.9" cy="594.1" r="1.34"/><circle cx="1325.3" cy="593.7" r="1.34"/><circle cx="1294.2" cy="593.6" r="1.34"/><circle cx="1154.6" cy="593.5" r="1.34"/><circle cx="1245.7" cy="593.5" r="1.34"/><circle cx="1340.8" cy="593.4" r="1.34"/><circle cx="1307.8" cy="593.3" r="1.35"/><circle cx="1222.5" cy="593.3" r="1.35"/><circle cx="1319.5" cy="593.2" r="1.35"/><circle cx="1329.2" cy="593.2" r="1.35"/><circle cx="1218.6" cy="593.1" r="1.35"/><circle cx="1317.5" cy="592.9" r="1.35"/><circle cx="1331.1" cy="592.9" r="1.35"/><circle cx="1317.5" cy="592.9" r="1.35"/><circle cx="1222.5" cy="592.9" r="1.35"/><circle cx="1311.7" cy="592.9" r="1.35"/><circle cx="1331.1" cy="592.6" r="1.35"/><circle cx="1278.7" cy="592.5" r="1.35"/><circle cx="1288.4" cy="592.3" r="1.35"/><circle cx="1212.8" cy="592.3" r="1.35"/><circle cx="1243.8" cy="592.3" r="1.35"/><circle cx="1321.4" cy="592.1" r="1.35"/><circle cx="1197.2" cy="592.0" r="1.36"/><circle cx="1247.7" cy="591.9" r="1.36"/><circle cx="1191.4" cy="591.8" r="1.36"/><circle cx="1342.7" cy="591.8" r="1.36"/><circle cx="1342.7" cy="591.7" r="1.36"/><circle cx="1208.9" cy="591.6" r="1.36"/><circle cx="1228.3" cy="591.6" r="1.36"/><circle cx="1205.0" cy="591.3" r="1.36"/><circle cx="1255.4" cy="591.3" r="1.36"/><circle cx="1249.6" cy="591.2" r="1.36"/><circle cx="1327.2" cy="591.1" r="1.36"/><circle cx="1323.3" cy="591.0" r="1.36"/><circle cx="1263.2" cy="590.8" r="1.36"/><circle cx="1333.0" cy="590.8" r="1.36"/><circle cx="1255.4" cy="590.7" r="1.36"/><circle cx="1263.2" cy="590.7" r="1.37"/><circle cx="1354.4" cy="590.6" r="1.37"/><circle cx="1307.8" cy="590.6" r="1.37"/><circle cx="1274.8" cy="590.5" r="1.37"/><circle cx="1335.0" cy="590.4" r="1.37"/><circle cx="1152.6" cy="590.4" r="1.37"/><circle cx="1335.0" cy="590.0" r="1.37"/><circle cx="1336.9" cy="590.0" r="1.37"/><circle cx="1265.1" cy="589.8" r="1.37"/><circle cx="1296.2" cy="589.7" r="1.37"/><circle cx="1305.9" cy="589.7" r="1.37"/><circle cx="1212.8" cy="589.6" r="1.37"/><circle cx="1216.6" cy="589.3" r="1.38"/><circle cx="1228.3" cy="589.2" r="1.38"/><circle cx="1245.7" cy="589.2" r="1.38"/><circle cx="1325.3" cy="589.1" r="1.38"/><circle cx="1239.9" cy="589.0" r="1.38"/><circle cx="1282.6" cy="588.9" r="1.38"/><circle cx="1236.0" cy="588.9" r="1.38"/><circle cx="1327.2" cy="588.6" r="1.38"/><circle cx="1302.0" cy="588.6" r="1.38"/><circle cx="1284.5" cy="588.5" r="1.38"/><circle cx="1309.8" cy="588.5" r="1.38"/><circle cx="1154.6" cy="588.5" r="1.38"/><circle cx="1177.8" cy="588.4" r="1.38"/><circle cx="1206.9" cy="588.4" r="1.38"/><circle cx="1305.9" cy="588.4" r="1.38"/><circle cx="1199.2" cy="588.3" r="1.38"/><circle cx="1323.3" cy="588.3" r="1.38"/><circle cx="1230.2" cy="588.3" r="1.38"/><circle cx="1220.5" cy="588.2" r="1.38"/><circle cx="1298.1" cy="588.1" r="1.38"/><circle cx="1346.6" cy="588.1" r="1.38"/><circle cx="1251.6" cy="587.9" r="1.39"/><circle cx="1187.5" cy="587.9" r="1.39"/><circle cx="1325.3" cy="587.8" r="1.39"/><circle cx="1321.4" cy="587.7" r="1.39"/><circle cx="1271.0" cy="587.7" r="1.39"/><circle cx="1187.5" cy="587.6" r="1.39"/><circle cx="1305.9" cy="587.5" r="1.39"/><circle cx="1247.7" cy="587.5" r="1.39"/><circle cx="1150.7" cy="587.5" r="1.39"/><circle cx="1222.5" cy="587.4" r="1.39"/><circle cx="1168.1" cy="587.3" r="1.39"/><circle cx="1298.1" cy="587.2" r="1.39"/><circle cx="1319.5" cy="587.1" r="1.39"/><circle cx="1212.8" cy="587.1" r="1.39"/><circle cx="1303.9" cy="586.9" r="1.39"/><circle cx="1284.5" cy="586.7" r="1.40"/><circle cx="1205.0" cy="586.7" r="1.40"/><circle cx="1305.9" cy="586.6" r="1.40"/><circle cx="1234.1" cy="586.4" r="1.40"/><circle cx="1288.4" cy="586.4" r="1.40"/><circle cx="1298.1" cy="586.2" r="1.40"/><circle cx="1302.0" cy="586.2" r="1.40"/><circle cx="1197.2" cy="586.2" r="1.40"/><circle cx="1247.7" cy="586.1" r="1.40"/><circle cx="1313.6" cy="586.1" r="1.40"/><circle cx="1245.7" cy="586.0" r="1.40"/><circle cx="1333.0" cy="585.9" r="1.40"/><circle cx="1224.4" cy="585.8" r="1.40"/><circle cx="1305.9" cy="585.6" r="1.40"/><circle cx="1267.1" cy="585.5" r="1.40"/><circle cx="1274.8" cy="585.5" r="1.40"/><circle cx="1232.2" cy="585.4" r="1.41"/><circle cx="1253.5" cy="585.2" r="1.41"/><circle cx="1284.5" cy="585.0" r="1.41"/><circle cx="1298.1" cy="584.8" r="1.41"/><circle cx="1315.6" cy="584.7" r="1.41"/><circle cx="1309.8" cy="584.6" r="1.41"/><circle cx="1302.0" cy="584.6" r="1.41"/><circle cx="1265.1" cy="584.5" r="1.41"/><circle cx="1325.3" cy="584.3" r="1.41"/><circle cx="1276.8" cy="584.3" r="1.41"/><circle cx="1284.5" cy="584.2" r="1.41"/><circle cx="1232.2" cy="584.2" r="1.41"/><circle cx="1286.5" cy="584.2" r="1.41"/><circle cx="1302.0" cy="584.1" r="1.42"/><circle cx="1323.3" cy="584.1" r="1.42"/><circle cx="1321.4" cy="583.9" r="1.42"/><circle cx="1263.2" cy="583.9" r="1.42"/><circle cx="1172.0" cy="583.9" r="1.42"/><circle cx="1199.2" cy="583.7" r="1.42"/><circle cx="1255.4" cy="583.6" r="1.42"/><circle cx="1241.9" cy="583.6" r="1.42"/><circle cx="1239.9" cy="583.5" r="1.42"/><circle cx="1197.2" cy="583.5" r="1.42"/><circle cx="1158.4" cy="583.4" r="1.42"/><circle cx="1261.3" cy="583.3" r="1.42"/><circle cx="1305.9" cy="583.2" r="1.42"/><circle cx="1278.7" cy="583.2" r="1.42"/><circle cx="1313.6" cy="583.1" r="1.42"/><circle cx="1187.5" cy="582.8" r="1.43"/><circle cx="1257.4" cy="582.7" r="1.43"/><circle cx="1309.8" cy="582.6" r="1.43"/><circle cx="1317.5" cy="582.4" r="1.43"/><circle cx="1247.7" cy="582.2" r="1.43"/><circle cx="1286.5" cy="582.2" r="1.43"/><circle cx="1259.3" cy="582.1" r="1.43"/><circle cx="1174.0" cy="582.1" r="1.43"/><circle cx="1243.8" cy="582.0" r="1.43"/><circle cx="1245.7" cy="582.0" r="1.43"/><circle cx="1166.2" cy="581.9" r="1.43"/><circle cx="1290.4" cy="581.7" r="1.43"/><circle cx="1247.7" cy="581.7" r="1.43"/><circle cx="1228.3" cy="581.6" r="1.43"/><circle cx="1292.3" cy="581.6" r="1.43"/><circle cx="1327.2" cy="581.6" r="1.43"/><circle cx="1303.9" cy="581.6" r="1.43"/><circle cx="1241.9" cy="581.6" r="1.43"/><circle cx="1325.3" cy="581.6" r="1.43"/><circle cx="1185.6" cy="581.6" r="1.43"/><circle cx="1170.1" cy="581.5" r="1.43"/><circle cx="1333.0" cy="581.5" r="1.44"/><circle cx="1274.8" cy="581.5" r="1.44"/><circle cx="1296.2" cy="581.5" r="1.44"/><circle cx="1303.9" cy="581.4" r="1.44"/><circle cx="1232.2" cy="581.4" r="1.44"/><circle cx="1261.3" cy="581.3" r="1.44"/><circle cx="1276.8" cy="581.2" r="1.44"/><circle cx="1335.0" cy="581.2" r="1.44"/><circle cx="1305.9" cy="581.0" r="1.44"/><circle cx="1298.1" cy="580.9" r="1.44"/><circle cx="1251.6" cy="580.6" r="1.44"/><circle cx="1333.0" cy="580.5" r="1.44"/><circle cx="1208.9" cy="580.4" r="1.44"/><circle cx="1208.9" cy="580.3" r="1.44"/><circle cx="1286.5" cy="580.3" r="1.44"/><circle cx="1317.5" cy="579.9" r="1.45"/><circle cx="1251.6" cy="579.7" r="1.45"/><circle cx="1243.8" cy="579.7" r="1.45"/><circle cx="1218.6" cy="579.6" r="1.45"/><circle cx="1311.7" cy="579.4" r="1.45"/><circle cx="1175.9" cy="579.4" r="1.45"/><circle cx="1274.8" cy="579.3" r="1.45"/><circle cx="1344.7" cy="579.2" r="1.45"/><circle cx="1335.0" cy="579.2" r="1.45"/><circle cx="1224.4" cy="579.1" r="1.45"/><circle cx="1311.7" cy="579.0" r="1.45"/><circle cx="1210.8" cy="578.8" r="1.46"/><circle cx="1185.6" cy="578.8" r="1.46"/><circle cx="1317.5" cy="578.7" r="1.46"/><circle cx="1243.8" cy="578.6" r="1.46"/><circle cx="1278.7" cy="578.6" r="1.46"/><circle cx="1197.2" cy="578.6" r="1.46"/><circle cx="1245.7" cy="578.3" r="1.46"/><circle cx="1321.4" cy="578.2" r="1.46"/><circle cx="1344.7" cy="578.1" r="1.46"/><circle cx="1232.2" cy="578.0" r="1.46"/><circle cx="1236.0" cy="577.9" r="1.46"/><circle cx="1241.9" cy="577.8" r="1.46"/><circle cx="1199.2" cy="577.7" r="1.46"/><circle cx="1129.3" cy="577.7" r="1.46"/><circle cx="1193.4" cy="577.6" r="1.46"/><circle cx="1191.4" cy="577.6" r="1.46"/><circle cx="1315.6" cy="577.6" r="1.46"/><circle cx="1218.6" cy="577.3" r="1.47"/><circle cx="1294.2" cy="577.2" r="1.47"/><circle cx="1271.0" cy="577.1" r="1.47"/><circle cx="1315.6" cy="577.1" r="1.47"/><circle cx="1313.6" cy="577.1" r="1.47"/><circle cx="1249.6" cy="577.0" r="1.47"/><circle cx="1317.5" cy="577.0" r="1.47"/><circle cx="1294.2" cy="577.0" r="1.47"/><circle cx="1305.9" cy="577.0" r="1.47"/><circle cx="1164.3" cy="577.0" r="1.47"/><circle cx="1206.9" cy="576.8" r="1.47"/><circle cx="1300.1" cy="576.7" r="1.47"/><circle cx="1259.3" cy="576.7" r="1.47"/><circle cx="1249.6" cy="576.6" r="1.47"/><circle cx="1222.5" cy="576.5" r="1.47"/><circle cx="1253.5" cy="576.5" r="1.47"/><circle cx="1214.7" cy="576.5" r="1.47"/><circle cx="1315.6" cy="576.3" r="1.47"/><circle cx="1243.8" cy="576.3" r="1.47"/><circle cx="1325.3" cy="576.3" r="1.47"/><circle cx="1319.5" cy="576.3" r="1.47"/><circle cx="1317.5" cy="576.3" r="1.47"/><circle cx="1315.6" cy="576.2" r="1.47"/><circle cx="1199.2" cy="576.2" r="1.48"/><circle cx="1302.0" cy="576.2" r="1.48"/><circle cx="1282.6" cy="575.9" r="1.48"/><circle cx="1265.1" cy="575.9" r="1.48"/><circle cx="1210.8" cy="575.9" r="1.48"/><circle cx="1302.0" cy="575.6" r="1.48"/><circle cx="1313.6" cy="575.6" r="1.48"/><circle cx="1317.5" cy="575.5" r="1.48"/><circle cx="1319.5" cy="575.5" r="1.48"/><circle cx="1321.4" cy="575.4" r="1.48"/><circle cx="1265.1" cy="575.1" r="1.48"/><circle cx="1232.2" cy="575.1" r="1.48"/><circle cx="1280.7" cy="574.9" r="1.49"/><circle cx="1319.5" cy="574.8" r="1.49"/><circle cx="1241.9" cy="574.7" r="1.49"/><circle cx="1166.2" cy="574.6" r="1.49"/><circle cx="1269.0" cy="574.6" r="1.49"/><circle cx="1317.5" cy="574.5" r="1.49"/><circle cx="1303.9" cy="574.5" r="1.49"/><circle cx="1298.1" cy="574.2" r="1.49"/><circle cx="1222.5" cy="574.1" r="1.49"/><circle cx="1317.5" cy="573.9" r="1.49"/><circle cx="1243.8" cy="573.9" r="1.49"/><circle cx="1214.7" cy="573.8" r="1.49"/><circle cx="1300.1" cy="573.7" r="1.49"/><circle cx="1321.4" cy="573.6" r="1.50"/><circle cx="1309.8" cy="573.5" r="1.50"/><circle cx="1315.6" cy="573.4" r="1.50"/><circle cx="1249.6" cy="573.2" r="1.50"/><circle cx="1197.2" cy="573.0" r="1.50"/><circle cx="1323.3" cy="572.8" r="1.50"/><circle cx="1212.8" cy="572.5" r="1.50"/><circle cx="1234.1" cy="572.5" r="1.50"/><circle cx="1253.5" cy="572.5" r="1.50"/><circle cx="1156.5" cy="572.4" r="1.50"/><circle cx="1255.4" cy="572.4" r="1.50"/><circle cx="1195.3" cy="572.3" r="1.50"/><circle cx="1210.8" cy="572.3" r="1.50"/><circle cx="1327.2" cy="572.3" r="1.51"/><circle cx="1203.1" cy="572.2" r="1.51"/><circle cx="1187.5" cy="572.2" r="1.51"/><circle cx="1257.4" cy="572.1" r="1.51"/><circle cx="1199.2" cy="572.1" r="1.51"/><circle cx="1315.6" cy="572.0" r="1.51"/><circle cx="1329.2" cy="572.0" r="1.51"/><circle cx="1255.4" cy="572.0" r="1.51"/><circle cx="1282.6" cy="572.0" r="1.51"/><circle cx="1307.8" cy="572.0" r="1.51"/><circle cx="1224.4" cy="571.7" r="1.51"/><circle cx="1294.2" cy="571.5" r="1.51"/><circle cx="1261.3" cy="571.4" r="1.51"/><circle cx="1257.4" cy="571.4" r="1.51"/><circle cx="1311.7" cy="570.9" r="1.52"/><circle cx="1317.5" cy="570.8" r="1.52"/><circle cx="1205.0" cy="570.8" r="1.52"/><circle cx="1216.6" cy="570.7" r="1.52"/><circle cx="1228.3" cy="570.7" r="1.52"/><circle cx="1315.6" cy="570.6" r="1.52"/><circle cx="1294.2" cy="570.5" r="1.52"/><circle cx="1241.9" cy="570.5" r="1.52"/><circle cx="1179.8" cy="570.2" r="1.52"/><circle cx="1185.6" cy="570.1" r="1.52"/><circle cx="1325.3" cy="569.9" r="1.52"/><circle cx="1302.0" cy="569.9" r="1.52"/><circle cx="1288.4" cy="569.9" r="1.52"/><circle cx="1309.8" cy="569.8" r="1.52"/><circle cx="1150.7" cy="569.6" r="1.53"/><circle cx="1238.0" cy="569.6" r="1.53"/><circle cx="1269.0" cy="569.4" r="1.53"/><circle cx="1315.6" cy="569.4" r="1.53"/><circle cx="1245.7" cy="569.3" r="1.53"/><circle cx="1216.6" cy="569.3" r="1.53"/><circle cx="1292.3" cy="569.2" r="1.53"/><circle cx="1319.5" cy="569.1" r="1.53"/><circle cx="1265.1" cy="569.1" r="1.53"/><circle cx="1197.2" cy="569.1" r="1.53"/><circle cx="1241.9" cy="569.1" r="1.53"/><circle cx="1139.0" cy="568.9" r="1.53"/><circle cx="1325.3" cy="568.8" r="1.53"/><circle cx="1137.1" cy="568.8" r="1.53"/><circle cx="1327.2" cy="568.7" r="1.53"/><circle cx="1212.8" cy="568.7" r="1.53"/><circle cx="1255.4" cy="568.6" r="1.53"/><circle cx="1286.5" cy="568.6" r="1.53"/><circle cx="1305.9" cy="568.5" r="1.53"/><circle cx="1305.9" cy="568.5" r="1.53"/><circle cx="1228.3" cy="568.4" r="1.53"/><circle cx="1311.7" cy="568.3" r="1.54"/><circle cx="1276.8" cy="568.3" r="1.54"/><circle cx="1305.9" cy="568.2" r="1.54"/><circle cx="1313.6" cy="568.1" r="1.54"/><circle cx="1216.6" cy="568.1" r="1.54"/><circle cx="1239.9" cy="567.9" r="1.54"/><circle cx="1280.7" cy="567.8" r="1.54"/><circle cx="1292.3" cy="567.7" r="1.54"/><circle cx="1272.9" cy="567.7" r="1.54"/><circle cx="1307.8" cy="567.6" r="1.54"/><circle cx="1313.6" cy="567.5" r="1.54"/><circle cx="1206.9" cy="567.5" r="1.54"/><circle cx="1309.8" cy="567.4" r="1.54"/><circle cx="1325.3" cy="567.4" r="1.54"/><circle cx="1265.1" cy="567.2" r="1.54"/><circle cx="1272.9" cy="567.2" r="1.54"/><circle cx="1220.5" cy="567.1" r="1.54"/><circle cx="1203.1" cy="567.0" r="1.54"/><circle cx="1282.6" cy="566.9" r="1.55"/><circle cx="1251.6" cy="566.8" r="1.55"/><circle cx="1303.9" cy="566.8" r="1.55"/><circle cx="1323.3" cy="566.7" r="1.55"/><circle cx="1311.7" cy="566.6" r="1.55"/><circle cx="1319.5" cy="566.5" r="1.55"/><circle cx="1236.0" cy="566.4" r="1.55"/><circle cx="1170.1" cy="566.4" r="1.55"/><circle cx="1307.8" cy="566.3" r="1.55"/><circle cx="1323.3" cy="566.2" r="1.55"/><circle cx="1220.5" cy="565.9" r="1.55"/><circle cx="1210.8" cy="565.9" r="1.55"/><circle cx="1181.7" cy="565.9" r="1.55"/><circle cx="1327.2" cy="565.8" r="1.55"/><circle cx="1288.4" cy="565.7" r="1.56"/><circle cx="1195.3" cy="565.4" r="1.56"/><circle cx="1305.9" cy="565.4" r="1.56"/><circle cx="1313.6" cy="565.2" r="1.56"/><circle cx="1278.7" cy="565.2" r="1.56"/><circle cx="1238.0" cy="565.1" r="1.56"/><circle cx="1282.6" cy="565.0" r="1.56"/><circle cx="1152.6" cy="564.9" r="1.56"/><circle cx="1315.6" cy="564.9" r="1.56"/><circle cx="1307.8" cy="564.8" r="1.56"/><circle cx="1309.8" cy="564.8" r="1.56"/><circle cx="1280.7" cy="564.7" r="1.56"/><circle cx="1325.3" cy="564.6" r="1.56"/><circle cx="1247.7" cy="564.5" r="1.56"/><circle cx="1303.9" cy="564.5" r="1.56"/><circle cx="1290.4" cy="564.3" r="1.57"/><circle cx="1280.7" cy="564.3" r="1.57"/><circle cx="1139.0" cy="564.3" r="1.57"/><circle cx="1257.4" cy="564.2" r="1.57"/><circle cx="1205.0" cy="563.9" r="1.57"/><circle cx="1303.9" cy="563.9" r="1.57"/><circle cx="1286.5" cy="563.8" r="1.57"/><circle cx="1317.5" cy="563.8" r="1.57"/><circle cx="1313.6" cy="563.6" r="1.57"/><circle cx="1241.9" cy="563.2" r="1.57"/><circle cx="1224.4" cy="563.1" r="1.57"/><circle cx="1158.4" cy="562.9" r="1.58"/><circle cx="1302.0" cy="562.9" r="1.58"/><circle cx="1296.2" cy="562.8" r="1.58"/><circle cx="1311.7" cy="562.7" r="1.58"/><circle cx="1305.9" cy="562.5" r="1.58"/><circle cx="1269.0" cy="562.5" r="1.58"/><circle cx="1317.5" cy="562.4" r="1.58"/><circle cx="1243.8" cy="562.4" r="1.58"/><circle cx="1111.9" cy="562.4" r="1.58"/><circle cx="1141.0" cy="562.3" r="1.58"/><circle cx="1298.1" cy="562.3" r="1.58"/><circle cx="1247.7" cy="562.1" r="1.58"/><circle cx="1278.7" cy="562.0" r="1.58"/><circle cx="1253.5" cy="562.0" r="1.58"/><circle cx="1236.0" cy="562.0" r="1.58"/><circle cx="1210.8" cy="561.7" r="1.58"/><circle cx="1224.4" cy="561.6" r="1.59"/><circle cx="1309.8" cy="561.5" r="1.59"/><circle cx="1259.3" cy="561.5" r="1.59"/><circle cx="1205.0" cy="561.5" r="1.59"/><circle cx="1251.6" cy="561.2" r="1.59"/><circle cx="1191.4" cy="561.2" r="1.59"/><circle cx="1274.8" cy="560.8" r="1.59"/><circle cx="1247.7" cy="560.7" r="1.59"/><circle cx="1166.2" cy="560.7" r="1.59"/><circle cx="1162.3" cy="560.7" r="1.59"/><circle cx="1216.6" cy="560.6" r="1.59"/><circle cx="1288.4" cy="560.6" r="1.59"/><circle cx="1199.2" cy="560.6" r="1.59"/><circle cx="1255.4" cy="560.5" r="1.59"/><circle cx="1302.0" cy="560.5" r="1.59"/><circle cx="1267.1" cy="560.4" r="1.59"/><circle cx="1267.1" cy="560.3" r="1.60"/><circle cx="1174.0" cy="560.2" r="1.60"/><circle cx="1212.8" cy="560.1" r="1.60"/><circle cx="1300.1" cy="560.0" r="1.60"/><circle cx="1315.6" cy="560.0" r="1.60"/><circle cx="1243.8" cy="559.9" r="1.60"/><circle cx="1307.8" cy="559.5" r="1.60"/><circle cx="1321.4" cy="559.5" r="1.60"/><circle cx="1278.7" cy="559.3" r="1.60"/><circle cx="1302.0" cy="559.3" r="1.60"/><circle cx="1170.1" cy="559.2" r="1.60"/><circle cx="1286.5" cy="559.2" r="1.60"/><circle cx="1292.3" cy="559.2" r="1.60"/><circle cx="1234.1" cy="559.0" r="1.61"/><circle cx="1311.7" cy="559.0" r="1.61"/><circle cx="1265.1" cy="559.0" r="1.61"/><circle cx="1300.1" cy="558.9" r="1.61"/><circle cx="1261.3" cy="558.6" r="1.61"/><circle cx="1292.3" cy="558.6" r="1.61"/><circle cx="1303.9" cy="558.5" r="1.61"/><circle cx="1323.3" cy="558.5" r="1.61"/><circle cx="1280.7" cy="558.4" r="1.61"/><circle cx="1296.2" cy="558.2" r="1.61"/><circle cx="1331.1" cy="558.2" r="1.61"/><circle cx="1278.7" cy="558.1" r="1.61"/><circle cx="1296.2" cy="557.9" r="1.61"/><circle cx="1212.8" cy="557.9" r="1.61"/><circle cx="1323.3" cy="557.8" r="1.61"/><circle cx="1305.9" cy="557.6" r="1.62"/><circle cx="1259.3" cy="557.4" r="1.62"/><circle cx="1315.6" cy="557.4" r="1.62"/><circle cx="1313.6" cy="557.2" r="1.62"/><circle cx="1263.2" cy="557.2" r="1.62"/><circle cx="1336.9" cy="557.1" r="1.62"/><circle cx="1243.8" cy="557.1" r="1.62"/><circle cx="1311.7" cy="557.0" r="1.62"/><circle cx="1327.2" cy="557.0" r="1.62"/><circle cx="1305.9" cy="556.9" r="1.62"/><circle cx="1255.4" cy="556.8" r="1.62"/><circle cx="1174.0" cy="556.8" r="1.62"/><circle cx="1210.8" cy="556.7" r="1.62"/><circle cx="1298.1" cy="556.5" r="1.63"/><circle cx="1201.1" cy="556.4" r="1.63"/><circle cx="1319.5" cy="556.4" r="1.63"/><circle cx="1303.9" cy="556.2" r="1.63"/><circle cx="1269.0" cy="556.1" r="1.63"/><circle cx="1234.1" cy="556.0" r="1.63"/><circle cx="1245.7" cy="555.9" r="1.63"/><circle cx="1294.2" cy="555.6" r="1.63"/><circle cx="1278.7" cy="555.6" r="1.63"/><circle cx="1218.6" cy="555.5" r="1.63"/><circle cx="1274.8" cy="555.1" r="1.64"/><circle cx="1222.5" cy="555.0" r="1.64"/><circle cx="1292.3" cy="554.9" r="1.64"/><circle cx="1249.6" cy="554.8" r="1.64"/><circle cx="1290.4" cy="554.5" r="1.64"/><circle cx="1257.4" cy="554.2" r="1.64"/><circle cx="1181.7" cy="554.2" r="1.64"/><circle cx="1267.1" cy="554.1" r="1.64"/><circle cx="1185.6" cy="554.0" r="1.64"/><circle cx="1313.6" cy="553.8" r="1.65"/><circle cx="1216.6" cy="553.7" r="1.65"/><circle cx="1216.6" cy="553.7" r="1.65"/><circle cx="1210.8" cy="553.6" r="1.65"/><circle cx="1302.0" cy="553.5" r="1.65"/><circle cx="1321.4" cy="553.3" r="1.65"/><circle cx="1265.1" cy="553.2" r="1.65"/><circle cx="1290.4" cy="553.2" r="1.65"/><circle cx="1276.8" cy="553.0" r="1.65"/><circle cx="1294.2" cy="552.9" r="1.65"/><circle cx="1220.5" cy="552.9" r="1.65"/><circle cx="1239.9" cy="552.9" r="1.65"/><circle cx="1234.1" cy="552.9" r="1.65"/><circle cx="1333.0" cy="552.8" r="1.65"/><circle cx="1263.2" cy="552.7" r="1.65"/><circle cx="1303.9" cy="552.7" r="1.65"/><circle cx="1323.3" cy="552.7" r="1.65"/><circle cx="1267.1" cy="552.7" r="1.65"/><circle cx="1232.2" cy="552.5" r="1.65"/><circle cx="1205.0" cy="552.5" r="1.65"/><circle cx="1300.1" cy="552.5" r="1.66"/><circle cx="1300.1" cy="552.3" r="1.66"/><circle cx="1205.0" cy="552.3" r="1.66"/><circle cx="1274.8" cy="552.2" r="1.66"/><circle cx="1302.0" cy="552.2" r="1.66"/><circle cx="1305.9" cy="552.1" r="1.66"/><circle cx="1255.4" cy="551.9" r="1.66"/><circle cx="1234.1" cy="551.9" r="1.66"/><circle cx="1241.9" cy="551.9" r="1.66"/><circle cx="1253.5" cy="551.8" r="1.66"/><circle cx="1247.7" cy="551.8" r="1.66"/><circle cx="1189.5" cy="551.7" r="1.66"/><circle cx="1187.5" cy="551.7" r="1.66"/><circle cx="1251.6" cy="551.7" r="1.66"/><circle cx="1313.6" cy="551.7" r="1.66"/><circle cx="1265.1" cy="551.7" r="1.66"/><circle cx="1319.5" cy="551.6" r="1.66"/><circle cx="1309.8" cy="551.6" r="1.66"/><circle cx="1156.5" cy="551.6" r="1.66"/><circle cx="1276.8" cy="551.3" r="1.66"/><circle cx="1239.9" cy="551.3" r="1.66"/><circle cx="1232.2" cy="551.3" r="1.66"/><circle cx="1305.9" cy="551.3" r="1.66"/><circle cx="1238.0" cy="551.2" r="1.67"/><circle cx="1228.3" cy="551.1" r="1.67"/><circle cx="1331.1" cy="551.1" r="1.67"/><circle cx="1300.1" cy="551.0" r="1.67"/><circle cx="1296.2" cy="550.8" r="1.67"/><circle cx="1170.1" cy="550.8" r="1.67"/><circle cx="1206.9" cy="550.8" r="1.67"/><circle cx="1307.8" cy="550.7" r="1.67"/><circle cx="1255.4" cy="550.6" r="1.67"/><circle cx="1276.8" cy="550.5" r="1.67"/><circle cx="1195.3" cy="550.5" r="1.67"/><circle cx="1294.2" cy="550.4" r="1.67"/><circle cx="1319.5" cy="550.4" r="1.67"/><circle cx="1131.3" cy="550.3" r="1.67"/><circle cx="1286.5" cy="550.2" r="1.67"/><circle cx="1294.2" cy="550.2" r="1.67"/><circle cx="1255.4" cy="550.1" r="1.67"/><circle cx="1135.2" cy="550.0" r="1.67"/><circle cx="1309.8" cy="550.0" r="1.67"/><circle cx="1305.9" cy="549.7" r="1.68"/><circle cx="1249.6" cy="549.7" r="1.68"/><circle cx="1238.0" cy="549.7" r="1.68"/><circle cx="1305.9" cy="549.6" r="1.68"/><circle cx="1261.3" cy="549.6" r="1.68"/><circle cx="1298.1" cy="549.6" r="1.68"/><circle cx="1267.1" cy="549.5" r="1.68"/><circle cx="1224.4" cy="549.3" r="1.68"/><circle cx="1152.6" cy="549.2" r="1.68"/><circle cx="1335.0" cy="549.1" r="1.68"/><circle cx="1272.9" cy="549.0" r="1.68"/><circle cx="1160.4" cy="549.0" r="1.68"/><circle cx="1137.1" cy="548.9" r="1.68"/><circle cx="1193.4" cy="548.8" r="1.68"/><circle cx="1168.1" cy="548.8" r="1.68"/><circle cx="1156.5" cy="548.6" r="1.68"/><circle cx="1300.1" cy="548.6" r="1.68"/><circle cx="1303.9" cy="548.5" r="1.69"/><circle cx="1210.8" cy="548.5" r="1.69"/><circle cx="1238.0" cy="548.3" r="1.69"/><circle cx="1331.1" cy="548.3" r="1.69"/><circle cx="1309.8" cy="548.2" r="1.69"/><circle cx="1249.6" cy="548.1" r="1.69"/><circle cx="1263.2" cy="548.1" r="1.69"/><circle cx="1321.4" cy="548.1" r="1.69"/><circle cx="1220.5" cy="548.0" r="1.69"/><circle cx="1305.9" cy="547.9" r="1.69"/><circle cx="1300.1" cy="547.8" r="1.69"/><circle cx="1278.7" cy="547.8" r="1.69"/><circle cx="1179.8" cy="547.7" r="1.69"/><circle cx="1160.4" cy="547.6" r="1.69"/><circle cx="1294.2" cy="547.5" r="1.69"/><circle cx="1181.7" cy="547.5" r="1.69"/><circle cx="1274.8" cy="547.3" r="1.69"/><circle cx="1164.3" cy="547.1" r="1.70"/><circle cx="1247.7" cy="547.0" r="1.70"/><circle cx="1238.0" cy="547.0" r="1.70"/><circle cx="1302.0" cy="546.9" r="1.70"/><circle cx="1214.7" cy="546.8" r="1.70"/><circle cx="1282.6" cy="546.8" r="1.70"/><circle cx="1321.4" cy="546.8" r="1.70"/><circle cx="1317.5" cy="546.8" r="1.70"/><circle cx="1294.2" cy="546.6" r="1.70"/><circle cx="1294.2" cy="546.6" r="1.70"/><circle cx="1179.8" cy="546.5" r="1.70"/><circle cx="1239.9" cy="546.5" r="1.70"/><circle cx="1185.6" cy="546.4" r="1.70"/><circle cx="1317.5" cy="546.4" r="1.70"/><circle cx="1325.3" cy="546.4" r="1.70"/><circle cx="1238.0" cy="546.3" r="1.70"/><circle cx="1284.5" cy="546.1" r="1.70"/><circle cx="1148.7" cy="546.1" r="1.70"/><circle cx="1298.1" cy="546.0" r="1.70"/><circle cx="1302.0" cy="546.0" r="1.70"/><circle cx="1170.1" cy="545.9" r="1.71"/><circle cx="1280.7" cy="545.7" r="1.71"/><circle cx="1302.0" cy="545.7" r="1.71"/><circle cx="1247.7" cy="545.6" r="1.71"/><circle cx="1300.1" cy="545.4" r="1.71"/><circle cx="1197.2" cy="545.4" r="1.71"/><circle cx="1292.3" cy="545.1" r="1.71"/><circle cx="1298.1" cy="545.1" r="1.71"/><circle cx="1307.8" cy="545.0" r="1.71"/><circle cx="1298.1" cy="544.9" r="1.71"/><circle cx="1205.0" cy="544.7" r="1.71"/><circle cx="1315.6" cy="544.7" r="1.71"/><circle cx="1294.2" cy="544.7" r="1.71"/><circle cx="1284.5" cy="544.6" r="1.72"/><circle cx="1234.1" cy="544.6" r="1.72"/><circle cx="1296.2" cy="544.5" r="1.72"/><circle cx="1307.8" cy="544.5" r="1.72"/><circle cx="1249.6" cy="544.5" r="1.72"/><circle cx="1298.1" cy="544.3" r="1.72"/><circle cx="1302.0" cy="544.3" r="1.72"/><circle cx="1294.2" cy="544.3" r="1.72"/><circle cx="1307.8" cy="544.3" r="1.72"/><circle cx="1294.2" cy="544.2" r="1.72"/><circle cx="1307.8" cy="544.1" r="1.72"/><circle cx="1302.0" cy="544.1" r="1.72"/><circle cx="1274.8" cy="544.1" r="1.72"/><circle cx="1261.3" cy="544.1" r="1.72"/><circle cx="1259.3" cy="544.1" r="1.72"/><circle cx="1274.8" cy="544.0" r="1.72"/><circle cx="1302.0" cy="544.0" r="1.72"/><circle cx="1329.2" cy="543.9" r="1.72"/><circle cx="1300.1" cy="543.9" r="1.72"/><circle cx="1288.4" cy="543.8" r="1.72"/><circle cx="1296.2" cy="543.7" r="1.72"/><circle cx="1315.6" cy="543.6" r="1.72"/><circle cx="1302.0" cy="543.4" r="1.72"/><circle cx="1175.9" cy="543.3" r="1.73"/><circle cx="1317.5" cy="543.2" r="1.73"/><circle cx="1174.0" cy="543.1" r="1.73"/><circle cx="1172.0" cy="543.1" r="1.73"/><circle cx="1218.6" cy="543.1" r="1.73"/><circle cx="1300.1" cy="543.0" r="1.73"/><circle cx="1226.3" cy="542.9" r="1.73"/><circle cx="1307.8" cy="542.9" r="1.73"/><circle cx="1271.0" cy="542.8" r="1.73"/><circle cx="1245.7" cy="542.7" r="1.73"/><circle cx="1137.1" cy="542.7" r="1.73"/><circle cx="1317.5" cy="542.6" r="1.73"/><circle cx="1294.2" cy="542.6" r="1.73"/><circle cx="1189.5" cy="542.5" r="1.73"/><circle cx="1286.5" cy="542.5" r="1.73"/><circle cx="1224.4" cy="542.4" r="1.73"/><circle cx="1280.7" cy="542.3" r="1.73"/><circle cx="1271.0" cy="542.3" r="1.73"/><circle cx="1247.7" cy="542.2" r="1.73"/><circle cx="1298.1" cy="542.2" r="1.73"/><circle cx="1177.8" cy="542.2" r="1.73"/><circle cx="1319.5" cy="542.2" r="1.73"/><circle cx="1284.5" cy="542.1" r="1.73"/><circle cx="1278.7" cy="542.1" r="1.73"/><circle cx="1236.0" cy="542.1" r="1.73"/><circle cx="1317.5" cy="542.0" r="1.73"/><circle cx="1288.4" cy="541.9" r="1.74"/><circle cx="1255.4" cy="541.8" r="1.74"/><circle cx="1210.8" cy="541.8" r="1.74"/><circle cx="1197.2" cy="541.8" r="1.74"/><circle cx="1303.9" cy="541.7" r="1.74"/><circle cx="1150.7" cy="541.5" r="1.74"/><circle cx="1160.4" cy="541.5" r="1.74"/><circle cx="1119.6" cy="541.4" r="1.74"/><circle cx="1170.1" cy="541.4" r="1.74"/><circle cx="1284.5" cy="541.0" r="1.74"/><circle cx="1269.0" cy="540.9" r="1.74"/><circle cx="1208.9" cy="540.8" r="1.74"/><circle cx="1245.7" cy="540.8" r="1.74"/><circle cx="1278.7" cy="540.8" r="1.74"/><circle cx="1175.9" cy="540.6" r="1.75"/><circle cx="1271.0" cy="540.5" r="1.75"/><circle cx="1222.5" cy="540.5" r="1.75"/><circle cx="1152.6" cy="540.4" r="1.75"/><circle cx="1162.3" cy="540.3" r="1.75"/><circle cx="1195.3" cy="540.1" r="1.75"/><circle cx="1174.0" cy="540.0" r="1.75"/><circle cx="1267.1" cy="540.0" r="1.75"/><circle cx="1298.1" cy="540.0" r="1.75"/><circle cx="1274.8" cy="539.9" r="1.75"/><circle cx="1216.6" cy="539.9" r="1.75"/><circle cx="1307.8" cy="539.8" r="1.75"/><circle cx="1150.7" cy="539.6" r="1.75"/><circle cx="1210.8" cy="539.5" r="1.75"/><circle cx="1232.2" cy="539.4" r="1.75"/><circle cx="1294.2" cy="539.4" r="1.75"/><circle cx="1172.0" cy="539.2" r="1.76"/><circle cx="1288.4" cy="539.2" r="1.76"/><circle cx="1236.0" cy="539.1" r="1.76"/><circle cx="1210.8" cy="539.1" r="1.76"/><circle cx="1154.6" cy="539.0" r="1.76"/><circle cx="1183.7" cy="539.0" r="1.76"/><circle cx="1269.0" cy="538.8" r="1.76"/><circle cx="1210.8" cy="538.8" r="1.76"/><circle cx="1251.6" cy="538.7" r="1.76"/><circle cx="1156.5" cy="538.6" r="1.76"/><circle cx="1253.5" cy="538.4" r="1.76"/><circle cx="1298.1" cy="538.4" r="1.76"/><circle cx="1298.1" cy="538.4" r="1.76"/><circle cx="1257.4" cy="538.4" r="1.76"/><circle cx="1292.3" cy="538.4" r="1.76"/><circle cx="1168.1" cy="538.3" r="1.76"/><circle cx="1179.8" cy="538.2" r="1.76"/><circle cx="1243.8" cy="538.2" r="1.76"/><circle cx="1280.7" cy="538.0" r="1.76"/><circle cx="1183.7" cy="537.8" r="1.77"/><circle cx="1212.8" cy="537.7" r="1.77"/><circle cx="1197.2" cy="537.5" r="1.77"/><circle cx="1294.2" cy="537.4" r="1.77"/><circle cx="1263.2" cy="537.4" r="1.77"/><circle cx="1234.1" cy="537.3" r="1.77"/><circle cx="1100.2" cy="537.2" r="1.77"/><circle cx="1296.2" cy="537.2" r="1.77"/><circle cx="1253.5" cy="537.2" r="1.77"/><circle cx="1247.7" cy="537.2" r="1.77"/><circle cx="1201.1" cy="537.1" r="1.77"/><circle cx="1216.6" cy="537.1" r="1.77"/><circle cx="1174.0" cy="536.8" r="1.77"/><circle cx="1208.9" cy="536.8" r="1.77"/><circle cx="1267.1" cy="536.7" r="1.77"/><circle cx="1280.7" cy="536.7" r="1.77"/><circle cx="1288.4" cy="536.6" r="1.78"/><circle cx="1185.6" cy="536.4" r="1.78"/><circle cx="1286.5" cy="536.0" r="1.78"/><circle cx="1296.2" cy="536.0" r="1.78"/><circle cx="1269.0" cy="535.8" r="1.78"/><circle cx="1313.6" cy="535.7" r="1.78"/><circle cx="1313.6" cy="535.7" r="1.78"/><circle cx="1292.3" cy="535.7" r="1.78"/><circle cx="1253.5" cy="535.4" r="1.78"/><circle cx="1259.3" cy="535.4" r="1.78"/><circle cx="1294.2" cy="535.3" r="1.79"/><circle cx="1313.6" cy="535.3" r="1.79"/><circle cx="1224.4" cy="535.1" r="1.79"/><circle cx="1290.4" cy="535.0" r="1.79"/><circle cx="1272.9" cy="534.9" r="1.79"/><circle cx="1271.0" cy="534.9" r="1.79"/><circle cx="1282.6" cy="534.9" r="1.79"/><circle cx="1296.2" cy="534.8" r="1.79"/><circle cx="1298.1" cy="534.7" r="1.79"/><circle cx="1216.6" cy="534.5" r="1.79"/><circle cx="1243.8" cy="534.5" r="1.79"/><circle cx="1290.4" cy="534.4" r="1.79"/><circle cx="1158.4" cy="534.3" r="1.79"/><circle cx="1255.4" cy="534.1" r="1.79"/><circle cx="1300.1" cy="534.1" r="1.79"/><circle cx="1123.5" cy="533.8" r="1.80"/><circle cx="1189.5" cy="533.8" r="1.80"/><circle cx="1305.9" cy="533.8" r="1.80"/><circle cx="1292.3" cy="533.8" r="1.80"/><circle cx="1278.7" cy="533.8" r="1.80"/><circle cx="1236.0" cy="533.7" r="1.80"/><circle cx="1269.0" cy="533.7" r="1.80"/><circle cx="1162.3" cy="533.6" r="1.80"/><circle cx="1267.1" cy="533.5" r="1.80"/><circle cx="1212.8" cy="533.1" r="1.80"/><circle cx="1239.9" cy="533.1" r="1.80"/><circle cx="1311.7" cy="532.7" r="1.81"/><circle cx="1282.6" cy="532.6" r="1.81"/><circle cx="1249.6" cy="532.4" r="1.81"/><circle cx="1189.5" cy="532.4" r="1.81"/><circle cx="1290.4" cy="532.4" r="1.81"/><circle cx="1298.1" cy="532.4" r="1.81"/><circle cx="1236.0" cy="532.3" r="1.81"/><circle cx="1177.8" cy="532.3" r="1.81"/><circle cx="1230.2" cy="532.3" r="1.81"/><circle cx="1179.8" cy="532.1" r="1.81"/><circle cx="1284.5" cy="532.1" r="1.81"/><circle cx="1292.3" cy="532.0" r="1.81"/><circle cx="1292.3" cy="532.0" r="1.81"/><circle cx="1292.3" cy="531.7" r="1.81"/><circle cx="1284.5" cy="531.7" r="1.81"/><circle cx="1185.6" cy="531.6" r="1.81"/><circle cx="1315.6" cy="531.6" r="1.81"/><circle cx="1255.4" cy="531.5" r="1.81"/><circle cx="1294.2" cy="531.4" r="1.81"/><circle cx="1280.7" cy="531.4" r="1.81"/><circle cx="1172.0" cy="531.3" r="1.82"/><circle cx="1189.5" cy="531.2" r="1.82"/><circle cx="1197.2" cy="531.2" r="1.82"/><circle cx="1170.1" cy="531.2" r="1.82"/><circle cx="1280.7" cy="531.2" r="1.82"/><circle cx="1302.0" cy="531.2" r="1.82"/><circle cx="1309.8" cy="531.2" r="1.82"/><circle cx="1317.5" cy="531.1" r="1.82"/><circle cx="1158.4" cy="531.1" r="1.82"/><circle cx="1251.6" cy="531.1" r="1.82"/><circle cx="1131.3" cy="531.0" r="1.82"/><circle cx="1243.8" cy="531.0" r="1.82"/><circle cx="1187.5" cy="530.7" r="1.82"/><circle cx="1292.3" cy="530.6" r="1.82"/><circle cx="1271.0" cy="530.6" r="1.82"/><circle cx="1154.6" cy="530.5" r="1.82"/><circle cx="1191.4" cy="530.4" r="1.82"/><circle cx="1300.1" cy="530.3" r="1.82"/><circle cx="1313.6" cy="530.3" r="1.82"/><circle cx="1292.3" cy="530.2" r="1.82"/><circle cx="1183.7" cy="530.2" r="1.82"/><circle cx="1276.8" cy="530.2" r="1.82"/><circle cx="1280.7" cy="529.9" r="1.83"/><circle cx="1179.8" cy="529.9" r="1.83"/><circle cx="1174.0" cy="529.7" r="1.83"/><circle cx="1239.9" cy="529.7" r="1.83"/><circle cx="1154.6" cy="529.5" r="1.83"/><circle cx="1276.8" cy="529.3" r="1.83"/><circle cx="1247.7" cy="529.3" r="1.83"/><circle cx="1181.7" cy="529.3" r="1.83"/><circle cx="1288.4" cy="529.1" r="1.83"/><circle cx="1311.7" cy="529.1" r="1.83"/><circle cx="1220.5" cy="529.0" r="1.83"/><circle cx="1210.8" cy="528.8" r="1.83"/><circle cx="1148.7" cy="528.8" r="1.84"/><circle cx="1166.2" cy="528.8" r="1.84"/><circle cx="1274.8" cy="528.7" r="1.84"/><circle cx="1294.2" cy="528.6" r="1.84"/><circle cx="1278.7" cy="528.5" r="1.84"/><circle cx="1298.1" cy="528.4" r="1.84"/><circle cx="1241.9" cy="528.4" r="1.84"/><circle cx="1302.0" cy="528.4" r="1.84"/><circle cx="1284.5" cy="528.3" r="1.84"/><circle cx="1216.6" cy="528.3" r="1.84"/><circle cx="1230.2" cy="528.2" r="1.84"/><circle cx="1284.5" cy="528.2" r="1.84"/><circle cx="1166.2" cy="528.1" r="1.84"/><circle cx="1296.2" cy="528.1" r="1.84"/><circle cx="1208.9" cy="528.0" r="1.84"/><circle cx="1294.2" cy="528.0" r="1.84"/><circle cx="1191.4" cy="527.9" r="1.84"/><circle cx="1236.0" cy="527.9" r="1.84"/><circle cx="1263.2" cy="527.9" r="1.84"/><circle cx="1323.3" cy="527.8" r="1.84"/><circle cx="1123.5" cy="527.8" r="1.84"/><circle cx="1239.9" cy="527.8" r="1.84"/><circle cx="1286.5" cy="527.7" r="1.84"/><circle cx="1218.6" cy="527.7" r="1.84"/><circle cx="1131.3" cy="527.6" r="1.84"/><circle cx="1284.5" cy="527.6" r="1.84"/><circle cx="1276.8" cy="527.5" r="1.84"/><circle cx="1259.3" cy="527.5" r="1.84"/><circle cx="1189.5" cy="527.5" r="1.84"/><circle cx="1288.4" cy="527.5" r="1.84"/><circle cx="1296.2" cy="527.5" r="1.85"/><circle cx="1226.3" cy="527.4" r="1.85"/><circle cx="1218.6" cy="527.4" r="1.85"/><circle cx="1296.2" cy="527.4" r="1.85"/><circle cx="1263.2" cy="527.2" r="1.85"/><circle cx="1139.0" cy="527.1" r="1.85"/><circle cx="1290.4" cy="527.1" r="1.85"/><circle cx="1238.0" cy="527.0" r="1.85"/><circle cx="1166.2" cy="527.0" r="1.85"/><circle cx="1172.0" cy="526.9" r="1.85"/><circle cx="1226.3" cy="526.9" r="1.85"/><circle cx="1292.3" cy="526.5" r="1.85"/><circle cx="1284.5" cy="526.5" r="1.85"/><circle cx="1276.8" cy="526.4" r="1.85"/><circle cx="1292.3" cy="526.2" r="1.85"/><circle cx="1206.9" cy="526.1" r="1.86"/><circle cx="1274.8" cy="526.0" r="1.86"/><circle cx="1160.4" cy="526.0" r="1.86"/><circle cx="1175.9" cy="525.9" r="1.86"/><circle cx="1269.0" cy="525.9" r="1.86"/><circle cx="1292.3" cy="525.8" r="1.86"/><circle cx="1205.0" cy="525.8" r="1.86"/><circle cx="1201.1" cy="525.6" r="1.86"/><circle cx="1160.4" cy="525.6" r="1.86"/><circle cx="1212.8" cy="525.5" r="1.86"/><circle cx="1154.6" cy="525.5" r="1.86"/><circle cx="1284.5" cy="525.5" r="1.86"/><circle cx="1269.0" cy="525.4" r="1.86"/><circle cx="1197.2" cy="525.2" r="1.86"/><circle cx="1131.3" cy="525.2" r="1.86"/><circle cx="1280.7" cy="525.2" r="1.86"/><circle cx="1294.2" cy="525.0" r="1.86"/><circle cx="1185.6" cy="524.9" r="1.86"/><circle cx="1278.7" cy="524.9" r="1.86"/><circle cx="1257.4" cy="524.6" r="1.87"/><circle cx="1220.5" cy="524.5" r="1.87"/><circle cx="1294.2" cy="524.5" r="1.87"/><circle cx="1263.2" cy="524.5" r="1.87"/><circle cx="1206.9" cy="524.4" r="1.87"/><circle cx="1236.0" cy="524.3" r="1.87"/><circle cx="1276.8" cy="524.3" r="1.87"/><circle cx="1271.0" cy="524.2" r="1.87"/><circle cx="1193.4" cy="524.1" r="1.87"/><circle cx="1284.5" cy="524.0" r="1.87"/><circle cx="1226.3" cy="524.0" r="1.87"/><circle cx="1249.6" cy="523.9" r="1.87"/><circle cx="1280.7" cy="523.8" r="1.87"/><circle cx="1280.7" cy="523.8" r="1.87"/><circle cx="1236.0" cy="523.7" r="1.87"/><circle cx="1290.4" cy="523.5" r="1.87"/><circle cx="1249.6" cy="523.4" r="1.88"/><circle cx="1183.7" cy="523.0" r="1.88"/><circle cx="1307.8" cy="522.8" r="1.88"/><circle cx="1228.3" cy="522.8" r="1.88"/><circle cx="1218.6" cy="522.8" r="1.88"/><circle cx="1113.8" cy="522.8" r="1.88"/><circle cx="1290.4" cy="522.7" r="1.88"/><circle cx="1261.3" cy="522.5" r="1.88"/><circle cx="1269.0" cy="522.4" r="1.88"/><circle cx="1253.5" cy="522.4" r="1.88"/><circle cx="1195.3" cy="522.3" r="1.88"/><circle cx="1187.5" cy="522.2" r="1.88"/><circle cx="1282.6" cy="522.2" r="1.88"/><circle cx="1162.3" cy="522.2" r="1.89"/><circle cx="1146.8" cy="522.0" r="1.89"/><circle cx="1257.4" cy="521.9" r="1.89"/><circle cx="1205.0" cy="521.9" r="1.89"/><circle cx="1284.5" cy="521.8" r="1.89"/><circle cx="1177.8" cy="521.8" r="1.89"/><circle cx="1271.0" cy="521.7" r="1.89"/><circle cx="1234.1" cy="521.7" r="1.89"/><circle cx="1280.7" cy="521.7" r="1.89"/><circle cx="1286.5" cy="521.6" r="1.89"/><circle cx="1255.4" cy="521.5" r="1.89"/><circle cx="1253.5" cy="521.5" r="1.89"/><circle cx="1319.5" cy="521.4" r="1.89"/><circle cx="1305.9" cy="521.3" r="1.89"/><circle cx="1269.0" cy="521.2" r="1.89"/><circle cx="1214.7" cy="521.2" r="1.89"/><circle cx="1224.4" cy="521.2" r="1.89"/><circle cx="1253.5" cy="521.2" r="1.89"/><circle cx="1177.8" cy="521.1" r="1.89"/><circle cx="1160.4" cy="521.0" r="1.89"/><circle cx="1272.9" cy="521.0" r="1.89"/><circle cx="1154.6" cy="521.0" r="1.89"/><circle cx="1309.8" cy="521.0" r="1.89"/><circle cx="1195.3" cy="520.9" r="1.89"/><circle cx="1141.0" cy="520.9" r="1.89"/><circle cx="1274.8" cy="520.9" r="1.89"/><circle cx="1257.4" cy="520.9" r="1.89"/><circle cx="1269.0" cy="520.9" r="1.89"/><circle cx="1271.0" cy="520.8" r="1.90"/><circle cx="1292.3" cy="520.8" r="1.90"/><circle cx="1212.8" cy="520.8" r="1.90"/><circle cx="1267.1" cy="520.7" r="1.90"/><circle cx="1164.3" cy="520.7" r="1.90"/><circle cx="1247.7" cy="520.6" r="1.90"/><circle cx="1206.9" cy="520.5" r="1.90"/><circle cx="1292.3" cy="520.4" r="1.90"/><circle cx="1300.1" cy="520.3" r="1.90"/><circle cx="1255.4" cy="520.2" r="1.90"/><circle cx="1206.9" cy="520.0" r="1.90"/><circle cx="1220.5" cy="520.0" r="1.90"/><circle cx="1300.1" cy="520.0" r="1.90"/><circle cx="1232.2" cy="519.9" r="1.90"/><circle cx="1294.2" cy="519.8" r="1.90"/><circle cx="1298.1" cy="519.8" r="1.90"/><circle cx="1234.1" cy="519.6" r="1.90"/><circle cx="1272.9" cy="519.6" r="1.91"/><circle cx="1274.8" cy="519.6" r="1.91"/><circle cx="1288.4" cy="519.4" r="1.91"/><circle cx="1230.2" cy="519.4" r="1.91"/><circle cx="1206.9" cy="519.3" r="1.91"/><circle cx="1288.4" cy="519.3" r="1.91"/><circle cx="1284.5" cy="519.2" r="1.91"/><circle cx="1189.5" cy="519.2" r="1.91"/><circle cx="1179.8" cy="519.1" r="1.91"/><circle cx="1309.8" cy="519.1" r="1.91"/><circle cx="1162.3" cy="519.1" r="1.91"/><circle cx="1189.5" cy="519.1" r="1.91"/><circle cx="1193.4" cy="519.0" r="1.91"/><circle cx="1175.9" cy="518.9" r="1.91"/><circle cx="1263.2" cy="518.8" r="1.91"/><circle cx="1195.3" cy="518.8" r="1.91"/><circle cx="1206.9" cy="518.6" r="1.91"/><circle cx="1267.1" cy="518.6" r="1.91"/><circle cx="1280.7" cy="518.6" r="1.91"/><circle cx="1284.5" cy="518.4" r="1.91"/><circle cx="1179.8" cy="518.4" r="1.91"/><circle cx="1162.3" cy="518.3" r="1.91"/><circle cx="1247.7" cy="518.3" r="1.91"/><circle cx="1230.2" cy="518.3" r="1.91"/><circle cx="1205.0" cy="518.3" r="1.91"/><circle cx="1212.8" cy="518.2" r="1.92"/><circle cx="1300.1" cy="518.1" r="1.92"/><circle cx="1135.2" cy="518.0" r="1.92"/><circle cx="1210.8" cy="517.9" r="1.92"/><circle cx="1152.6" cy="517.8" r="1.92"/><circle cx="1294.2" cy="517.8" r="1.92"/><circle cx="1243.8" cy="517.7" r="1.92"/><circle cx="1269.0" cy="517.6" r="1.92"/><circle cx="1271.0" cy="517.5" r="1.92"/><circle cx="1234.1" cy="517.5" r="1.92"/><circle cx="1317.5" cy="517.5" r="1.92"/><circle cx="1224.4" cy="517.5" r="1.92"/><circle cx="1172.0" cy="517.4" r="1.92"/><circle cx="1278.7" cy="517.4" r="1.92"/><circle cx="1274.8" cy="517.3" r="1.92"/><circle cx="1274.8" cy="517.3" r="1.92"/><circle cx="1210.8" cy="517.3" r="1.92"/><circle cx="1212.8" cy="517.3" r="1.92"/><circle cx="1251.6" cy="517.2" r="1.92"/><circle cx="1137.1" cy="517.1" r="1.92"/><circle cx="1249.6" cy="517.1" r="1.92"/><circle cx="1263.2" cy="517.1" r="1.92"/><circle cx="1111.9" cy="517.0" r="1.92"/><circle cx="1298.1" cy="516.9" r="1.93"/><circle cx="1197.2" cy="516.8" r="1.93"/><circle cx="1158.4" cy="516.8" r="1.93"/><circle cx="1238.0" cy="516.5" r="1.93"/><circle cx="1274.8" cy="516.5" r="1.93"/><circle cx="1271.0" cy="516.5" r="1.93"/><circle cx="1156.5" cy="516.4" r="1.93"/><circle cx="1251.6" cy="516.4" r="1.93"/><circle cx="1280.7" cy="516.3" r="1.93"/><circle cx="1263.2" cy="516.3" r="1.93"/><circle cx="1220.5" cy="516.2" r="1.93"/><circle cx="1272.9" cy="516.1" r="1.93"/><circle cx="1286.5" cy="516.0" r="1.93"/><circle cx="1253.5" cy="515.9" r="1.93"/><circle cx="1280.7" cy="515.9" r="1.93"/><circle cx="1199.2" cy="515.7" r="1.93"/><circle cx="1294.2" cy="515.7" r="1.93"/><circle cx="1193.4" cy="515.5" r="1.94"/><circle cx="1201.1" cy="515.3" r="1.94"/><circle cx="1164.3" cy="515.3" r="1.94"/><circle cx="1269.0" cy="515.3" r="1.94"/><circle cx="1203.1" cy="515.2" r="1.94"/><circle cx="1263.2" cy="515.1" r="1.94"/><circle cx="1298.1" cy="515.1" r="1.94"/><circle cx="1305.9" cy="515.0" r="1.94"/><circle cx="1269.0" cy="514.8" r="1.94"/><circle cx="1280.7" cy="514.8" r="1.94"/><circle cx="1286.5" cy="514.8" r="1.94"/><circle cx="1189.5" cy="514.7" r="1.94"/><circle cx="1168.1" cy="514.7" r="1.94"/><circle cx="1278.7" cy="514.7" r="1.94"/><circle cx="1280.7" cy="514.5" r="1.94"/><circle cx="1168.1" cy="514.4" r="1.94"/><circle cx="1152.6" cy="514.4" r="1.94"/><circle cx="1286.5" cy="514.2" r="1.95"/><circle cx="1100.2" cy="514.2" r="1.95"/><circle cx="1298.1" cy="514.2" r="1.95"/><circle cx="1146.8" cy="514.1" r="1.95"/><circle cx="1187.5" cy="514.0" r="1.95"/><circle cx="1305.9" cy="514.0" r="1.95"/><circle cx="1255.4" cy="513.9" r="1.95"/><circle cx="1282.6" cy="513.8" r="1.95"/><circle cx="1243.8" cy="513.7" r="1.95"/><circle cx="1263.2" cy="513.7" r="1.95"/><circle cx="1224.4" cy="513.7" r="1.95"/><circle cx="1280.7" cy="513.6" r="1.95"/><circle cx="1251.6" cy="513.6" r="1.95"/><circle cx="1261.3" cy="513.5" r="1.95"/><circle cx="1253.5" cy="513.4" r="1.95"/><circle cx="1150.7" cy="513.3" r="1.95"/><circle cx="1236.0" cy="513.1" r="1.95"/><circle cx="1230.2" cy="513.1" r="1.95"/><circle cx="1208.9" cy="513.0" r="1.95"/><circle cx="1269.0" cy="512.9" r="1.96"/><circle cx="1280.7" cy="512.9" r="1.96"/><circle cx="1156.5" cy="512.8" r="1.96"/><circle cx="1162.3" cy="512.8" r="1.96"/><circle cx="1208.9" cy="512.7" r="1.96"/><circle cx="1187.5" cy="512.7" r="1.96"/><circle cx="1276.8" cy="512.6" r="1.96"/><circle cx="1206.9" cy="512.6" r="1.96"/><circle cx="1269.0" cy="512.4" r="1.96"/><circle cx="1189.5" cy="512.4" r="1.96"/><circle cx="1234.1" cy="512.4" r="1.96"/><circle cx="1197.2" cy="512.2" r="1.96"/><circle cx="1158.4" cy="512.1" r="1.96"/><circle cx="1210.8" cy="512.0" r="1.96"/><circle cx="1197.2" cy="512.0" r="1.96"/><circle cx="1195.3" cy="512.0" r="1.96"/><circle cx="1269.0" cy="511.9" r="1.96"/><circle cx="1189.5" cy="511.9" r="1.96"/><circle cx="1267.1" cy="511.9" r="1.96"/><circle cx="1177.8" cy="511.7" r="1.96"/><circle cx="1205.0" cy="511.7" r="1.96"/><circle cx="1197.2" cy="511.7" r="1.96"/><circle cx="1261.3" cy="511.5" r="1.97"/><circle cx="1276.8" cy="511.4" r="1.97"/><circle cx="1218.6" cy="511.4" r="1.97"/><circle cx="1265.1" cy="511.4" r="1.97"/><circle cx="1263.2" cy="511.3" r="1.97"/><circle cx="1164.3" cy="511.3" r="1.97"/><circle cx="1230.2" cy="511.2" r="1.97"/><circle cx="1265.1" cy="511.2" r="1.97"/><circle cx="1189.5" cy="511.1" r="1.97"/><circle cx="1278.7" cy="511.1" r="1.97"/><circle cx="1222.5" cy="511.0" r="1.97"/><circle cx="1187.5" cy="510.9" r="1.97"/><circle cx="1265.1" cy="510.8" r="1.97"/><circle cx="1141.0" cy="510.7" r="1.97"/><circle cx="1232.2" cy="510.7" r="1.97"/><circle cx="1166.2" cy="510.7" r="1.97"/><circle cx="1269.0" cy="510.6" r="1.97"/><circle cx="1189.5" cy="510.6" r="1.97"/><circle cx="1267.1" cy="510.5" r="1.97"/><circle cx="1183.7" cy="510.4" r="1.97"/><circle cx="1181.7" cy="510.4" r="1.97"/><circle cx="1259.3" cy="510.2" r="1.98"/><circle cx="1284.5" cy="510.1" r="1.98"/><circle cx="1162.3" cy="510.1" r="1.98"/><circle cx="1179.8" cy="509.8" r="1.98"/><circle cx="1251.6" cy="509.8" r="1.98"/><circle cx="1296.2" cy="509.7" r="1.98"/><circle cx="1150.7" cy="509.7" r="1.98"/><circle cx="1307.8" cy="509.6" r="1.98"/><circle cx="1230.2" cy="509.6" r="1.98"/><circle cx="1135.2" cy="509.6" r="1.98"/><circle cx="1259.3" cy="509.6" r="1.98"/><circle cx="1290.4" cy="509.4" r="1.98"/><circle cx="1232.2" cy="509.3" r="1.98"/><circle cx="1247.7" cy="509.3" r="1.98"/><circle cx="1205.0" cy="509.3" r="1.98"/><circle cx="1243.8" cy="509.2" r="1.98"/><circle cx="1276.8" cy="509.2" r="1.98"/><circle cx="1259.3" cy="509.2" r="1.98"/><circle cx="1294.2" cy="509.1" r="1.98"/><circle cx="1265.1" cy="509.1" r="1.98"/><circle cx="1181.7" cy="509.1" r="1.98"/><circle cx="1206.9" cy="509.1" r="1.98"/><circle cx="1187.5" cy="509.0" r="1.98"/><circle cx="1257.4" cy="509.0" r="1.99"/><circle cx="1139.0" cy="509.0" r="1.99"/><circle cx="1269.0" cy="508.9" r="1.99"/><circle cx="1274.8" cy="508.8" r="1.99"/><circle cx="1278.7" cy="508.8" r="1.99"/><circle cx="1172.0" cy="508.8" r="1.99"/><circle cx="1144.9" cy="508.7" r="1.99"/><circle cx="1282.6" cy="508.7" r="1.99"/><circle cx="1263.2" cy="508.6" r="1.99"/><circle cx="1175.9" cy="508.5" r="1.99"/><circle cx="1247.7" cy="508.5" r="1.99"/><circle cx="1276.8" cy="508.5" r="1.99"/><circle cx="1218.6" cy="508.3" r="1.99"/><circle cx="1263.2" cy="508.2" r="1.99"/><circle cx="1212.8" cy="508.1" r="1.99"/><circle cx="1201.1" cy="508.1" r="1.99"/><circle cx="1255.4" cy="508.0" r="1.99"/><circle cx="1129.3" cy="507.8" r="1.99"/><circle cx="1276.8" cy="507.8" r="1.99"/><circle cx="1272.9" cy="507.6" r="2.00"/><circle cx="1208.9" cy="507.4" r="2.00"/><circle cx="1208.9" cy="507.3" r="2.00"/><circle cx="1274.8" cy="507.2" r="2.00"/><circle cx="1284.5" cy="507.1" r="2.00"/><circle cx="1206.9" cy="507.1" r="2.00"/><circle cx="1288.4" cy="507.0" r="2.00"/><circle cx="1276.8" cy="506.8" r="2.00"/><circle cx="1280.7" cy="506.8" r="2.00"/><circle cx="1228.3" cy="506.5" r="2.00"/><circle cx="1259.3" cy="506.5" r="2.00"/><circle cx="1226.3" cy="506.4" r="2.00"/><circle cx="1294.2" cy="506.3" r="2.01"/><circle cx="1251.6" cy="506.3" r="2.01"/><circle cx="1162.3" cy="506.2" r="2.01"/><circle cx="1154.6" cy="506.1" r="2.01"/><circle cx="1197.2" cy="506.1" r="2.01"/><circle cx="1271.0" cy="506.1" r="2.01"/><circle cx="1267.1" cy="506.0" r="2.01"/><circle cx="1280.7" cy="506.0" r="2.01"/><circle cx="1255.4" cy="506.0" r="2.01"/><circle cx="1271.0" cy="505.8" r="2.01"/><circle cx="1174.0" cy="505.8" r="2.01"/><circle cx="1251.6" cy="505.6" r="2.01"/><circle cx="1290.4" cy="505.6" r="2.01"/><circle cx="1247.7" cy="505.5" r="2.01"/><circle cx="1302.0" cy="505.4" r="2.01"/><circle cx="1284.5" cy="505.4" r="2.01"/><circle cx="1168.1" cy="505.3" r="2.01"/><circle cx="1286.5" cy="505.3" r="2.01"/><circle cx="1183.7" cy="505.3" r="2.01"/><circle cx="1274.8" cy="505.3" r="2.01"/><circle cx="1274.8" cy="505.3" r="2.01"/><circle cx="1271.0" cy="505.2" r="2.01"/><circle cx="1220.5" cy="505.1" r="2.01"/><circle cx="1142.9" cy="505.1" r="2.01"/><circle cx="1269.0" cy="505.0" r="2.02"/><circle cx="1183.7" cy="504.9" r="2.02"/><circle cx="1158.4" cy="504.9" r="2.02"/><circle cx="1253.5" cy="504.9" r="2.02"/><circle cx="1247.7" cy="504.7" r="2.02"/><circle cx="1238.0" cy="504.7" r="2.02"/><circle cx="1259.3" cy="504.5" r="2.02"/><circle cx="1253.5" cy="504.5" r="2.02"/><circle cx="1162.3" cy="504.3" r="2.02"/><circle cx="1272.9" cy="504.3" r="2.02"/><circle cx="1255.4" cy="504.3" r="2.02"/><circle cx="1265.1" cy="504.2" r="2.02"/><circle cx="1214.7" cy="504.2" r="2.02"/><circle cx="1205.0" cy="503.9" r="2.02"/><circle cx="1263.2" cy="503.8" r="2.02"/><circle cx="1168.1" cy="503.7" r="2.03"/><circle cx="1218.6" cy="503.7" r="2.03"/><circle cx="1261.3" cy="503.6" r="2.03"/><circle cx="1282.6" cy="503.5" r="2.03"/><circle cx="1146.8" cy="503.4" r="2.03"/><circle cx="1236.0" cy="503.4" r="2.03"/><circle cx="1222.5" cy="503.4" r="2.03"/><circle cx="1193.4" cy="503.3" r="2.03"/><circle cx="1257.4" cy="503.3" r="2.03"/><circle cx="1286.5" cy="503.1" r="2.03"/><circle cx="1255.4" cy="502.9" r="2.03"/><circle cx="1253.5" cy="502.8" r="2.03"/><circle cx="1286.5" cy="502.8" r="2.03"/><circle cx="1261.3" cy="502.7" r="2.03"/><circle cx="1220.5" cy="502.7" r="2.03"/><circle cx="1154.6" cy="502.6" r="2.03"/><circle cx="1152.6" cy="502.6" r="2.03"/><circle cx="1278.7" cy="502.5" r="2.03"/><circle cx="1197.2" cy="502.5" r="2.03"/><circle cx="1181.7" cy="502.5" r="2.03"/><circle cx="1265.1" cy="502.4" r="2.03"/><circle cx="1271.0" cy="502.4" r="2.04"/><circle cx="1141.0" cy="502.2" r="2.04"/><circle cx="1214.7" cy="502.2" r="2.04"/><circle cx="1191.4" cy="502.1" r="2.04"/><circle cx="1257.4" cy="502.1" r="2.04"/><circle cx="1261.3" cy="502.0" r="2.04"/><circle cx="1259.3" cy="502.0" r="2.04"/><circle cx="1267.1" cy="501.9" r="2.04"/><circle cx="1111.9" cy="501.9" r="2.04"/><circle cx="1253.5" cy="501.9" r="2.04"/><circle cx="1296.2" cy="501.8" r="2.04"/><circle cx="1164.3" cy="501.7" r="2.04"/><circle cx="1170.1" cy="501.7" r="2.04"/><circle cx="1276.8" cy="501.7" r="2.04"/><circle cx="1189.5" cy="501.6" r="2.04"/><circle cx="1276.8" cy="501.6" r="2.04"/><circle cx="1239.9" cy="501.4" r="2.04"/><circle cx="1253.5" cy="501.3" r="2.04"/><circle cx="1255.4" cy="501.1" r="2.05"/><circle cx="1218.6" cy="501.1" r="2.05"/><circle cx="1208.9" cy="501.0" r="2.05"/><circle cx="1177.8" cy="501.0" r="2.05"/><circle cx="1255.4" cy="500.9" r="2.05"/><circle cx="1218.6" cy="500.9" r="2.05"/><circle cx="1257.4" cy="500.8" r="2.05"/><circle cx="1174.0" cy="500.8" r="2.05"/><circle cx="1232.2" cy="500.7" r="2.05"/><circle cx="1239.9" cy="500.6" r="2.05"/><circle cx="1218.6" cy="500.4" r="2.05"/><circle cx="1181.7" cy="500.4" r="2.05"/><circle cx="1234.1" cy="500.4" r="2.05"/><circle cx="1263.2" cy="500.4" r="2.05"/><circle cx="1243.8" cy="500.4" r="2.05"/><circle cx="1255.4" cy="500.3" r="2.05"/><circle cx="1172.0" cy="500.2" r="2.05"/><circle cx="1259.3" cy="500.1" r="2.05"/><circle cx="1177.8" cy="500.1" r="2.05"/><circle cx="1191.4" cy="500.0" r="2.05"/><circle cx="1152.6" cy="500.0" r="2.05"/><circle cx="1272.9" cy="499.9" r="2.05"/><circle cx="1276.8" cy="499.7" r="2.06"/><circle cx="1253.5" cy="499.7" r="2.06"/><circle cx="1214.7" cy="499.7" r="2.06"/><circle cx="1228.3" cy="499.6" r="2.06"/><circle cx="1271.0" cy="499.6" r="2.06"/><circle cx="1115.8" cy="499.6" r="2.06"/><circle cx="1276.8" cy="499.5" r="2.06"/><circle cx="1259.3" cy="499.5" r="2.06"/><circle cx="1208.9" cy="499.5" r="2.06"/><circle cx="1265.1" cy="499.4" r="2.06"/><circle cx="1278.7" cy="499.4" r="2.06"/><circle cx="1216.6" cy="499.4" r="2.06"/><circle cx="1305.9" cy="499.4" r="2.06"/><circle cx="1214.7" cy="499.4" r="2.06"/><circle cx="1141.0" cy="499.3" r="2.06"/><circle cx="1189.5" cy="499.3" r="2.06"/><circle cx="1265.1" cy="499.3" r="2.06"/><circle cx="1247.7" cy="499.3" r="2.06"/><circle cx="1174.0" cy="499.2" r="2.06"/><circle cx="1203.1" cy="499.1" r="2.06"/><circle cx="1267.1" cy="499.1" r="2.06"/><circle cx="1203.1" cy="499.1" r="2.06"/><circle cx="1257.4" cy="499.1" r="2.06"/><circle cx="1261.3" cy="499.0" r="2.06"/><circle cx="1255.4" cy="499.0" r="2.06"/><circle cx="1245.7" cy="499.0" r="2.06"/><circle cx="1261.3" cy="498.9" r="2.06"/><circle cx="1294.2" cy="498.9" r="2.06"/><circle cx="1263.2" cy="498.8" r="2.06"/><circle cx="1234.1" cy="498.7" r="2.06"/><circle cx="1232.2" cy="498.7" r="2.06"/><circle cx="1243.8" cy="498.7" r="2.06"/><circle cx="1133.2" cy="498.6" r="2.06"/><circle cx="1179.8" cy="498.6" r="2.06"/><circle cx="1274.8" cy="498.6" r="2.06"/><circle cx="1243.8" cy="498.5" r="2.07"/><circle cx="1280.7" cy="498.4" r="2.07"/><circle cx="1290.4" cy="498.3" r="2.07"/><circle cx="1257.4" cy="498.3" r="2.07"/><circle cx="1271.0" cy="498.3" r="2.07"/><circle cx="1125.5" cy="498.2" r="2.07"/><circle cx="1236.0" cy="498.2" r="2.07"/><circle cx="1199.2" cy="498.1" r="2.07"/><circle cx="1238.0" cy="498.1" r="2.07"/><circle cx="1195.3" cy="498.1" r="2.07"/><circle cx="1265.1" cy="497.9" r="2.07"/><circle cx="1284.5" cy="497.9" r="2.07"/><circle cx="1220.5" cy="497.9" r="2.07"/><circle cx="1245.7" cy="497.9" r="2.07"/><circle cx="1197.2" cy="497.8" r="2.07"/><circle cx="1265.1" cy="497.8" r="2.07"/><circle cx="1216.6" cy="497.8" r="2.07"/><circle cx="1222.5" cy="497.6" r="2.07"/><circle cx="1119.6" cy="497.6" r="2.07"/><circle cx="1179.8" cy="497.5" r="2.07"/><circle cx="1181.7" cy="497.5" r="2.07"/><circle cx="1224.4" cy="497.4" r="2.07"/><circle cx="1296.2" cy="497.4" r="2.07"/><circle cx="1150.7" cy="497.4" r="2.07"/><circle cx="1241.9" cy="497.4" r="2.07"/><circle cx="1238.0" cy="497.3" r="2.07"/><circle cx="1224.4" cy="497.2" r="2.07"/><circle cx="1183.7" cy="497.2" r="2.07"/><circle cx="1282.6" cy="497.2" r="2.08"/><circle cx="1232.2" cy="497.1" r="2.08"/><circle cx="1255.4" cy="497.0" r="2.08"/><circle cx="1239.9" cy="497.0" r="2.08"/><circle cx="1160.4" cy="497.0" r="2.08"/><circle cx="1162.3" cy="496.9" r="2.08"/><circle cx="1210.8" cy="496.8" r="2.08"/><circle cx="1282.6" cy="496.7" r="2.08"/><circle cx="1232.2" cy="496.5" r="2.08"/><circle cx="1245.7" cy="496.5" r="2.08"/><circle cx="1206.9" cy="496.4" r="2.08"/><circle cx="1282.6" cy="496.3" r="2.08"/><circle cx="1243.8" cy="496.2" r="2.08"/><circle cx="1282.6" cy="496.2" r="2.08"/><circle cx="1212.8" cy="496.2" r="2.08"/><circle cx="1284.5" cy="496.2" r="2.08"/><circle cx="1210.8" cy="496.1" r="2.08"/><circle cx="1276.8" cy="496.1" r="2.08"/><circle cx="1288.4" cy="496.1" r="2.08"/><circle cx="1234.1" cy="496.1" r="2.08"/><circle cx="1253.5" cy="496.0" r="2.08"/><circle cx="1286.5" cy="496.0" r="2.08"/><circle cx="1278.7" cy="495.9" r="2.08"/><circle cx="1168.1" cy="495.7" r="2.09"/><circle cx="1272.9" cy="495.7" r="2.09"/><circle cx="1150.7" cy="495.7" r="2.09"/><circle cx="1206.9" cy="495.4" r="2.09"/><circle cx="1265.1" cy="495.4" r="2.09"/><circle cx="1214.7" cy="495.3" r="2.09"/><circle cx="1142.9" cy="495.3" r="2.09"/><circle cx="1106.1" cy="495.2" r="2.09"/><circle cx="1247.7" cy="495.2" r="2.09"/><circle cx="1172.0" cy="495.2" r="2.09"/><circle cx="1100.2" cy="495.1" r="2.09"/><circle cx="1222.5" cy="494.9" r="2.09"/><circle cx="1278.7" cy="494.8" r="2.09"/><circle cx="1263.2" cy="494.8" r="2.09"/><circle cx="1224.4" cy="494.8" r="2.09"/><circle cx="1245.7" cy="494.8" r="2.09"/><circle cx="1197.2" cy="494.7" r="2.09"/><circle cx="1261.3" cy="494.6" r="2.09"/><circle cx="1228.3" cy="494.5" r="2.09"/><circle cx="1142.9" cy="494.5" r="2.10"/><circle cx="1243.8" cy="494.5" r="2.10"/><circle cx="1265.1" cy="494.4" r="2.10"/><circle cx="1181.7" cy="494.4" r="2.10"/><circle cx="1247.7" cy="494.3" r="2.10"/><circle cx="1187.5" cy="494.3" r="2.10"/><circle cx="1274.8" cy="494.2" r="2.10"/><circle cx="1174.0" cy="494.1" r="2.10"/><circle cx="1249.6" cy="494.0" r="2.10"/><circle cx="1141.0" cy="494.0" r="2.10"/><circle cx="1265.1" cy="493.9" r="2.10"/><circle cx="1208.9" cy="493.7" r="2.10"/><circle cx="1271.0" cy="493.7" r="2.10"/><circle cx="1276.8" cy="493.6" r="2.10"/><circle cx="1139.0" cy="493.5" r="2.10"/><circle cx="1274.8" cy="493.4" r="2.10"/><circle cx="1238.0" cy="493.3" r="2.10"/><circle cx="1276.8" cy="493.2" r="2.10"/><circle cx="1243.8" cy="493.2" r="2.11"/><circle cx="1271.0" cy="493.2" r="2.11"/><circle cx="1257.4" cy="493.1" r="2.11"/><circle cx="1168.1" cy="493.1" r="2.11"/><circle cx="1241.9" cy="493.1" r="2.11"/><circle cx="1269.0" cy="493.0" r="2.11"/><circle cx="1220.5" cy="493.0" r="2.11"/><circle cx="1263.2" cy="492.9" r="2.11"/><circle cx="1245.7" cy="492.9" r="2.11"/><circle cx="1228.3" cy="492.9" r="2.11"/><circle cx="1205.0" cy="492.9" r="2.11"/><circle cx="1245.7" cy="492.8" r="2.11"/><circle cx="1218.6" cy="492.6" r="2.11"/><circle cx="1187.5" cy="492.6" r="2.11"/><circle cx="1276.8" cy="492.4" r="2.11"/><circle cx="1257.4" cy="492.4" r="2.11"/><circle cx="1158.4" cy="492.4" r="2.11"/><circle cx="1218.6" cy="492.3" r="2.11"/><circle cx="1177.8" cy="492.3" r="2.11"/><circle cx="1137.1" cy="492.3" r="2.11"/><circle cx="1255.4" cy="492.3" r="2.11"/><circle cx="1259.3" cy="492.1" r="2.11"/><circle cx="1210.8" cy="492.0" r="2.11"/><circle cx="1220.5" cy="492.0" r="2.11"/><circle cx="1267.1" cy="491.9" r="2.11"/><circle cx="1224.4" cy="491.9" r="2.11"/><circle cx="1257.4" cy="491.9" r="2.12"/><circle cx="1276.8" cy="491.8" r="2.12"/><circle cx="1259.3" cy="491.7" r="2.12"/><circle cx="1214.7" cy="491.7" r="2.12"/><circle cx="1236.0" cy="491.5" r="2.12"/><circle cx="1247.7" cy="491.5" r="2.12"/><circle cx="1177.8" cy="491.3" r="2.12"/><circle cx="1261.3" cy="491.3" r="2.12"/><circle cx="1238.0" cy="491.2" r="2.12"/><circle cx="1181.7" cy="491.2" r="2.12"/><circle cx="1259.3" cy="491.1" r="2.12"/><circle cx="1191.4" cy="491.1" r="2.12"/><circle cx="1212.8" cy="491.0" r="2.12"/><circle cx="1298.1" cy="490.8" r="2.12"/><circle cx="1175.9" cy="490.8" r="2.12"/><circle cx="1265.1" cy="490.7" r="2.12"/><circle cx="1234.1" cy="490.6" r="2.12"/><circle cx="1208.9" cy="490.6" r="2.12"/><circle cx="1305.9" cy="490.6" r="2.12"/><circle cx="1282.6" cy="490.5" r="2.13"/><circle cx="1271.0" cy="490.4" r="2.13"/><circle cx="1278.7" cy="490.3" r="2.13"/><circle cx="1218.6" cy="490.3" r="2.13"/><circle cx="1243.8" cy="490.2" r="2.13"/><circle cx="1210.8" cy="490.1" r="2.13"/><circle cx="1253.5" cy="490.0" r="2.13"/><circle cx="1228.3" cy="490.0" r="2.13"/><circle cx="1226.3" cy="489.9" r="2.13"/><circle cx="1236.0" cy="489.8" r="2.13"/><circle cx="1230.2" cy="489.8" r="2.13"/><circle cx="1257.4" cy="489.8" r="2.13"/><circle cx="1201.1" cy="489.7" r="2.13"/><circle cx="1239.9" cy="489.7" r="2.13"/><circle cx="1212.8" cy="489.6" r="2.13"/><circle cx="1257.4" cy="489.6" r="2.13"/><circle cx="1160.4" cy="489.6" r="2.13"/><circle cx="1265.1" cy="489.5" r="2.13"/><circle cx="1197.2" cy="489.5" r="2.13"/><circle cx="1234.1" cy="489.4" r="2.13"/><circle cx="1234.1" cy="489.4" r="2.13"/><circle cx="1162.3" cy="489.3" r="2.13"/><circle cx="1092.5" cy="489.2" r="2.14"/><circle cx="1247.7" cy="489.2" r="2.14"/><circle cx="1133.2" cy="489.2" r="2.14"/><circle cx="1278.7" cy="489.2" r="2.14"/><circle cx="1249.6" cy="489.1" r="2.14"/><circle cx="1197.2" cy="489.1" r="2.14"/><circle cx="1282.6" cy="489.1" r="2.14"/><circle cx="1166.2" cy="489.1" r="2.14"/><circle cx="1224.4" cy="489.0" r="2.14"/><circle cx="1226.3" cy="488.9" r="2.14"/><circle cx="1238.0" cy="488.8" r="2.14"/><circle cx="1257.4" cy="488.7" r="2.14"/><circle cx="1222.5" cy="488.7" r="2.14"/><circle cx="1245.7" cy="488.6" r="2.14"/><circle cx="1253.5" cy="488.6" r="2.14"/><circle cx="1232.2" cy="488.6" r="2.14"/><circle cx="1251.6" cy="488.5" r="2.14"/><circle cx="1265.1" cy="488.4" r="2.14"/><circle cx="1232.2" cy="488.3" r="2.14"/><circle cx="1230.2" cy="488.3" r="2.14"/><circle cx="1267.1" cy="488.3" r="2.14"/><circle cx="1199.2" cy="488.0" r="2.14"/><circle cx="1241.9" cy="487.9" r="2.15"/><circle cx="1222.5" cy="487.8" r="2.15"/><circle cx="1263.2" cy="487.7" r="2.15"/><circle cx="1189.5" cy="487.7" r="2.15"/><circle cx="1210.8" cy="487.6" r="2.15"/><circle cx="1160.4" cy="487.6" r="2.15"/><circle cx="1193.4" cy="487.5" r="2.15"/><circle cx="1193.4" cy="487.5" r="2.15"/><circle cx="1172.0" cy="487.4" r="2.15"/><circle cx="1156.5" cy="487.4" r="2.15"/><circle cx="1234.1" cy="487.4" r="2.15"/><circle cx="1193.4" cy="487.3" r="2.15"/><circle cx="1269.0" cy="487.3" r="2.15"/><circle cx="1117.7" cy="487.3" r="2.15"/><circle cx="1234.1" cy="487.1" r="2.15"/><circle cx="1197.2" cy="487.1" r="2.15"/><circle cx="1195.3" cy="487.0" r="2.15"/><circle cx="1146.8" cy="486.9" r="2.15"/><circle cx="1175.9" cy="486.9" r="2.15"/><circle cx="1183.7" cy="486.8" r="2.15"/><circle cx="1222.5" cy="486.6" r="2.16"/><circle cx="1195.3" cy="486.5" r="2.16"/><circle cx="1271.0" cy="486.5" r="2.16"/><circle cx="1177.8" cy="486.5" r="2.16"/><circle cx="1218.6" cy="486.4" r="2.16"/><circle cx="1220.5" cy="486.4" r="2.16"/><circle cx="1249.6" cy="486.4" r="2.16"/><circle cx="1220.5" cy="486.3" r="2.16"/><circle cx="1238.0" cy="486.2" r="2.16"/><circle cx="1230.2" cy="486.2" r="2.16"/><circle cx="1265.1" cy="486.1" r="2.16"/><circle cx="1201.1" cy="486.1" r="2.16"/><circle cx="1241.9" cy="486.1" r="2.16"/><circle cx="1282.6" cy="486.0" r="2.16"/><circle cx="1154.6" cy="486.0" r="2.16"/><circle cx="1236.0" cy="486.0" r="2.16"/><circle cx="1212.8" cy="485.9" r="2.16"/><circle cx="1210.8" cy="485.9" r="2.16"/><circle cx="1238.0" cy="485.7" r="2.16"/><circle cx="1220.5" cy="485.7" r="2.16"/><circle cx="1179.8" cy="485.6" r="2.16"/><circle cx="1220.5" cy="485.6" r="2.16"/><circle cx="1156.5" cy="485.6" r="2.16"/><circle cx="1251.6" cy="485.6" r="2.16"/><circle cx="1247.7" cy="485.5" r="2.16"/><circle cx="1236.0" cy="485.5" r="2.16"/><circle cx="1175.9" cy="485.4" r="2.16"/><circle cx="1238.0" cy="485.4" r="2.16"/><circle cx="1214.7" cy="485.4" r="2.16"/><circle cx="1168.1" cy="485.4" r="2.16"/><circle cx="1239.9" cy="485.4" r="2.16"/><circle cx="1139.0" cy="485.3" r="2.17"/><circle cx="1278.7" cy="485.3" r="2.17"/><circle cx="1158.4" cy="485.2" r="2.17"/><circle cx="1183.7" cy="485.1" r="2.17"/><circle cx="1210.8" cy="485.0" r="2.17"/><circle cx="1179.8" cy="485.0" r="2.17"/><circle cx="1187.5" cy="485.0" r="2.17"/><circle cx="1265.1" cy="485.0" r="2.17"/><circle cx="1238.0" cy="484.9" r="2.17"/><circle cx="1230.2" cy="484.9" r="2.17"/><circle cx="1247.7" cy="484.8" r="2.17"/><circle cx="1257.4" cy="484.7" r="2.17"/><circle cx="1154.6" cy="484.6" r="2.17"/><circle cx="1214.7" cy="484.5" r="2.17"/><circle cx="1205.0" cy="484.5" r="2.17"/><circle cx="1158.4" cy="484.4" r="2.17"/><circle cx="1234.1" cy="484.4" r="2.17"/><circle cx="1139.0" cy="484.1" r="2.17"/><circle cx="1189.5" cy="484.0" r="2.17"/><circle cx="1218.6" cy="483.9" r="2.18"/><circle cx="1131.3" cy="483.9" r="2.18"/><circle cx="1251.6" cy="483.8" r="2.18"/><circle cx="1142.9" cy="483.7" r="2.18"/><circle cx="1154.6" cy="483.6" r="2.18"/><circle cx="1174.0" cy="483.5" r="2.18"/><circle cx="1245.7" cy="483.5" r="2.18"/><circle cx="1144.9" cy="483.2" r="2.18"/><circle cx="1234.1" cy="483.1" r="2.18"/><circle cx="1212.8" cy="483.0" r="2.18"/><circle cx="1166.2" cy="483.0" r="2.18"/><circle cx="1216.6" cy="483.0" r="2.18"/><circle cx="1241.9" cy="483.0" r="2.18"/><circle cx="1168.1" cy="483.0" r="2.18"/><circle cx="1210.8" cy="482.9" r="2.18"/><circle cx="1249.6" cy="482.9" r="2.18"/><circle cx="1280.7" cy="482.9" r="2.18"/><circle cx="1236.0" cy="482.8" r="2.18"/><circle cx="1230.2" cy="482.8" r="2.18"/><circle cx="1150.7" cy="482.7" r="2.18"/><circle cx="1115.8" cy="482.6" r="2.19"/><circle cx="1303.9" cy="482.6" r="2.19"/><circle cx="1179.8" cy="482.6" r="2.19"/><circle cx="1241.9" cy="482.5" r="2.19"/><circle cx="1234.1" cy="482.4" r="2.19"/><circle cx="1141.0" cy="482.3" r="2.19"/><circle cx="1274.8" cy="482.3" r="2.19"/><circle cx="1274.8" cy="482.2" r="2.19"/><circle cx="1150.7" cy="482.2" r="2.19"/><circle cx="1133.2" cy="482.1" r="2.19"/><circle cx="1206.9" cy="482.1" r="2.19"/><circle cx="1206.9" cy="481.9" r="2.19"/><circle cx="1274.8" cy="481.9" r="2.19"/><circle cx="1245.7" cy="481.9" r="2.19"/><circle cx="1193.4" cy="481.8" r="2.19"/><circle cx="1251.6" cy="481.8" r="2.19"/><circle cx="1148.7" cy="481.5" r="2.19"/><circle cx="1205.0" cy="481.4" r="2.19"/><circle cx="1274.8" cy="481.4" r="2.19"/><circle cx="1203.1" cy="481.3" r="2.20"/><circle cx="1241.9" cy="481.3" r="2.20"/><circle cx="1197.2" cy="481.3" r="2.20"/><circle cx="1218.6" cy="481.3" r="2.20"/><circle cx="1228.3" cy="481.2" r="2.20"/><circle cx="1119.6" cy="481.2" r="2.20"/><circle cx="1267.1" cy="481.1" r="2.20"/><circle cx="1214.7" cy="481.1" r="2.20"/><circle cx="1263.2" cy="481.0" r="2.20"/><circle cx="1123.5" cy="481.0" r="2.20"/><circle cx="1253.5" cy="481.0" r="2.20"/><circle cx="1127.4" cy="481.0" r="2.20"/><circle cx="1150.7" cy="480.9" r="2.20"/><circle cx="1253.5" cy="480.9" r="2.20"/><circle cx="1236.0" cy="480.8" r="2.20"/><circle cx="1156.5" cy="480.8" r="2.20"/><circle cx="1203.1" cy="480.6" r="2.20"/><circle cx="1203.1" cy="480.5" r="2.20"/><circle cx="1218.6" cy="480.5" r="2.20"/><circle cx="1222.5" cy="480.3" r="2.20"/><circle cx="1195.3" cy="480.1" r="2.20"/><circle cx="1298.1" cy="480.1" r="2.20"/><circle cx="1106.1" cy="480.1" r="2.20"/><circle cx="1179.8" cy="479.9" r="2.21"/><circle cx="1222.5" cy="479.8" r="2.21"/><circle cx="1216.6" cy="479.7" r="2.21"/><circle cx="1232.2" cy="479.6" r="2.21"/><circle cx="1210.8" cy="479.6" r="2.21"/><circle cx="1172.0" cy="479.6" r="2.21"/><circle cx="1137.1" cy="479.5" r="2.21"/><circle cx="1168.1" cy="479.4" r="2.21"/><circle cx="1199.2" cy="479.4" r="2.21"/><circle cx="1168.1" cy="479.4" r="2.21"/><circle cx="1195.3" cy="479.3" r="2.21"/><circle cx="1263.2" cy="479.2" r="2.21"/><circle cx="1189.5" cy="479.1" r="2.21"/><circle cx="1255.4" cy="479.1" r="2.21"/><circle cx="1243.8" cy="479.1" r="2.21"/><circle cx="1218.6" cy="479.1" r="2.21"/><circle cx="1257.4" cy="479.0" r="2.21"/><circle cx="1245.7" cy="479.0" r="2.21"/><circle cx="1274.8" cy="478.9" r="2.21"/><circle cx="1137.1" cy="478.9" r="2.21"/><circle cx="1206.9" cy="478.8" r="2.21"/><circle cx="1183.7" cy="478.8" r="2.21"/><circle cx="1218.6" cy="478.6" r="2.22"/><circle cx="1243.8" cy="478.5" r="2.22"/><circle cx="1267.1" cy="478.4" r="2.22"/><circle cx="1236.0" cy="478.4" r="2.22"/><circle cx="1288.4" cy="478.4" r="2.22"/><circle cx="1216.6" cy="478.1" r="2.22"/><circle cx="1131.3" cy="478.1" r="2.22"/><circle cx="1195.3" cy="478.0" r="2.22"/><circle cx="1170.1" cy="478.0" r="2.22"/><circle cx="1179.8" cy="477.9" r="2.22"/><circle cx="1220.5" cy="477.9" r="2.22"/><circle cx="1177.8" cy="477.9" r="2.22"/><circle cx="1263.2" cy="477.8" r="2.22"/><circle cx="1236.0" cy="477.7" r="2.22"/><circle cx="1208.9" cy="477.6" r="2.22"/><circle cx="1203.1" cy="477.6" r="2.22"/><circle cx="1197.2" cy="477.5" r="2.22"/><circle cx="1298.1" cy="477.4" r="2.23"/><circle cx="1098.3" cy="477.4" r="2.23"/><circle cx="1286.5" cy="477.3" r="2.23"/><circle cx="1274.8" cy="477.3" r="2.23"/><circle cx="1234.1" cy="477.2" r="2.23"/><circle cx="1189.5" cy="477.1" r="2.23"/><circle cx="1243.8" cy="477.1" r="2.23"/><circle cx="1228.3" cy="477.1" r="2.23"/><circle cx="1263.2" cy="477.0" r="2.23"/><circle cx="1278.7" cy="476.9" r="2.23"/><circle cx="1271.0" cy="476.8" r="2.23"/><circle cx="1175.9" cy="476.8" r="2.23"/><circle cx="1218.6" cy="476.7" r="2.23"/><circle cx="1234.1" cy="476.7" r="2.23"/><circle cx="1181.7" cy="476.6" r="2.23"/><circle cx="1162.3" cy="476.6" r="2.23"/><circle cx="1154.6" cy="476.6" r="2.23"/><circle cx="1170.1" cy="476.6" r="2.23"/><circle cx="1131.3" cy="476.4" r="2.23"/><circle cx="1142.9" cy="476.4" r="2.23"/><circle cx="1245.7" cy="476.4" r="2.23"/><circle cx="1121.6" cy="476.3" r="2.23"/><circle cx="1150.7" cy="476.3" r="2.23"/><circle cx="1232.2" cy="476.3" r="2.23"/><circle cx="1218.6" cy="476.3" r="2.23"/><circle cx="1241.9" cy="476.2" r="2.23"/><circle cx="1253.5" cy="476.2" r="2.23"/><circle cx="1177.8" cy="476.1" r="2.23"/><circle cx="1172.0" cy="476.1" r="2.23"/><circle cx="1224.4" cy="476.1" r="2.23"/><circle cx="1261.3" cy="476.1" r="2.23"/><circle cx="1220.5" cy="475.9" r="2.24"/><circle cx="1191.4" cy="475.8" r="2.24"/><circle cx="1282.6" cy="475.7" r="2.24"/><circle cx="1162.3" cy="475.6" r="2.24"/><circle cx="1104.1" cy="475.6" r="2.24"/><circle cx="1117.7" cy="475.5" r="2.24"/><circle cx="1141.0" cy="475.5" r="2.24"/><circle cx="1214.7" cy="475.3" r="2.24"/><circle cx="1119.6" cy="475.3" r="2.24"/><circle cx="1168.1" cy="475.2" r="2.24"/><circle cx="1206.9" cy="475.2" r="2.24"/><circle cx="1197.2" cy="475.1" r="2.24"/><circle cx="1239.9" cy="475.1" r="2.24"/><circle cx="1197.2" cy="475.0" r="2.24"/><circle cx="1199.2" cy="474.8" r="2.24"/><circle cx="1199.2" cy="474.8" r="2.24"/><circle cx="1195.3" cy="474.8" r="2.24"/><circle cx="1172.0" cy="474.7" r="2.25"/><circle cx="1142.9" cy="474.7" r="2.25"/><circle cx="1170.1" cy="474.7" r="2.25"/><circle cx="1296.2" cy="474.7" r="2.25"/><circle cx="1109.9" cy="474.6" r="2.25"/><circle cx="1172.0" cy="474.2" r="2.25"/><circle cx="1230.2" cy="474.2" r="2.25"/><circle cx="1189.5" cy="474.1" r="2.25"/><circle cx="1113.8" cy="474.1" r="2.25"/><circle cx="1189.5" cy="474.0" r="2.25"/><circle cx="1272.9" cy="474.0" r="2.25"/><circle cx="1228.3" cy="474.0" r="2.25"/><circle cx="1206.9" cy="474.0" r="2.25"/><circle cx="1191.4" cy="474.0" r="2.25"/><circle cx="1210.8" cy="473.9" r="2.25"/><circle cx="1205.0" cy="473.9" r="2.25"/><circle cx="1243.8" cy="473.7" r="2.25"/><circle cx="1222.5" cy="473.7" r="2.25"/><circle cx="1174.0" cy="473.5" r="2.25"/><circle cx="1249.6" cy="473.5" r="2.25"/><circle cx="1193.4" cy="473.5" r="2.25"/><circle cx="1199.2" cy="473.4" r="2.26"/><circle cx="1249.6" cy="473.3" r="2.26"/><circle cx="1241.9" cy="473.3" r="2.26"/><circle cx="1236.0" cy="473.2" r="2.26"/><circle cx="1175.9" cy="473.2" r="2.26"/><circle cx="1185.6" cy="473.2" r="2.26"/><circle cx="1156.5" cy="473.1" r="2.26"/><circle cx="1239.9" cy="473.0" r="2.26"/><circle cx="1222.5" cy="473.0" r="2.26"/><circle cx="1201.1" cy="473.0" r="2.26"/><circle cx="1214.7" cy="473.0" r="2.26"/><circle cx="1158.4" cy="473.0" r="2.26"/><circle cx="1172.0" cy="472.9" r="2.26"/><circle cx="1175.9" cy="472.9" r="2.26"/><circle cx="1144.9" cy="472.8" r="2.26"/><circle cx="1154.6" cy="472.8" r="2.26"/><circle cx="1216.6" cy="472.7" r="2.26"/><circle cx="1288.4" cy="472.6" r="2.26"/><circle cx="1238.0" cy="472.6" r="2.26"/><circle cx="1265.1" cy="472.6" r="2.26"/><circle cx="1284.5" cy="472.4" r="2.26"/><circle cx="1218.6" cy="472.4" r="2.26"/><circle cx="1290.4" cy="472.3" r="2.26"/><circle cx="1241.9" cy="472.2" r="2.26"/><circle cx="1164.3" cy="472.1" r="2.27"/><circle cx="1175.9" cy="472.0" r="2.27"/><circle cx="1160.4" cy="472.0" r="2.27"/><circle cx="1241.9" cy="471.9" r="2.27"/><circle cx="1152.6" cy="471.9" r="2.27"/><circle cx="1197.2" cy="471.8" r="2.27"/><circle cx="1220.5" cy="471.8" r="2.27"/><circle cx="1123.5" cy="471.8" r="2.27"/><circle cx="1271.0" cy="471.7" r="2.27"/><circle cx="1226.3" cy="471.7" r="2.27"/><circle cx="1245.7" cy="471.6" r="2.27"/><circle cx="1179.8" cy="471.6" r="2.27"/><circle cx="1142.9" cy="471.6" r="2.27"/><circle cx="1261.3" cy="471.6" r="2.27"/><circle cx="1238.0" cy="471.6" r="2.27"/><circle cx="1230.2" cy="471.5" r="2.27"/><circle cx="1119.6" cy="471.5" r="2.27"/><circle cx="1214.7" cy="471.5" r="2.27"/><circle cx="1257.4" cy="471.4" r="2.27"/><circle cx="1259.3" cy="471.4" r="2.27"/><circle cx="1243.8" cy="471.4" r="2.27"/><circle cx="1226.3" cy="471.4" r="2.27"/><circle cx="1257.4" cy="471.4" r="2.27"/><circle cx="1199.2" cy="471.3" r="2.27"/><circle cx="1206.9" cy="471.3" r="2.27"/><circle cx="1201.1" cy="471.2" r="2.27"/><circle cx="1187.5" cy="471.2" r="2.27"/><circle cx="1216.6" cy="471.2" r="2.27"/><circle cx="1249.6" cy="471.1" r="2.27"/><circle cx="1172.0" cy="471.0" r="2.27"/><circle cx="1203.1" cy="470.6" r="2.28"/><circle cx="1265.1" cy="470.6" r="2.28"/><circle cx="1193.4" cy="470.5" r="2.28"/><circle cx="1104.1" cy="470.4" r="2.28"/><circle cx="1121.6" cy="470.4" r="2.28"/><circle cx="1146.8" cy="470.3" r="2.28"/><circle cx="1224.4" cy="470.3" r="2.28"/><circle cx="1241.9" cy="470.2" r="2.28"/><circle cx="1276.8" cy="470.2" r="2.28"/><circle cx="1280.7" cy="470.2" r="2.28"/><circle cx="1162.3" cy="469.8" r="2.28"/><circle cx="1241.9" cy="469.5" r="2.28"/><circle cx="1238.0" cy="469.4" r="2.29"/><circle cx="1175.9" cy="469.4" r="2.29"/><circle cx="1203.1" cy="469.4" r="2.29"/><circle cx="1154.6" cy="469.3" r="2.29"/><circle cx="1162.3" cy="469.3" r="2.29"/><circle cx="1179.8" cy="469.1" r="2.29"/><circle cx="1183.7" cy="469.1" r="2.29"/><circle cx="1259.3" cy="469.1" r="2.29"/><circle cx="1146.8" cy="469.1" r="2.29"/><circle cx="1183.7" cy="468.9" r="2.29"/><circle cx="1154.6" cy="468.9" r="2.29"/><circle cx="1179.8" cy="468.8" r="2.29"/><circle cx="1236.0" cy="468.8" r="2.29"/><circle cx="1185.6" cy="468.8" r="2.29"/><circle cx="1071.1" cy="468.8" r="2.29"/><circle cx="1249.6" cy="468.8" r="2.29"/><circle cx="1191.4" cy="468.6" r="2.29"/><circle cx="1255.4" cy="468.5" r="2.29"/><circle cx="1199.2" cy="468.4" r="2.29"/><circle cx="1078.9" cy="468.3" r="2.29"/><circle cx="1090.5" cy="468.2" r="2.29"/><circle cx="1251.6" cy="468.2" r="2.29"/><circle cx="1218.6" cy="468.1" r="2.30"/><circle cx="1183.7" cy="468.1" r="2.30"/><circle cx="1210.8" cy="467.9" r="2.30"/><circle cx="1123.5" cy="467.8" r="2.30"/><circle cx="1247.7" cy="467.7" r="2.30"/><circle cx="1119.6" cy="467.7" r="2.30"/><circle cx="1257.4" cy="467.6" r="2.30"/><circle cx="1239.9" cy="467.5" r="2.30"/><circle cx="1183.7" cy="467.4" r="2.30"/><circle cx="1253.5" cy="467.3" r="2.30"/><circle cx="1255.4" cy="467.2" r="2.30"/><circle cx="1249.6" cy="467.1" r="2.30"/><circle cx="1156.5" cy="467.1" r="2.30"/><circle cx="1226.3" cy="467.0" r="2.30"/><circle cx="1228.3" cy="467.0" r="2.30"/><circle cx="1181.7" cy="467.0" r="2.30"/><circle cx="1245.7" cy="466.9" r="2.30"/><circle cx="1113.8" cy="466.7" r="2.31"/><circle cx="1125.5" cy="466.7" r="2.31"/><circle cx="1238.0" cy="466.7" r="2.31"/><circle cx="1288.4" cy="466.6" r="2.31"/><circle cx="1247.7" cy="466.6" r="2.31"/><circle cx="1220.5" cy="466.6" r="2.31"/><circle cx="1197.2" cy="466.6" r="2.31"/><circle cx="1129.3" cy="466.4" r="2.31"/><circle cx="1197.2" cy="465.9" r="2.31"/><circle cx="1127.4" cy="465.7" r="2.31"/><circle cx="1218.6" cy="465.6" r="2.31"/><circle cx="1117.7" cy="465.4" r="2.32"/><circle cx="1179.8" cy="465.4" r="2.32"/><circle cx="1170.1" cy="465.3" r="2.32"/><circle cx="1206.9" cy="465.3" r="2.32"/><circle cx="1127.4" cy="465.2" r="2.32"/><circle cx="1148.7" cy="465.1" r="2.32"/><circle cx="1218.6" cy="465.0" r="2.32"/><circle cx="1222.5" cy="464.9" r="2.32"/><circle cx="1104.1" cy="464.9" r="2.32"/><circle cx="1239.9" cy="464.8" r="2.32"/><circle cx="1239.9" cy="464.8" r="2.32"/><circle cx="1152.6" cy="464.7" r="2.32"/><circle cx="1206.9" cy="464.7" r="2.32"/><circle cx="1251.6" cy="464.6" r="2.32"/><circle cx="1185.6" cy="464.5" r="2.32"/><circle cx="1187.5" cy="464.5" r="2.32"/><circle cx="1183.7" cy="464.4" r="2.32"/><circle cx="1160.4" cy="464.2" r="2.33"/><circle cx="1119.6" cy="464.2" r="2.33"/><circle cx="1129.3" cy="464.1" r="2.33"/><circle cx="1137.1" cy="464.0" r="2.33"/><circle cx="1247.7" cy="464.0" r="2.33"/><circle cx="1212.8" cy="464.0" r="2.33"/><circle cx="1185.6" cy="464.0" r="2.33"/><circle cx="1265.1" cy="464.0" r="2.33"/><circle cx="1243.8" cy="463.9" r="2.33"/><circle cx="1185.6" cy="463.9" r="2.33"/><circle cx="1172.0" cy="463.9" r="2.33"/><circle cx="1172.0" cy="463.9" r="2.33"/><circle cx="1187.5" cy="463.8" r="2.33"/><circle cx="1274.8" cy="463.5" r="2.33"/><circle cx="1096.4" cy="463.4" r="2.33"/><circle cx="1172.0" cy="463.2" r="2.33"/><circle cx="1238.0" cy="462.9" r="2.33"/><circle cx="1189.5" cy="462.9" r="2.34"/><circle cx="1222.5" cy="462.6" r="2.34"/><circle cx="1236.0" cy="462.6" r="2.34"/><circle cx="1146.8" cy="462.6" r="2.34"/><circle cx="1232.2" cy="462.6" r="2.34"/><circle cx="1133.2" cy="462.5" r="2.34"/><circle cx="1092.5" cy="462.4" r="2.34"/><circle cx="1239.9" cy="462.4" r="2.34"/><circle cx="1210.8" cy="462.3" r="2.34"/><circle cx="1131.3" cy="462.3" r="2.34"/><circle cx="1257.4" cy="462.2" r="2.34"/><circle cx="1224.4" cy="462.1" r="2.34"/><circle cx="1193.4" cy="462.1" r="2.34"/><circle cx="1203.1" cy="461.8" r="2.34"/><circle cx="1222.5" cy="461.8" r="2.34"/><circle cx="1205.0" cy="461.8" r="2.34"/><circle cx="1189.5" cy="461.7" r="2.34"/><circle cx="1249.6" cy="461.7" r="2.34"/><circle cx="1239.9" cy="461.6" r="2.35"/><circle cx="1144.9" cy="461.5" r="2.35"/><circle cx="1230.2" cy="461.5" r="2.35"/><circle cx="1234.1" cy="461.5" r="2.35"/><circle cx="1234.1" cy="461.5" r="2.35"/><circle cx="1249.6" cy="461.5" r="2.35"/><circle cx="1243.8" cy="461.4" r="2.35"/><circle cx="1243.8" cy="461.4" r="2.35"/><circle cx="1214.7" cy="461.4" r="2.35"/><circle cx="1139.0" cy="461.4" r="2.35"/><circle cx="1183.7" cy="461.3" r="2.35"/><circle cx="1236.0" cy="461.2" r="2.35"/><circle cx="1125.5" cy="461.2" r="2.35"/><circle cx="1276.8" cy="461.1" r="2.35"/><circle cx="1191.4" cy="461.1" r="2.35"/><circle cx="1106.1" cy="461.0" r="2.35"/><circle cx="1139.0" cy="460.9" r="2.35"/><circle cx="1228.3" cy="460.8" r="2.35"/><circle cx="1193.4" cy="460.6" r="2.35"/><circle cx="1086.7" cy="460.5" r="2.35"/><circle cx="1172.0" cy="460.4" r="2.35"/><circle cx="1100.2" cy="460.3" r="2.36"/><circle cx="1263.2" cy="460.2" r="2.36"/><circle cx="1127.4" cy="460.0" r="2.36"/><circle cx="1251.6" cy="460.0" r="2.36"/><circle cx="1152.6" cy="459.9" r="2.36"/><circle cx="1212.8" cy="459.8" r="2.36"/><circle cx="1259.3" cy="459.8" r="2.36"/><circle cx="1131.3" cy="459.8" r="2.36"/><circle cx="1162.3" cy="459.8" r="2.36"/><circle cx="1208.9" cy="459.8" r="2.36"/><circle cx="1251.6" cy="459.8" r="2.36"/><circle cx="1251.6" cy="459.7" r="2.36"/><circle cx="1170.1" cy="459.7" r="2.36"/><circle cx="1216.6" cy="459.6" r="2.36"/><circle cx="1201.1" cy="459.6" r="2.36"/><circle cx="1206.9" cy="459.5" r="2.36"/><circle cx="1187.5" cy="459.3" r="2.36"/><circle cx="1243.8" cy="459.3" r="2.36"/><circle cx="1245.7" cy="459.3" r="2.36"/><circle cx="1144.9" cy="459.2" r="2.36"/><circle cx="1218.6" cy="459.0" r="2.36"/><circle cx="1152.6" cy="458.8" r="2.37"/><circle cx="1189.5" cy="458.8" r="2.37"/><circle cx="1214.7" cy="458.8" r="2.37"/><circle cx="1218.6" cy="458.8" r="2.37"/><circle cx="1174.0" cy="458.7" r="2.37"/><circle cx="1261.3" cy="458.6" r="2.37"/><circle cx="1222.5" cy="458.5" r="2.37"/><circle cx="1177.8" cy="458.5" r="2.37"/><circle cx="1267.1" cy="458.4" r="2.37"/><circle cx="1179.8" cy="458.3" r="2.37"/><circle cx="1139.0" cy="458.2" r="2.37"/><circle cx="1164.3" cy="458.2" r="2.37"/><circle cx="1193.4" cy="458.2" r="2.37"/><circle cx="1133.2" cy="458.1" r="2.37"/><circle cx="1189.5" cy="458.0" r="2.37"/><circle cx="1203.1" cy="458.0" r="2.37"/><circle cx="1226.3" cy="457.9" r="2.37"/><circle cx="1179.8" cy="457.8" r="2.37"/><circle cx="1203.1" cy="457.8" r="2.37"/><circle cx="1224.4" cy="457.8" r="2.37"/><circle cx="1177.8" cy="457.6" r="2.37"/><circle cx="1158.4" cy="457.6" r="2.38"/><circle cx="1203.1" cy="457.4" r="2.38"/><circle cx="1094.4" cy="457.2" r="2.38"/><circle cx="1247.7" cy="457.2" r="2.38"/><circle cx="1174.0" cy="457.2" r="2.38"/><circle cx="1269.0" cy="457.1" r="2.38"/><circle cx="1183.7" cy="457.1" r="2.38"/><circle cx="1177.8" cy="457.0" r="2.38"/><circle cx="1220.5" cy="456.9" r="2.38"/><circle cx="1228.3" cy="456.9" r="2.38"/><circle cx="1150.7" cy="456.7" r="2.38"/><circle cx="1255.4" cy="456.7" r="2.38"/><circle cx="1228.3" cy="456.4" r="2.38"/><circle cx="1108.0" cy="456.3" r="2.39"/><circle cx="1082.8" cy="456.2" r="2.39"/><circle cx="1142.9" cy="456.2" r="2.39"/><circle cx="1148.7" cy="456.2" r="2.39"/><circle cx="1129.3" cy="456.2" r="2.39"/><circle cx="1142.9" cy="456.1" r="2.39"/><circle cx="1243.8" cy="456.1" r="2.39"/><circle cx="1162.3" cy="455.9" r="2.39"/><circle cx="1203.1" cy="455.9" r="2.39"/><circle cx="1206.9" cy="455.9" r="2.39"/><circle cx="1206.9" cy="455.9" r="2.39"/><circle cx="1230.2" cy="455.8" r="2.39"/><circle cx="1152.6" cy="455.7" r="2.39"/><circle cx="1261.3" cy="455.6" r="2.39"/><circle cx="1177.8" cy="455.6" r="2.39"/><circle cx="1133.2" cy="455.4" r="2.39"/><circle cx="1216.6" cy="455.4" r="2.39"/><circle cx="1125.5" cy="455.4" r="2.39"/><circle cx="1214.7" cy="455.2" r="2.39"/><circle cx="1212.8" cy="455.0" r="2.39"/><circle cx="1197.2" cy="455.0" r="2.40"/><circle cx="1131.3" cy="454.9" r="2.40"/><circle cx="1183.7" cy="454.9" r="2.40"/><circle cx="1265.1" cy="454.7" r="2.40"/><circle cx="1245.7" cy="454.7" r="2.40"/><circle cx="1104.1" cy="454.6" r="2.40"/><circle cx="1230.2" cy="454.4" r="2.40"/><circle cx="1208.9" cy="454.3" r="2.40"/><circle cx="1131.3" cy="454.3" r="2.40"/><circle cx="1121.6" cy="454.3" r="2.40"/><circle cx="1137.1" cy="454.2" r="2.40"/><circle cx="1183.7" cy="454.2" r="2.40"/><circle cx="1109.9" cy="454.0" r="2.40"/><circle cx="1141.0" cy="454.0" r="2.40"/><circle cx="1092.5" cy="453.9" r="2.40"/><circle cx="1203.1" cy="453.9" r="2.40"/><circle cx="1181.7" cy="453.9" r="2.40"/><circle cx="1141.0" cy="453.9" r="2.40"/><circle cx="1152.6" cy="453.8" r="2.40"/><circle cx="1191.4" cy="453.8" r="2.40"/><circle cx="1218.6" cy="453.7" r="2.40"/><circle cx="1210.8" cy="453.6" r="2.41"/><circle cx="1189.5" cy="453.5" r="2.41"/><circle cx="1185.6" cy="453.5" r="2.41"/><circle cx="1164.3" cy="453.3" r="2.41"/><circle cx="1160.4" cy="453.2" r="2.41"/><circle cx="1271.0" cy="453.2" r="2.41"/><circle cx="1257.4" cy="453.1" r="2.41"/><circle cx="1150.7" cy="453.1" r="2.41"/><circle cx="1197.2" cy="453.0" r="2.41"/><circle cx="1238.0" cy="452.9" r="2.41"/><circle cx="1224.4" cy="452.9" r="2.41"/><circle cx="1125.5" cy="452.7" r="2.41"/><circle cx="1133.2" cy="452.5" r="2.41"/><circle cx="1257.4" cy="452.5" r="2.41"/><circle cx="1106.1" cy="452.4" r="2.41"/><circle cx="1261.3" cy="452.3" r="2.42"/><circle cx="1146.8" cy="452.1" r="2.42"/><circle cx="1249.6" cy="452.0" r="2.42"/><circle cx="1086.7" cy="451.8" r="2.42"/><circle cx="1162.3" cy="451.8" r="2.42"/><circle cx="1245.7" cy="451.7" r="2.42"/><circle cx="1206.9" cy="451.7" r="2.42"/><circle cx="1205.0" cy="451.6" r="2.42"/><circle cx="1183.7" cy="451.5" r="2.42"/><circle cx="1160.4" cy="451.5" r="2.42"/><circle cx="1113.8" cy="451.5" r="2.42"/><circle cx="1109.9" cy="451.4" r="2.42"/><circle cx="1142.9" cy="451.3" r="2.42"/><circle cx="1271.0" cy="451.3" r="2.42"/><circle cx="1098.3" cy="451.1" r="2.42"/><circle cx="1259.3" cy="451.1" r="2.42"/><circle cx="1125.5" cy="451.1" r="2.42"/><circle cx="1230.2" cy="450.8" r="2.43"/><circle cx="1137.1" cy="450.7" r="2.43"/><circle cx="1236.0" cy="450.7" r="2.43"/><circle cx="1150.7" cy="450.7" r="2.43"/><circle cx="1191.4" cy="450.5" r="2.43"/><circle cx="1179.8" cy="450.3" r="2.43"/><circle cx="1228.3" cy="450.1" r="2.43"/><circle cx="1232.2" cy="450.0" r="2.43"/><circle cx="1224.4" cy="450.0" r="2.43"/><circle cx="1174.0" cy="449.6" r="2.44"/><circle cx="1232.2" cy="449.6" r="2.44"/><circle cx="1203.1" cy="449.5" r="2.44"/><circle cx="1166.2" cy="449.4" r="2.44"/><circle cx="1137.1" cy="449.4" r="2.44"/><circle cx="1197.2" cy="449.2" r="2.44"/><circle cx="1197.2" cy="449.0" r="2.44"/><circle cx="1177.8" cy="448.9" r="2.44"/><circle cx="1205.0" cy="448.8" r="2.44"/><circle cx="1158.4" cy="448.5" r="2.44"/><circle cx="1239.9" cy="448.5" r="2.44"/><circle cx="1195.3" cy="448.4" r="2.45"/><circle cx="1129.3" cy="448.3" r="2.45"/><circle cx="1241.9" cy="448.2" r="2.45"/><circle cx="1131.3" cy="448.1" r="2.45"/><circle cx="1170.1" cy="448.1" r="2.45"/><circle cx="1216.6" cy="447.9" r="2.45"/><circle cx="1224.4" cy="447.8" r="2.45"/><circle cx="1187.5" cy="447.6" r="2.45"/><circle cx="1249.6" cy="447.6" r="2.45"/><circle cx="1108.0" cy="447.6" r="2.45"/><circle cx="1170.1" cy="447.4" r="2.45"/><circle cx="1129.3" cy="447.4" r="2.45"/><circle cx="1142.9" cy="447.3" r="2.45"/><circle cx="1199.2" cy="447.3" r="2.45"/><circle cx="1197.2" cy="447.3" r="2.45"/><circle cx="1201.1" cy="447.2" r="2.45"/><circle cx="1263.2" cy="447.2" r="2.45"/><circle cx="1166.2" cy="447.1" r="2.45"/><circle cx="1133.2" cy="447.0" r="2.46"/><circle cx="1092.5" cy="447.0" r="2.46"/><circle cx="1216.6" cy="446.7" r="2.46"/><circle cx="1253.5" cy="446.6" r="2.46"/><circle cx="1232.2" cy="446.5" r="2.46"/><circle cx="1100.2" cy="446.4" r="2.46"/><circle cx="1228.3" cy="446.3" r="2.46"/><circle cx="1142.9" cy="446.3" r="2.46"/><circle cx="1226.3" cy="446.2" r="2.46"/><circle cx="1187.5" cy="446.2" r="2.46"/><circle cx="1206.9" cy="446.1" r="2.46"/><circle cx="1187.5" cy="446.1" r="2.46"/><circle cx="1164.3" cy="446.1" r="2.46"/><circle cx="1073.1" cy="446.0" r="2.46"/><circle cx="1239.9" cy="445.9" r="2.46"/><circle cx="1150.7" cy="445.9" r="2.46"/><circle cx="1205.0" cy="445.9" r="2.46"/><circle cx="1199.2" cy="445.7" r="2.47"/><circle cx="1216.6" cy="445.4" r="2.47"/><circle cx="1177.8" cy="445.2" r="2.47"/><circle cx="1170.1" cy="445.1" r="2.47"/><circle cx="1210.8" cy="444.7" r="2.47"/><circle cx="1142.9" cy="444.7" r="2.47"/><circle cx="1142.9" cy="444.7" r="2.47"/><circle cx="1144.9" cy="444.7" r="2.47"/><circle cx="1166.2" cy="444.6" r="2.47"/><circle cx="1156.5" cy="444.3" r="2.48"/><circle cx="1189.5" cy="444.0" r="2.48"/><circle cx="1137.1" cy="444.0" r="2.48"/><circle cx="1174.0" cy="443.9" r="2.48"/><circle cx="1247.7" cy="443.4" r="2.48"/><circle cx="1177.8" cy="443.3" r="2.48"/><circle cx="1185.6" cy="443.1" r="2.49"/><circle cx="1220.5" cy="443.0" r="2.49"/><circle cx="1090.5" cy="443.0" r="2.49"/><circle cx="1255.4" cy="442.9" r="2.49"/><circle cx="1177.8" cy="442.8" r="2.49"/><circle cx="1183.7" cy="442.8" r="2.49"/><circle cx="1129.3" cy="442.7" r="2.49"/><circle cx="1158.4" cy="442.7" r="2.49"/><circle cx="1148.7" cy="442.7" r="2.49"/><circle cx="1156.5" cy="442.6" r="2.49"/><circle cx="1123.5" cy="442.5" r="2.49"/><circle cx="1226.3" cy="442.5" r="2.49"/><circle cx="1185.6" cy="442.3" r="2.49"/><circle cx="1170.1" cy="442.3" r="2.49"/><circle cx="1203.1" cy="442.2" r="2.49"/><circle cx="1177.8" cy="442.1" r="2.49"/><circle cx="1166.2" cy="442.1" r="2.49"/><circle cx="1154.6" cy="442.0" r="2.49"/><circle cx="1094.4" cy="441.9" r="2.49"/><circle cx="1164.3" cy="441.9" r="2.49"/><circle cx="1214.7" cy="441.8" r="2.49"/><circle cx="1166.2" cy="441.8" r="2.50"/><circle cx="1152.6" cy="441.5" r="2.50"/><circle cx="1201.1" cy="441.3" r="2.50"/><circle cx="1203.1" cy="441.3" r="2.50"/><circle cx="1216.6" cy="441.0" r="2.50"/><circle cx="1160.4" cy="440.7" r="2.50"/><circle cx="1123.5" cy="440.7" r="2.50"/><circle cx="1119.6" cy="440.5" r="2.50"/><circle cx="1135.2" cy="440.4" r="2.51"/><circle cx="1177.8" cy="440.3" r="2.51"/><circle cx="1142.9" cy="440.2" r="2.51"/><circle cx="1117.7" cy="440.0" r="2.51"/><circle cx="1148.7" cy="439.9" r="2.51"/><circle cx="1109.9" cy="439.4" r="2.51"/><circle cx="1205.0" cy="439.4" r="2.51"/><circle cx="1193.4" cy="439.2" r="2.51"/><circle cx="1257.4" cy="439.2" r="2.51"/><circle cx="1174.0" cy="439.1" r="2.52"/><circle cx="1166.2" cy="438.9" r="2.52"/><circle cx="1226.3" cy="438.8" r="2.52"/><circle cx="1197.2" cy="438.7" r="2.52"/><circle cx="1208.9" cy="438.7" r="2.52"/><circle cx="1241.9" cy="438.7" r="2.52"/><circle cx="1098.3" cy="438.5" r="2.52"/><circle cx="1197.2" cy="438.5" r="2.52"/><circle cx="1199.2" cy="438.5" r="2.52"/><circle cx="1174.0" cy="438.3" r="2.52"/><circle cx="1220.5" cy="438.2" r="2.52"/><circle cx="1220.5" cy="438.2" r="2.52"/><circle cx="1179.8" cy="438.1" r="2.52"/><circle cx="1263.2" cy="437.9" r="2.52"/><circle cx="1189.5" cy="437.8" r="2.53"/><circle cx="1092.5" cy="437.6" r="2.53"/><circle cx="1096.4" cy="437.6" r="2.53"/><circle cx="1177.8" cy="437.3" r="2.53"/><circle cx="1224.4" cy="437.3" r="2.53"/><circle cx="1084.7" cy="437.3" r="2.53"/><circle cx="1259.3" cy="436.6" r="2.53"/><circle cx="1175.9" cy="436.5" r="2.53"/><circle cx="1080.8" cy="436.5" r="2.54"/><circle cx="1216.6" cy="436.3" r="2.54"/><circle cx="1104.1" cy="436.2" r="2.54"/><circle cx="1104.1" cy="436.2" r="2.54"/><circle cx="1129.3" cy="435.9" r="2.54"/><circle cx="1224.4" cy="435.5" r="2.54"/><circle cx="1230.2" cy="435.5" r="2.54"/><circle cx="1162.3" cy="435.4" r="2.54"/><circle cx="1236.0" cy="435.3" r="2.54"/><circle cx="1179.8" cy="435.0" r="2.55"/><circle cx="1142.9" cy="434.9" r="2.55"/><circle cx="1234.1" cy="434.9" r="2.55"/><circle cx="1123.5" cy="434.7" r="2.55"/><circle cx="1158.4" cy="434.6" r="2.55"/><circle cx="1201.1" cy="434.5" r="2.55"/><circle cx="1082.8" cy="434.5" r="2.55"/><circle cx="1125.5" cy="434.4" r="2.55"/><circle cx="1234.1" cy="434.4" r="2.55"/><circle cx="1183.7" cy="434.3" r="2.55"/><circle cx="1160.4" cy="434.1" r="2.55"/><circle cx="1166.2" cy="434.0" r="2.55"/><circle cx="1135.2" cy="433.8" r="2.56"/><circle cx="1135.2" cy="433.8" r="2.56"/><circle cx="1249.6" cy="433.4" r="2.56"/><circle cx="1175.9" cy="433.3" r="2.56"/><circle cx="1133.2" cy="433.3" r="2.56"/><circle cx="1197.2" cy="433.3" r="2.56"/><circle cx="1175.9" cy="433.2" r="2.56"/><circle cx="1175.9" cy="433.0" r="2.56"/><circle cx="1096.4" cy="432.9" r="2.56"/><circle cx="1146.8" cy="432.9" r="2.56"/><circle cx="1144.9" cy="432.7" r="2.56"/><circle cx="1084.7" cy="432.5" r="2.57"/><circle cx="1241.9" cy="432.5" r="2.57"/><circle cx="1224.4" cy="432.5" r="2.57"/><circle cx="1214.7" cy="432.3" r="2.57"/><circle cx="1175.9" cy="432.3" r="2.57"/><circle cx="1137.1" cy="432.1" r="2.57"/><circle cx="1162.3" cy="431.4" r="2.57"/><circle cx="1121.6" cy="431.3" r="2.57"/><circle cx="1191.4" cy="431.2" r="2.58"/><circle cx="1078.9" cy="431.1" r="2.58"/><circle cx="1172.0" cy="431.1" r="2.58"/><circle cx="1129.3" cy="431.0" r="2.58"/><circle cx="1125.5" cy="431.0" r="2.58"/><circle cx="1197.2" cy="430.8" r="2.58"/><circle cx="1218.6" cy="430.6" r="2.58"/><circle cx="1185.6" cy="430.6" r="2.58"/><circle cx="1108.0" cy="430.5" r="2.58"/><circle cx="1080.8" cy="430.5" r="2.58"/><circle cx="1139.0" cy="430.5" r="2.58"/><circle cx="1197.2" cy="430.4" r="2.58"/><circle cx="1166.2" cy="430.3" r="2.58"/><circle cx="1125.5" cy="430.1" r="2.58"/><circle cx="1208.9" cy="429.8" r="2.59"/><circle cx="1133.2" cy="429.7" r="2.59"/><circle cx="1175.9" cy="429.7" r="2.59"/><circle cx="1166.2" cy="429.6" r="2.59"/><circle cx="1125.5" cy="429.2" r="2.59"/><circle cx="1104.1" cy="429.1" r="2.59"/><circle cx="1084.7" cy="429.1" r="2.59"/><circle cx="1111.9" cy="429.1" r="2.59"/><circle cx="1205.0" cy="429.1" r="2.59"/><circle cx="1166.2" cy="428.8" r="2.59"/><circle cx="1265.1" cy="428.6" r="2.60"/><circle cx="1168.1" cy="428.5" r="2.60"/><circle cx="1160.4" cy="428.4" r="2.60"/><circle cx="1162.3" cy="428.3" r="2.60"/><circle cx="1123.5" cy="428.2" r="2.60"/><circle cx="1129.3" cy="427.9" r="2.60"/><circle cx="1191.4" cy="427.9" r="2.60"/><circle cx="1189.5" cy="427.8" r="2.60"/><circle cx="1119.6" cy="427.7" r="2.60"/><circle cx="1158.4" cy="427.6" r="2.60"/><circle cx="1067.3" cy="427.4" r="2.60"/><circle cx="1135.2" cy="427.3" r="2.61"/><circle cx="1218.6" cy="427.2" r="2.61"/><circle cx="1189.5" cy="427.2" r="2.61"/><circle cx="1210.8" cy="427.2" r="2.61"/><circle cx="1193.4" cy="426.6" r="2.61"/><circle cx="1106.1" cy="426.3" r="2.61"/><circle cx="1226.3" cy="425.8" r="2.62"/><circle cx="1170.1" cy="425.5" r="2.62"/><circle cx="1245.7" cy="425.4" r="2.62"/><circle cx="1117.7" cy="425.4" r="2.62"/><circle cx="1133.2" cy="425.4" r="2.62"/><circle cx="1129.3" cy="425.0" r="2.62"/><circle cx="1111.9" cy="425.0" r="2.62"/><circle cx="1094.4" cy="424.9" r="2.62"/><circle cx="1137.1" cy="424.9" r="2.62"/><circle cx="1175.9" cy="424.9" r="2.62"/><circle cx="1206.9" cy="424.8" r="2.62"/><circle cx="1129.3" cy="424.5" r="2.63"/><circle cx="1144.9" cy="424.4" r="2.63"/><circle cx="1069.2" cy="424.3" r="2.63"/><circle cx="1162.3" cy="423.9" r="2.63"/><circle cx="1146.8" cy="423.9" r="2.63"/><circle cx="1127.4" cy="423.9" r="2.63"/><circle cx="1150.7" cy="423.7" r="2.63"/><circle cx="1195.3" cy="423.7" r="2.63"/><circle cx="1150.7" cy="423.2" r="2.64"/><circle cx="1092.5" cy="423.2" r="2.64"/><circle cx="1191.4" cy="422.9" r="2.64"/><circle cx="1189.5" cy="422.7" r="2.64"/><circle cx="1135.2" cy="422.6" r="2.64"/><circle cx="1241.9" cy="422.4" r="2.64"/><circle cx="1175.9" cy="422.0" r="2.65"/><circle cx="1119.6" cy="421.5" r="2.65"/><circle cx="1185.6" cy="421.4" r="2.65"/><circle cx="1096.4" cy="421.3" r="2.65"/><circle cx="1166.2" cy="421.1" r="2.65"/><circle cx="1201.1" cy="421.1" r="2.65"/><circle cx="1082.8" cy="420.7" r="2.66"/><circle cx="1228.3" cy="420.5" r="2.66"/><circle cx="1164.3" cy="420.5" r="2.66"/><circle cx="1152.6" cy="420.4" r="2.66"/><circle cx="1206.9" cy="420.4" r="2.66"/><circle cx="1181.7" cy="420.4" r="2.66"/><circle cx="1111.9" cy="420.3" r="2.66"/><circle cx="1220.5" cy="420.2" r="2.66"/><circle cx="1131.3" cy="419.9" r="2.66"/><circle cx="1139.0" cy="419.8" r="2.66"/><circle cx="1113.8" cy="419.6" r="2.66"/><circle cx="1162.3" cy="419.5" r="2.66"/><circle cx="1071.1" cy="419.2" r="2.67"/><circle cx="1146.8" cy="419.2" r="2.67"/><circle cx="1210.8" cy="418.9" r="2.67"/><circle cx="1154.6" cy="418.9" r="2.67"/><circle cx="1055.6" cy="418.8" r="2.67"/><circle cx="1106.1" cy="418.7" r="2.67"/><circle cx="1117.7" cy="418.6" r="2.67"/><circle cx="1203.1" cy="418.6" r="2.67"/><circle cx="1133.2" cy="418.3" r="2.67"/><circle cx="1111.9" cy="418.1" r="2.67"/><circle cx="1115.8" cy="417.9" r="2.68"/><circle cx="1059.5" cy="417.9" r="2.68"/><circle cx="1201.1" cy="417.8" r="2.68"/><circle cx="1098.3" cy="417.8" r="2.68"/><circle cx="1183.7" cy="417.7" r="2.68"/><circle cx="1160.4" cy="417.7" r="2.68"/><circle cx="1115.8" cy="417.6" r="2.68"/><circle cx="1251.6" cy="417.5" r="2.68"/><circle cx="1129.3" cy="417.4" r="2.68"/><circle cx="1135.2" cy="416.9" r="2.68"/><circle cx="1162.3" cy="416.1" r="2.69"/><circle cx="1152.6" cy="415.9" r="2.69"/><circle cx="1131.3" cy="415.9" r="2.69"/><circle cx="1160.4" cy="415.8" r="2.69"/><circle cx="1179.8" cy="415.8" r="2.69"/><circle cx="1092.5" cy="415.4" r="2.70"/><circle cx="1234.1" cy="415.4" r="2.70"/><circle cx="1111.9" cy="415.2" r="2.70"/><circle cx="1121.6" cy="415.2" r="2.70"/><circle cx="1121.6" cy="415.0" r="2.70"/><circle cx="1148.7" cy="415.0" r="2.70"/><circle cx="1174.0" cy="414.5" r="2.70"/><circle cx="1144.9" cy="414.2" r="2.70"/><circle cx="1125.5" cy="414.1" r="2.71"/><circle cx="1131.3" cy="414.0" r="2.71"/><circle cx="1162.3" cy="413.9" r="2.71"/><circle cx="1142.9" cy="413.7" r="2.71"/><circle cx="1106.1" cy="413.7" r="2.71"/><circle cx="1125.5" cy="413.5" r="2.71"/><circle cx="1108.0" cy="413.4" r="2.71"/><circle cx="1094.4" cy="413.2" r="2.71"/><circle cx="1094.4" cy="413.1" r="2.71"/><circle cx="1113.8" cy="412.8" r="2.71"/><circle cx="1125.5" cy="412.8" r="2.72"/><circle cx="1098.3" cy="412.7" r="2.72"/><circle cx="1156.5" cy="412.6" r="2.72"/><circle cx="1174.0" cy="412.2" r="2.72"/><circle cx="1133.2" cy="412.1" r="2.72"/><circle cx="1208.9" cy="412.0" r="2.72"/><circle cx="1205.0" cy="411.5" r="2.72"/><circle cx="1125.5" cy="411.3" r="2.73"/><circle cx="1170.1" cy="411.2" r="2.73"/><circle cx="1096.4" cy="410.9" r="2.73"/><circle cx="1127.4" cy="410.8" r="2.73"/><circle cx="1156.5" cy="410.8" r="2.73"/><circle cx="1152.6" cy="410.8" r="2.73"/><circle cx="1179.8" cy="410.6" r="2.73"/><circle cx="1059.5" cy="410.4" r="2.73"/><circle cx="1071.1" cy="410.2" r="2.73"/><circle cx="1106.1" cy="410.1" r="2.74"/><circle cx="1125.5" cy="410.0" r="2.74"/><circle cx="1123.5" cy="410.0" r="2.74"/><circle cx="1210.8" cy="409.6" r="2.74"/><circle cx="1084.7" cy="409.6" r="2.74"/><circle cx="1069.2" cy="409.2" r="2.74"/><circle cx="1055.6" cy="409.2" r="2.74"/><circle cx="1214.7" cy="408.9" r="2.74"/><circle cx="1164.3" cy="408.8" r="2.75"/><circle cx="1139.0" cy="408.5" r="2.75"/><circle cx="1090.5" cy="408.3" r="2.75"/><circle cx="1109.9" cy="408.0" r="2.75"/><circle cx="1096.4" cy="408.0" r="2.75"/><circle cx="1216.6" cy="407.6" r="2.75"/><circle cx="1220.5" cy="407.5" r="2.76"/><circle cx="1177.8" cy="407.4" r="2.76"/><circle cx="1146.8" cy="407.3" r="2.76"/><circle cx="1100.2" cy="407.3" r="2.76"/><circle cx="1086.7" cy="407.3" r="2.76"/><circle cx="1166.2" cy="407.0" r="2.76"/><circle cx="1111.9" cy="406.9" r="2.76"/><circle cx="1142.9" cy="406.9" r="2.76"/><circle cx="1144.9" cy="406.8" r="2.76"/><circle cx="1172.0" cy="406.6" r="2.76"/><circle cx="1111.9" cy="406.1" r="2.77"/><circle cx="1193.4" cy="405.9" r="2.77"/><circle cx="1088.6" cy="405.7" r="2.77"/><circle cx="1078.9" cy="405.1" r="2.77"/><circle cx="1096.4" cy="405.1" r="2.77"/><circle cx="1063.4" cy="405.0" r="2.77"/><circle cx="1109.9" cy="404.6" r="2.78"/><circle cx="1090.5" cy="404.6" r="2.78"/><circle cx="1102.2" cy="404.2" r="2.78"/><circle cx="1125.5" cy="404.2" r="2.78"/><circle cx="1086.7" cy="403.9" r="2.78"/><circle cx="1148.7" cy="403.7" r="2.78"/><circle cx="1193.4" cy="403.6" r="2.79"/><circle cx="1100.2" cy="403.5" r="2.79"/><circle cx="1094.4" cy="403.4" r="2.79"/><circle cx="1168.1" cy="403.0" r="2.79"/><circle cx="1094.4" cy="402.9" r="2.79"/><circle cx="1121.6" cy="402.8" r="2.79"/><circle cx="1117.7" cy="402.4" r="2.79"/><circle cx="1086.7" cy="402.2" r="2.80"/><circle cx="1158.4" cy="402.1" r="2.80"/><circle cx="1104.1" cy="401.5" r="2.80"/><circle cx="1142.9" cy="401.5" r="2.80"/><circle cx="1183.7" cy="401.3" r="2.80"/><circle cx="1108.0" cy="400.6" r="2.81"/><circle cx="1100.2" cy="399.5" r="2.82"/><circle cx="1146.8" cy="399.4" r="2.82"/><circle cx="1117.7" cy="398.9" r="2.82"/><circle cx="1053.7" cy="398.7" r="2.82"/><circle cx="1146.8" cy="398.6" r="2.82"/><circle cx="1131.3" cy="398.3" r="2.82"/><circle cx="1073.1" cy="398.0" r="2.83"/><circle cx="1094.4" cy="397.3" r="2.83"/><circle cx="1098.3" cy="397.0" r="2.83"/><circle cx="1100.2" cy="396.3" r="2.84"/><circle cx="1148.7" cy="395.5" r="2.85"/><circle cx="1094.4" cy="395.2" r="2.85"/><circle cx="1102.2" cy="395.1" r="2.85"/><circle cx="1080.8" cy="394.8" r="2.85"/><circle cx="1113.8" cy="394.5" r="2.85"/><circle cx="1094.4" cy="394.3" r="2.86"/><circle cx="1119.6" cy="394.1" r="2.86"/><circle cx="1049.8" cy="394.0" r="2.86"/><circle cx="1111.9" cy="393.2" r="2.86"/><circle cx="1063.4" cy="393.1" r="2.86"/><circle cx="1123.5" cy="392.7" r="2.87"/><circle cx="1094.4" cy="392.1" r="2.87"/><circle cx="1158.4" cy="391.0" r="2.88"/><circle cx="1086.7" cy="390.9" r="2.88"/><circle cx="1100.2" cy="390.9" r="2.88"/><circle cx="1199.2" cy="390.5" r="2.88"/><circle cx="1090.5" cy="389.9" r="2.89"/><circle cx="1049.8" cy="389.8" r="2.89"/><circle cx="1098.3" cy="389.4" r="2.89"/><circle cx="1063.4" cy="389.3" r="2.89"/><circle cx="1152.6" cy="389.0" r="2.90"/><circle cx="1065.3" cy="388.1" r="2.90"/><circle cx="1100.2" cy="387.9" r="2.90"/><circle cx="1067.3" cy="387.6" r="2.91"/><circle cx="1078.9" cy="387.4" r="2.91"/><circle cx="1053.7" cy="387.0" r="2.91"/><circle cx="1096.4" cy="387.0" r="2.91"/><circle cx="1108.0" cy="386.7" r="2.91"/><circle cx="1088.6" cy="386.6" r="2.91"/><circle cx="1069.2" cy="386.4" r="2.92"/><circle cx="1078.9" cy="386.3" r="2.92"/><circle cx="1080.8" cy="385.9" r="2.92"/><circle cx="1109.9" cy="385.6" r="2.92"/><circle cx="1080.8" cy="385.5" r="2.92"/><circle cx="1067.3" cy="385.2" r="2.92"/><circle cx="1156.5" cy="385.2" r="2.92"/><circle cx="1082.8" cy="384.9" r="2.93"/><circle cx="1109.9" cy="384.5" r="2.93"/><circle cx="1086.7" cy="384.3" r="2.93"/><circle cx="1133.2" cy="384.0" r="2.93"/><circle cx="1113.8" cy="383.9" r="2.93"/><circle cx="1092.5" cy="383.8" r="2.93"/><circle cx="1108.0" cy="383.7" r="2.94"/><circle cx="1104.1" cy="383.2" r="2.94"/><circle cx="1084.7" cy="383.2" r="2.94"/><circle cx="1117.7" cy="383.0" r="2.94"/><circle cx="1080.8" cy="382.4" r="2.95"/><circle cx="1096.4" cy="381.6" r="2.95"/><circle cx="1119.6" cy="380.9" r="2.96"/><circle cx="1111.9" cy="380.8" r="2.96"/><circle cx="1111.9" cy="380.1" r="2.96"/><circle cx="1045.9" cy="379.8" r="2.97"/><circle cx="1044.0" cy="379.8" r="2.97"/><circle cx="1053.7" cy="379.6" r="2.97"/><circle cx="1067.3" cy="379.3" r="2.97"/><circle cx="1069.2" cy="378.2" r="2.98"/><circle cx="1080.8" cy="378.0" r="2.98"/><circle cx="1078.9" cy="378.0" r="2.98"/><circle cx="1082.8" cy="377.7" r="2.98"/><circle cx="1088.6" cy="377.7" r="2.98"/><circle cx="1090.5" cy="377.2" r="2.99"/><circle cx="1121.6" cy="377.1" r="2.99"/><circle cx="1096.4" cy="377.1" r="2.99"/><circle cx="1098.3" cy="376.9" r="2.99"/><circle cx="1094.4" cy="376.5" r="2.99"/><circle cx="1131.3" cy="376.2" r="2.99"/><circle cx="1057.6" cy="375.4" r="3.00"/><circle cx="1075.0" cy="375.3" r="3.00"/><circle cx="1181.7" cy="374.5" r="3.01"/><circle cx="1051.7" cy="374.4" r="3.01"/><circle cx="1086.7" cy="374.3" r="3.01"/><circle cx="1195.3" cy="374.2" r="3.01"/><circle cx="1148.7" cy="374.0" r="3.01"/><circle cx="1040.1" cy="373.7" r="3.01"/><circle cx="1150.7" cy="373.6" r="3.01"/><circle cx="1045.9" cy="373.5" r="3.01"/><circle cx="1084.7" cy="373.3" r="3.01"/><circle cx="1049.8" cy="373.0" r="3.02"/><circle cx="1106.1" cy="372.8" r="3.02"/><circle cx="1055.6" cy="372.5" r="3.02"/><circle cx="1049.8" cy="371.6" r="3.03"/><circle cx="1063.4" cy="371.2" r="3.03"/><circle cx="1086.7" cy="371.1" r="3.03"/><circle cx="1098.3" cy="370.7" r="3.03"/><circle cx="1096.4" cy="369.4" r="3.04"/><circle cx="1059.5" cy="369.2" r="3.05"/><circle cx="1042.0" cy="368.7" r="3.05"/><circle cx="1057.6" cy="368.5" r="3.05"/><circle cx="1158.4" cy="367.9" r="3.06"/><circle cx="1063.4" cy="367.9" r="3.06"/><circle cx="1096.4" cy="367.8" r="3.06"/><circle cx="1053.7" cy="367.4" r="3.06"/><circle cx="1071.1" cy="366.8" r="3.06"/><circle cx="1082.8" cy="366.6" r="3.07"/><circle cx="1038.2" cy="364.6" r="3.08"/><circle cx="1049.8" cy="364.5" r="3.08"/><circle cx="1080.8" cy="364.4" r="3.08"/><circle cx="1146.8" cy="363.1" r="3.09"/><circle cx="1044.0" cy="363.1" r="3.09"/><circle cx="1100.2" cy="362.4" r="3.10"/><circle cx="1042.0" cy="362.2" r="3.10"/><circle cx="1045.9" cy="359.0" r="3.12"/><circle cx="1051.7" cy="358.9" r="3.12"/><circle cx="1051.7" cy="358.7" r="3.13"/><circle cx="1069.2" cy="358.5" r="3.13"/><circle cx="1131.3" cy="358.3" r="3.13"/><circle cx="1044.0" cy="357.4" r="3.14"/><circle cx="1109.9" cy="356.6" r="3.14"/><circle cx="1117.7" cy="354.8" r="3.16"/><circle cx="1109.9" cy="349.1" r="3.20"/><circle cx="1053.7" cy="346.8" r="3.22"/><circle cx="1051.7" cy="346.1" r="3.22"/><circle cx="1038.2" cy="340.8" r="3.26"/><circle cx="1042.0" cy="340.4" r="3.26"/></g><g fill="#3a72df"><circle cx="1407.1" cy="829.9" r="0.95"/><circle cx="1413.0" cy="829.9" r="0.95"/><circle cx="1414.9" cy="829.9" r="0.95"/><circle cx="1422.7" cy="829.9" r="0.95"/><circle cx="1424.6" cy="829.9" r="0.95"/><circle cx="1426.5" cy="829.9" r="0.95"/><circle cx="1428.5" cy="829.9" r="0.95"/><circle cx="1430.4" cy="829.9" r="0.95"/><circle cx="1432.4" cy="829.9" r="0.95"/><circle cx="1434.3" cy="829.9" r="0.95"/><circle cx="1436.2" cy="829.9" r="0.95"/><circle cx="1438.2" cy="829.9" r="0.95"/><circle cx="1440.1" cy="829.9" r="0.95"/><circle cx="1442.1" cy="829.9" r="0.95"/><circle cx="1444.0" cy="829.9" r="0.95"/><circle cx="1445.9" cy="829.9" r="0.95"/><circle cx="1447.9" cy="829.9" r="0.95"/><circle cx="1449.8" cy="829.9" r="0.95"/><circle cx="1451.8" cy="829.9" r="0.95"/><circle cx="1453.7" cy="829.9" r="0.95"/><circle cx="1455.6" cy="829.9" r="0.95"/><circle cx="1457.6" cy="829.9" r="0.95"/><circle cx="1459.5" cy="829.9" r="0.95"/><circle cx="1461.5" cy="829.9" r="0.95"/><circle cx="1463.4" cy="829.9" r="0.95"/><circle cx="1465.3" cy="829.9" r="0.95"/><circle cx="1467.3" cy="829.9" r="0.95"/><circle cx="1469.2" cy="829.9" r="0.95"/><circle cx="1471.2" cy="829.9" r="0.95"/><circle cx="1473.1" cy="829.9" r="0.95"/><circle cx="1475.0" cy="829.9" r="0.95"/><circle cx="1477.0" cy="829.9" r="0.95"/><circle cx="1478.9" cy="829.9" r="0.95"/><circle cx="1480.9" cy="829.9" r="0.95"/><circle cx="1482.8" cy="829.9" r="0.95"/><circle cx="1484.7" cy="829.9" r="0.95"/><circle cx="1486.7" cy="829.9" r="0.95"/><circle cx="1488.6" cy="829.9" r="0.95"/><circle cx="1490.6" cy="829.9" r="0.95"/><circle cx="1492.5" cy="829.9" r="0.95"/><circle cx="1494.4" cy="829.9" r="0.95"/><circle cx="1496.4" cy="829.9" r="0.95"/><circle cx="1498.3" cy="829.9" r="0.95"/><circle cx="1500.3" cy="829.9" r="0.95"/><circle cx="1502.2" cy="829.9" r="0.95"/><circle cx="1504.1" cy="829.9" r="0.95"/><circle cx="1506.1" cy="829.9" r="0.95"/><circle cx="1508.0" cy="829.9" r="0.95"/><circle cx="1510.0" cy="829.9" r="0.95"/><circle cx="1511.9" cy="829.9" r="0.95"/><circle cx="1513.8" cy="829.9" r="0.95"/><circle cx="1515.8" cy="829.9" r="0.95"/><circle cx="1517.7" cy="829.9" r="0.95"/><circle cx="1519.7" cy="829.9" r="0.95"/><circle cx="1521.6" cy="829.9" r="0.95"/><circle cx="1523.5" cy="829.9" r="0.95"/><circle cx="1525.5" cy="829.9" r="0.95"/><circle cx="1527.4" cy="829.9" r="0.95"/><circle cx="1529.4" cy="829.9" r="0.95"/><circle cx="1531.3" cy="829.9" r="0.95"/><circle cx="1533.2" cy="829.9" r="0.95"/><circle cx="1535.2" cy="829.9" r="0.95"/><circle cx="1537.1" cy="829.9" r="0.95"/><circle cx="1539.1" cy="829.9" r="0.95"/><circle cx="1541.0" cy="829.9" r="0.95"/><circle cx="1542.9" cy="829.9" r="0.95"/><circle cx="1544.9" cy="829.9" r="0.95"/><circle cx="1546.8" cy="829.9" r="0.95"/><circle cx="1548.8" cy="829.9" r="0.95"/><circle cx="1550.7" cy="829.9" r="0.95"/><circle cx="1552.6" cy="829.9" r="0.95"/><circle cx="1554.6" cy="829.9" r="0.95"/><circle cx="1556.5" cy="829.9" r="0.95"/><circle cx="1558.5" cy="829.9" r="0.95"/><circle cx="1560.4" cy="829.9" r="0.95"/><circle cx="1562.3" cy="829.9" r="0.95"/><circle cx="1564.3" cy="829.9" r="0.95"/><circle cx="1566.2" cy="829.9" r="0.95"/><circle cx="1568.2" cy="829.9" r="0.95"/><circle cx="1570.1" cy="829.9" r="0.95"/><circle cx="1572.0" cy="829.9" r="0.95"/><circle cx="1574.0" cy="829.9" r="0.95"/><circle cx="1575.9" cy="829.9" r="0.95"/><circle cx="1577.9" cy="829.9" r="0.95"/><circle cx="1579.8" cy="829.9" r="0.95"/><circle cx="1581.7" cy="829.9" r="0.95"/><circle cx="1583.7" cy="829.9" r="0.95"/><circle cx="1585.6" cy="829.9" r="0.95"/><circle cx="1587.6" cy="829.9" r="0.95"/><circle cx="1589.5" cy="829.9" r="0.95"/><circle cx="1591.4" cy="829.9" r="0.95"/><circle cx="1593.4" cy="829.9" r="0.95"/><circle cx="1595.3" cy="829.9" r="0.95"/><circle cx="1597.3" cy="829.9" r="0.95"/><circle cx="1599.2" cy="829.9" r="0.95"/><circle cx="1601.1" cy="829.9" r="0.95"/><circle cx="1603.1" cy="829.9" r="0.95"/><circle cx="1605.0" cy="829.9" r="0.95"/><circle cx="1607.0" cy="829.9" r="0.95"/><circle cx="1608.9" cy="829.9" r="0.95"/><circle cx="1610.8" cy="829.9" r="0.95"/><circle cx="1612.8" cy="829.9" r="0.95"/><circle cx="1614.7" cy="829.9" r="0.95"/><circle cx="1616.7" cy="829.9" r="0.95"/><circle cx="1618.6" cy="829.9" r="0.95"/><circle cx="1620.5" cy="829.9" r="0.95"/><circle cx="1622.5" cy="829.9" r="0.95"/><circle cx="1624.4" cy="829.9" r="0.95"/><circle cx="1626.4" cy="829.9" r="0.95"/><circle cx="1628.3" cy="829.9" r="0.95"/><circle cx="1630.2" cy="829.9" r="0.95"/><circle cx="1632.2" cy="829.9" r="0.95"/><circle cx="1634.1" cy="829.9" r="0.95"/><circle cx="1636.1" cy="829.9" r="0.95"/><circle cx="1638.0" cy="829.9" r="0.95"/><circle cx="1639.9" cy="829.9" r="0.95"/><circle cx="1641.9" cy="829.9" r="0.95"/><circle cx="1643.8" cy="829.9" r="0.95"/><circle cx="1645.8" cy="829.9" r="0.95"/><circle cx="1647.7" cy="829.9" r="0.95"/><circle cx="1649.6" cy="829.9" r="0.95"/><circle cx="1651.6" cy="829.9" r="0.95"/><circle cx="1653.5" cy="829.9" r="0.95"/><circle cx="1655.5" cy="829.9" r="0.95"/><circle cx="1657.4" cy="829.9" r="0.95"/><circle cx="1659.3" cy="829.9" r="0.95"/><circle cx="1661.3" cy="829.9" r="0.95"/><circle cx="1663.2" cy="829.9" r="0.95"/><circle cx="1665.2" cy="829.9" r="0.95"/><circle cx="1667.1" cy="829.9" r="0.95"/><circle cx="1669.0" cy="829.9" r="0.95"/><circle cx="1671.0" cy="829.9" r="0.95"/><circle cx="1672.9" cy="829.9" r="0.95"/><circle cx="1674.9" cy="829.9" r="0.95"/><circle cx="1676.8" cy="829.9" r="0.95"/><circle cx="1678.7" cy="829.9" r="0.95"/><circle cx="1680.7" cy="829.9" r="0.95"/><circle cx="1682.6" cy="829.9" r="0.95"/><circle cx="1684.6" cy="829.9" r="0.95"/><circle cx="1686.5" cy="829.9" r="0.95"/><circle cx="1688.4" cy="829.9" r="0.95"/><circle cx="1690.4" cy="829.9" r="0.95"/><circle cx="1692.3" cy="829.9" r="0.95"/><circle cx="1694.3" cy="829.9" r="0.95"/><circle cx="1696.2" cy="829.9" r="0.95"/><circle cx="1698.1" cy="829.9" r="0.95"/><circle cx="1700.1" cy="829.9" r="0.95"/><circle cx="1702.0" cy="829.9" r="0.95"/><circle cx="1704.0" cy="829.9" r="0.95"/><circle cx="1705.9" cy="829.9" r="0.95"/><circle cx="1707.8" cy="829.9" r="0.95"/><circle cx="1709.8" cy="829.9" r="0.95"/><circle cx="1711.7" cy="829.9" r="0.95"/><circle cx="1713.7" cy="829.9" r="0.95"/><circle cx="1715.6" cy="829.9" r="0.95"/><circle cx="1717.5" cy="829.9" r="0.95"/><circle cx="1719.5" cy="829.9" r="0.95"/><circle cx="1721.4" cy="829.9" r="0.95"/><circle cx="1723.4" cy="829.9" r="0.95"/><circle cx="1725.3" cy="829.9" r="0.95"/><circle cx="1727.2" cy="829.9" r="0.95"/><circle cx="1729.2" cy="829.9" r="0.95"/><circle cx="1731.1" cy="829.9" r="0.95"/><circle cx="1733.1" cy="829.9" r="0.95"/><circle cx="1735.0" cy="829.9" r="0.95"/><circle cx="1736.9" cy="829.9" r="0.95"/><circle cx="1738.9" cy="829.9" r="0.95"/><circle cx="1740.8" cy="829.9" r="0.95"/><circle cx="1742.8" cy="829.9" r="0.95"/><circle cx="1744.7" cy="829.9" r="0.95"/><circle cx="1746.6" cy="829.9" r="0.95"/><circle cx="1748.6" cy="829.9" r="0.95"/><circle cx="1750.5" cy="829.9" r="0.95"/><circle cx="1752.5" cy="829.9" r="0.95"/><circle cx="1754.4" cy="829.9" r="0.95"/><circle cx="1756.3" cy="829.9" r="0.95"/><circle cx="1758.3" cy="829.9" r="0.95"/><circle cx="1760.2" cy="829.9" r="0.95"/><circle cx="1762.2" cy="829.9" r="0.95"/><circle cx="1764.1" cy="829.9" r="0.95"/><circle cx="1766.0" cy="829.9" r="0.95"/><circle cx="1768.0" cy="829.9" r="0.95"/><circle cx="1769.9" cy="829.9" r="0.95"/><circle cx="1771.9" cy="829.9" r="0.95"/><circle cx="1773.8" cy="829.9" r="0.95"/><circle cx="1551.2" cy="807.9" r="0.50"/><circle cx="1558.0" cy="806.0" r="0.50"/><circle cx="1440.6" cy="803.4" r="0.50"/><circle cx="1505.1" cy="803.3" r="0.50"/><circle cx="1564.1" cy="801.1" r="0.50"/><circle cx="1546.3" cy="804.6" r="0.50"/><circle cx="1639.9" cy="811.5" r="0.50"/><circle cx="1555.4" cy="805.4" r="0.50"/><circle cx="1468.0" cy="783.8" r="0.50"/><circle cx="1553.4" cy="794.9" r="0.50"/><circle cx="1505.7" cy="792.2" r="0.50"/><circle cx="1496.4" cy="798.7" r="0.50"/><circle cx="1470.6" cy="794.0" r="0.50"/><circle cx="1512.9" cy="785.6" r="0.50"/><circle cx="1625.3" cy="823.9" r="0.50"/><circle cx="1548.6" cy="823.4" r="0.50"/><circle cx="1566.8" cy="813.3" r="0.50"/><circle cx="1502.5" cy="817.3" r="0.50"/><circle cx="1586.0" cy="792.5" r="0.50"/><circle cx="1486.5" cy="799.8" r="0.50"/><circle cx="1533.3" cy="804.5" r="0.50"/><circle cx="1525.1" cy="789.8" r="0.50"/><circle cx="1549.0" cy="821.6" r="0.50"/><circle cx="1621.5" cy="805.4" r="0.50"/><circle cx="1586.2" cy="821.4" r="0.50"/><circle cx="1440.8" cy="806.6" r="0.50"/><circle cx="1563.1" cy="782.0" r="0.50"/><circle cx="1437.3" cy="821.0" r="0.50"/><circle cx="1623.3" cy="792.7" r="0.50"/><circle cx="1672.3" cy="797.6" r="0.50"/><circle cx="1569.5" cy="801.0" r="0.50"/><circle cx="1473.1" cy="821.7" r="0.50"/><circle cx="1541.8" cy="801.9" r="0.50"/><circle cx="1444.7" cy="791.4" r="0.50"/><circle cx="1571.7" cy="821.7" r="0.50"/><circle cx="1562.1" cy="818.6" r="0.50"/><circle cx="1595.3" cy="808.1" r="0.50"/><circle cx="1512.8" cy="800.9" r="0.50"/><circle cx="1484.3" cy="815.6" r="0.50"/><circle cx="1506.8" cy="817.3" r="0.50"/><circle cx="1491.8" cy="784.0" r="0.50"/><circle cx="1476.6" cy="807.2" r="0.50"/><circle cx="1552.6" cy="824.0" r="0.50"/><circle cx="1510.7" cy="818.4" r="0.50"/><circle cx="1461.5" cy="782.4" r="0.50"/><circle cx="1566.1" cy="800.6" r="0.50"/><circle cx="1492.4" cy="805.0" r="0.50"/><circle cx="1528.8" cy="811.1" r="0.50"/><circle cx="1519.9" cy="796.5" r="0.50"/><circle cx="1543.8" cy="804.3" r="0.50"/><circle cx="1509.0" cy="797.2" r="0.50"/><circle cx="1577.9" cy="798.1" r="0.50"/><circle cx="1530.9" cy="785.4" r="0.50"/><circle cx="1497.1" cy="811.9" r="0.50"/><circle cx="1615.6" cy="804.3" r="0.50"/><circle cx="1509.3" cy="807.2" r="0.50"/><circle cx="1588.6" cy="824.3" r="0.50"/><circle cx="1448.0" cy="783.3" r="0.50"/><circle cx="1522.5" cy="781.9" r="0.50"/><circle cx="1538.4" cy="796.9" r="0.50"/><circle cx="1440.7" cy="786.2" r="0.50"/><circle cx="1535.4" cy="820.1" r="0.50"/><circle cx="1496.2" cy="797.4" r="0.50"/><circle cx="1551.1" cy="819.3" r="0.50"/><circle cx="1550.9" cy="813.7" r="0.50"/><circle cx="1510.5" cy="791.3" r="0.50"/><circle cx="1604.5" cy="808.5" r="0.50"/><circle cx="1474.1" cy="812.5" r="0.50"/><circle cx="1464.0" cy="815.3" r="0.50"/><circle cx="1564.6" cy="819.1" r="0.50"/><circle cx="1517.8" cy="791.5" r="0.50"/><circle cx="1629.6" cy="781.5" r="0.50"/><circle cx="1533.0" cy="793.8" r="0.50"/><circle cx="1468.1" cy="789.6" r="0.50"/><circle cx="1671.0" cy="784.9" r="0.50"/><circle cx="1630.7" cy="795.2" r="0.50"/><circle cx="1569.3" cy="797.2" r="0.50"/><circle cx="1441.4" cy="807.9" r="0.50"/><circle cx="1469.1" cy="782.7" r="0.50"/><circle cx="1477.7" cy="820.4" r="0.50"/><circle cx="1504.8" cy="805.6" r="0.50"/><circle cx="1511.6" cy="796.1" r="0.50"/><circle cx="1463.3" cy="781.0" r="0.50"/><circle cx="1586.7" cy="792.3" r="0.50"/><circle cx="1632.4" cy="783.7" r="0.50"/><circle cx="1602.1" cy="817.2" r="0.50"/><circle cx="1599.5" cy="803.1" r="0.50"/><circle cx="1454.7" cy="813.6" r="0.50"/><circle cx="1591.9" cy="790.4" r="0.50"/><circle cx="1582.5" cy="781.8" r="0.50"/><circle cx="1549.3" cy="780.5" r="0.50"/><circle cx="1471.2" cy="800.9" r="0.50"/><circle cx="1616.4" cy="817.8" r="0.50"/><circle cx="1574.4" cy="782.7" r="0.50"/><circle cx="1632.4" cy="789.1" r="0.50"/><circle cx="1557.0" cy="803.2" r="0.50"/><circle cx="1511.4" cy="798.6" r="0.50"/><circle cx="1580.3" cy="790.0" r="0.50"/><circle cx="1621.3" cy="821.2" r="0.50"/><circle cx="1502.2" cy="803.7" r="0.50"/></g><path d="M1043.8 339.7L1449.8 810.1" stroke="#ee3b3b" stroke-width="3" stroke-linecap="round"/><path d="M1406.6 817L1772 834.8" stroke="#1a4a9e" stroke-width="3.4" stroke-linecap="round"/></svg>
</body></html>
